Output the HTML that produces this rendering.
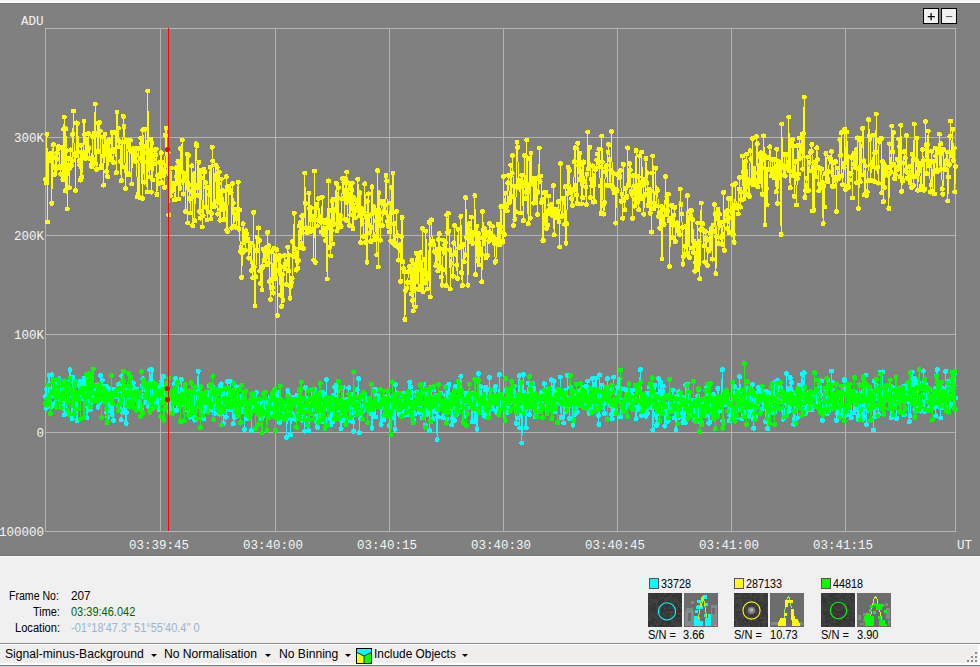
<!DOCTYPE html>
<html><head><meta charset="utf-8">
<style>
*{margin:0;padding:0;box-sizing:border-box}
html,body{width:980px;height:667px;overflow:hidden;background:#f0f0f0;font-family:"Liberation Sans",sans-serif}
#top{position:absolute;left:0;top:0;width:980px;height:3px;background:#f5f5f5;border-bottom:1px solid #fff}
#plot{position:absolute;left:0;top:0;width:980px;height:667px}
.ax{font-family:"Liberation Mono",monospace;font-size:12.5px;fill:#f4f4f4}
.btn{position:absolute;top:8px;width:16px;height:16px;border:1px solid #000;background:#f0f0f0}
.lbl{position:absolute;font-size:12px;color:#000;white-space:nowrap;transform-origin:0 0}
.r{text-align:right;width:60px;left:-2px}
.sw{position:absolute;width:10px;height:11px;border:1px solid #555}
.th{position:absolute;width:34px;height:34px;background:#3c3c3c}
.th2{position:absolute;width:34px;height:34px;background:#6e6e6e}
#tb{position:absolute;left:0;top:643px;width:980px;height:24px;border-top:1px solid #8c8c8c;background:#ffffff}
#tbin{position:absolute;left:0;top:1px;width:978px;height:18px;background:#f0eded}
#tbl{position:absolute;left:0;top:665px;width:980px;height:2px;background:#7a7a7a}
.tbt{position:absolute;top:2px;font-size:12.5px;color:#000;white-space:nowrap;transform-origin:0 0}
.arr{position:absolute;top:9px;width:0;height:0;border-left:3px solid transparent;border-right:3px solid transparent;border-top:3px solid #000}
</style></head><body>
<svg id="plot" width="980" height="667" viewBox="0 0 980 667" shape-rendering="crispEdges">
<rect x="0" y="3" width="980" height="553" fill="#808080"/>
<rect x="0" y="3" width="980" height="1" fill="#747474"/>
<rect x="0" y="555" width="980" height="1" fill="#777777"/>
<rect x="0" y="0" width="980" height="2" fill="#f5f5f5"/>
<rect x="0" y="2" width="980" height="1" fill="#ffffff"/>
<rect x="0" y="556" width="980" height="1" fill="#f8f8f8"/>
<g stroke="#b4b4b4" stroke-width="1" fill="none">
<rect x="45.5" y="28.5" width="910" height="503"/>
<path d="M160.5 28V531M275.5 28V531M389.5 28V531M503.5 28V531M617.5 28V531M731.5 28V531M845.5 28V531M45 137.5H955M45 235.5H955M45 334.5H955M45 432.5H955"/>
</g>
<g shape-rendering="auto">
<polyline fill="none" stroke="#00ffff" stroke-width="1" shape-rendering="crispEdges" points="45.5,396.3 46.2,408.1 46.9,389.2 47.6,399.3 48.3,388.3 49.0,375.4 49.7,398.7 50.4,403.7 51.1,407.1 51.8,374.8 52.5,395.7 53.2,388.5 53.9,386.1 54.6,404.8 55.3,383.8 56.0,396.3 56.7,384.5 57.4,397.4 58.1,395.7 58.8,378.8 59.5,398.2 60.2,385.3 60.9,399.0 61.6,405.7 62.3,383.6 63.0,408.3 63.7,391.7 64.4,414.8 65.1,387.7 65.8,397.4 66.5,411.9 67.2,411.6 67.9,400.6 68.6,396.0 69.3,382.4 70.0,369.7 70.7,391.9 71.4,392.2 72.1,418.5 72.8,377.4 73.5,396.0 74.2,405.8 74.9,408.1 75.6,399.8 76.3,401.0 77.0,420.8 77.7,396.0 78.4,384.2 79.1,396.5 79.8,381.0 80.5,382.1 81.2,398.4 81.9,391.6 82.6,383.9 83.3,396.7 84.0,378.4 84.7,393.5 85.4,394.8 86.1,378.1 86.8,417.9 87.5,406.5 88.2,389.7 88.9,407.0 89.6,396.7 90.3,409.9 91.0,402.5 91.7,383.7 92.4,392.7 93.1,400.1 93.8,390.2 94.5,393.6 95.2,388.8 95.9,400.8 96.6,385.4 97.3,386.4 98.0,407.3 98.7,395.1 99.4,399.5 100.1,402.2 100.8,375.5 101.5,399.6 102.2,380.2 102.9,400.3 103.6,398.6 104.3,386.1 105.0,401.3 105.7,394.1 106.4,412.6 107.1,386.8 107.8,417.3 108.5,394.9 109.2,410.4 109.9,389.1 110.7,406.2 111.4,395.1 112.1,414.3 112.8,393.2 113.5,420.6 114.2,389.0 114.9,396.5 115.6,396.9 116.3,392.0 117.0,395.6 117.7,396.5 118.4,384.6 119.1,405.4 119.8,383.9 120.5,398.6 121.2,419.8 121.9,375.9 122.6,386.3 123.3,410.8 124.0,390.1 124.7,412.5 125.4,402.4 126.1,423.4 126.8,412.5 127.5,390.5 128.2,400.5 128.9,391.3 129.6,388.5 130.3,397.1 131.0,403.8 131.7,396.0 132.4,402.0 133.1,382.9 133.8,387.9 134.5,391.7 135.2,391.9 135.9,396.6 136.6,389.2 137.3,400.2 138.0,400.0 138.7,403.1 139.4,406.9 140.1,393.6 140.8,396.7 141.5,409.8 142.2,386.1 142.9,378.9 143.6,396.2 144.3,384.2 145.0,402.2 145.7,401.1 146.4,398.4 147.1,396.8 147.8,397.9 148.5,406.4 149.2,382.8 149.9,369.8 150.6,397.2 151.3,383.4 152.0,369.9 152.7,389.8 153.4,408.0 154.1,399.7 154.8,404.4 155.5,390.3 156.2,407.0 156.9,399.2 157.6,405.2 158.3,386.8 159.0,409.9 159.7,401.4 160.4,385.1 161.1,385.7 161.8,380.9 162.5,399.5 163.2,376.4 163.9,398.5 164.6,392.0 165.3,390.9 166.0,394.1 166.7,408.5 167.4,397.6 168.1,408.6 168.8,389.5 169.5,412.5 170.2,402.4 170.9,394.4 171.6,407.5 172.3,412.4 173.0,400.2 173.7,410.4 174.4,383.8 175.1,395.0 175.8,378.5 176.5,410.3 177.2,396.0 177.9,394.8 178.6,382.6 179.3,398.4 180.0,405.0 180.7,393.4 181.4,379.3 182.1,404.3 182.8,391.5 183.5,402.4 184.2,400.9 184.9,387.9 185.6,402.4 186.3,406.3 187.0,400.1 187.7,410.2 188.4,391.7 189.1,398.9 189.8,417.1 190.5,414.7 191.2,410.3 191.9,397.2 192.6,396.7 193.3,416.3 194.0,399.6 194.7,420.1 195.4,397.7 196.1,401.6 196.8,399.6 197.5,387.3 198.2,371.3 198.9,391.2 199.6,400.0 200.3,398.7 201.0,395.0 201.7,417.9 202.4,396.4 203.1,394.2 203.8,418.7 204.5,410.6 205.2,404.3 205.9,395.2 206.6,407.3 207.3,401.7 208.0,405.2 208.7,394.4 209.4,385.9 210.1,398.7 210.8,409.8 211.5,408.9 212.2,406.6 212.9,387.2 213.6,388.9 214.3,413.3 215.0,399.1 215.7,400.9 216.4,391.5 217.1,402.6 217.8,404.8 218.5,401.7 219.2,414.1 219.9,401.3 220.6,386.0 221.3,383.9 222.0,413.1 222.7,396.2 223.4,423.6 224.1,405.9 224.8,393.5 225.5,403.4 226.2,417.2 226.9,408.8 227.6,381.7 228.3,396.6 229.0,393.7 229.7,409.8 230.4,381.5 231.1,401.7 231.8,405.7 232.5,403.3 233.2,423.7 233.9,401.4 234.6,417.4 235.3,386.2 236.0,409.6 236.7,403.9 237.4,409.2 238.1,387.7 238.8,404.3 239.5,398.7 240.2,396.6 241.0,398.3 241.7,407.6 242.4,397.3 243.1,411.5 243.8,404.2 244.5,429.6 245.2,411.4 245.9,413.3 246.6,409.3 247.3,418.7 248.0,407.4 248.7,405.5 249.4,404.0 250.1,402.3 250.8,400.1 251.5,430.3 252.2,408.1 252.9,397.4 253.6,404.4 254.3,405.9 255.0,406.3 255.7,406.7 256.4,392.7 257.1,404.2 257.8,412.5 258.5,401.7 259.2,408.2 259.9,402.9 260.6,414.1 261.3,418.9 262.0,409.6 262.7,416.3 263.4,402.4 264.1,407.0 264.8,402.3 265.5,407.6 266.2,401.9 266.9,412.5 267.6,411.6 268.3,413.7 269.0,405.1 269.7,415.0 270.4,397.0 271.1,401.9 271.8,412.8 272.5,407.7 273.2,414.9 273.9,406.5 274.6,399.6 275.3,409.2 276.0,407.5 276.7,407.7 277.4,405.5 278.1,395.6 278.8,392.3 279.5,422.8 280.2,398.9 280.9,418.7 281.6,413.9 282.3,404.7 283.0,406.6 283.7,408.7 284.4,411.1 285.1,406.4 285.8,406.9 286.5,437.4 287.2,419.2 287.9,390.6 288.6,394.6 289.3,407.7 290.0,411.3 290.7,434.6 291.4,412.5 292.1,418.4 292.8,414.9 293.5,397.6 294.2,398.2 294.9,399.5 295.6,419.3 296.3,414.7 297.0,395.3 297.7,396.0 298.4,398.2 299.1,399.4 299.8,405.2 300.5,402.2 301.2,399.2 301.9,420.2 302.6,409.1 303.3,410.6 304.0,413.5 304.7,431.1 305.4,387.5 306.1,398.6 306.8,405.3 307.5,418.7 308.2,403.3 308.9,430.7 309.6,406.7 310.3,408.9 311.0,411.4 311.7,389.9 312.4,406.8 313.1,398.6 313.8,406.3 314.5,389.6 315.2,416.4 315.9,417.1 316.6,421.5 317.3,427.4 318.0,404.2 318.7,401.7 319.4,416.9 320.1,393.0 320.8,421.8 321.5,420.3 322.2,392.6 322.9,402.9 323.6,401.0 324.3,394.4 325.0,408.6 325.7,422.2 326.4,379.5 327.1,406.2 327.8,407.0 328.5,418.3 329.2,409.9 329.9,406.1 330.6,424.8 331.3,416.6 332.0,408.7 332.7,421.7 333.4,395.4 334.1,406.3 334.8,387.1 335.5,397.3 336.2,385.3 336.9,388.4 337.6,390.7 338.3,410.9 339.0,403.5 339.7,405.7 340.4,419.2 341.1,428.8 341.8,406.0 342.5,418.0 343.2,387.3 343.9,420.5 344.6,401.4 345.3,410.4 346.0,417.6 346.7,399.7 347.4,405.5 348.1,404.5 348.8,387.9 349.5,401.6 350.2,420.6 350.9,406.0 351.6,404.8 352.3,394.2 353.0,422.0 353.7,431.4 354.4,399.4 355.1,407.6 355.8,414.2 356.5,413.9 357.2,389.7 357.9,404.1 358.6,378.8 359.3,432.8 360.0,405.6 360.7,418.8 361.4,412.8 362.1,407.6 362.8,410.8 363.5,399.8 364.2,394.2 364.9,403.8 365.6,398.8 366.3,407.6 367.0,401.1 367.7,399.7 368.4,406.7 369.1,402.2 369.8,408.8 370.6,412.4 371.3,414.0 372.0,428.4 372.7,403.5 373.4,413.0 374.1,389.8 374.8,393.3 375.5,417.0 376.2,389.8 376.9,405.0 377.6,405.4 378.3,395.8 379.0,406.3 379.7,398.7 380.4,408.1 381.1,424.5 381.8,402.6 382.5,405.4 383.2,405.2 383.9,419.9 384.6,403.3 385.3,414.9 386.0,411.3 386.7,396.6 387.4,398.6 388.1,402.0 388.8,415.1 389.5,425.3 390.2,398.1 390.9,414.3 391.6,405.0 392.3,405.2 393.0,396.8 393.7,417.6 394.4,403.9 395.1,429.3 395.8,384.5 396.5,403.3 397.2,403.4 397.9,406.7 398.6,402.5 399.3,414.4 400.0,403.2 400.7,412.7 401.4,396.9 402.1,398.6 402.8,411.1 403.5,393.6 404.2,415.2 404.9,406.9 405.6,407.9 406.3,404.2 407.0,404.8 407.7,414.3 408.4,403.8 409.1,399.8 409.8,382.3 410.5,387.0 411.2,407.0 411.9,392.7 412.6,409.5 413.3,409.0 414.0,419.9 414.7,413.8 415.4,405.9 416.1,397.3 416.8,392.0 417.5,402.3 418.2,398.7 418.9,404.9 419.6,412.3 420.3,408.7 421.0,403.8 421.7,403.0 422.4,417.9 423.1,390.8 423.8,384.0 424.5,392.0 425.2,425.4 425.9,414.5 426.6,397.2 427.3,402.8 428.0,413.2 428.7,395.0 429.4,430.5 430.1,404.0 430.8,409.7 431.5,387.0 432.2,398.4 432.9,418.7 433.6,390.1 434.3,411.6 435.0,405.3 435.7,406.2 436.4,395.8 437.1,439.6 437.8,416.9 438.5,402.2 439.2,403.7 439.9,393.6 440.6,393.1 441.3,407.6 442.0,401.1 442.7,417.6 443.4,403.6 444.1,412.6 444.8,400.1 445.5,395.4 446.2,410.2 446.9,419.4 447.6,392.7 448.3,402.1 449.0,384.5 449.7,396.4 450.4,400.7 451.1,409.0 451.8,425.0 452.5,418.2 453.2,406.5 453.9,397.8 454.6,420.5 455.3,386.6 456.0,403.1 456.7,414.2 457.4,398.4 458.1,410.2 458.8,400.3 459.5,398.2 460.2,403.7 460.9,376.3 461.6,398.5 462.3,406.9 463.0,408.0 463.7,399.4 464.4,416.1 465.1,401.5 465.8,393.1 466.5,397.0 467.2,402.6 467.9,399.3 468.6,407.4 469.3,405.8 470.0,405.3 470.7,396.5 471.4,402.6 472.1,421.8 472.8,393.2 473.5,410.7 474.2,406.4 474.9,421.9 475.6,420.1 476.3,400.6 477.0,429.4 477.7,395.9 478.4,373.5 479.1,408.2 479.8,386.3 480.5,397.8 481.2,387.0 481.9,412.3 482.6,402.2 483.3,399.6 484.0,396.5 484.7,416.2 485.4,391.0 486.1,387.3 486.8,412.6 487.5,389.9 488.2,412.7 488.9,417.4 489.6,377.5 490.3,402.0 491.0,401.3 491.7,405.0 492.4,408.9 493.1,399.2 493.8,401.7 494.5,390.0 495.2,386.6 495.9,397.7 496.6,411.2 497.3,413.1 498.0,406.3 498.7,401.7 499.4,374.7 500.1,409.5 500.9,400.1 501.6,400.8 502.3,401.6 503.0,402.7 503.7,405.0 504.4,399.4 505.1,404.1 505.8,390.4 506.5,403.1 507.2,412.6 507.9,402.4 508.6,410.9 509.3,389.2 510.0,394.2 510.7,402.4 511.4,400.3 512.1,393.4 512.8,397.4 513.5,391.2 514.2,386.2 514.9,399.4 515.6,406.0 516.3,423.4 517.0,418.0 517.7,398.8 518.4,404.5 519.1,375.6 519.8,428.0 520.5,395.9 521.2,403.5 521.9,443.0 522.6,394.5 523.3,374.5 524.0,392.0 524.7,397.2 525.4,409.3 526.1,427.9 526.8,407.5 527.5,399.8 528.2,383.1 528.9,397.3 529.6,414.4 530.3,408.5 531.0,404.7 531.7,400.7 532.4,383.5 533.1,405.9 533.8,388.0 534.5,392.2 535.2,416.6 535.9,400.3 536.6,410.6 537.3,412.0 538.0,397.3 538.7,407.9 539.4,403.4 540.1,401.2 540.8,407.8 541.5,392.8 542.2,401.1 542.9,406.9 543.6,399.0 544.3,383.8 545.0,399.8 545.7,409.1 546.4,389.9 547.1,392.5 547.8,403.8 548.5,390.7 549.2,397.2 549.9,406.4 550.6,397.5 551.3,379.8 552.0,408.7 552.7,387.8 553.4,405.4 554.1,381.3 554.8,411.8 555.5,397.8 556.2,394.0 556.9,400.9 557.6,390.5 558.3,402.9 559.0,400.6 559.7,402.6 560.4,377.0 561.1,417.5 561.8,404.5 562.5,395.5 563.2,401.9 563.9,423.0 564.6,401.8 565.3,411.8 566.0,390.1 566.7,398.5 567.4,375.3 568.1,398.9 568.8,406.0 569.5,418.2 570.2,387.5 570.9,397.3 571.6,402.1 572.3,394.5 573.0,425.1 573.7,394.7 574.4,414.9 575.1,392.7 575.8,406.2 576.5,398.8 577.2,412.1 577.9,391.9 578.6,398.0 579.3,405.0 580.0,390.9 580.7,403.6 581.4,399.5 582.1,387.3 582.8,402.2 583.5,401.9 584.2,388.1 584.9,406.0 585.6,400.5 586.3,386.0 587.0,394.1 587.7,381.1 588.4,400.3 589.1,413.3 589.8,411.3 590.5,397.0 591.2,401.5 591.9,409.6 592.6,378.3 593.3,404.0 594.0,384.0 594.7,405.7 595.4,390.1 596.1,378.2 596.8,400.9 597.5,394.4 598.2,415.5 598.9,424.5 599.6,374.9 600.3,397.9 601.0,400.2 601.7,385.0 602.4,407.6 603.1,400.2 603.8,402.4 604.5,413.2 605.2,387.5 605.9,403.8 606.6,394.8 607.3,378.6 608.0,397.9 608.7,403.5 609.4,387.4 610.1,405.3 610.8,388.0 611.5,414.3 612.2,418.8 612.9,409.7 613.6,377.1 614.3,413.9 615.0,406.9 615.7,404.7 616.4,413.3 617.1,394.0 617.8,387.2 618.5,390.2 619.2,379.2 619.9,400.0 620.6,417.0 621.3,388.8 622.0,401.7 622.7,400.2 623.4,406.3 624.1,409.1 624.8,402.6 625.5,389.6 626.2,406.4 626.9,390.9 627.6,395.4 628.3,403.0 629.0,391.9 629.7,390.2 630.4,393.6 631.2,398.8 631.9,404.2 632.6,390.0 633.3,408.2 634.0,404.8 634.7,395.6 635.4,398.7 636.1,418.6 636.8,409.1 637.5,407.9 638.2,409.2 638.9,406.0 639.6,387.7 640.3,369.6 641.0,397.0 641.7,415.3 642.4,396.1 643.1,402.0 643.8,411.9 644.5,402.1 645.2,398.7 645.9,416.1 646.6,393.3 647.3,413.6 648.0,407.9 648.7,395.4 649.4,386.9 650.1,402.6 650.8,396.7 651.5,407.7 652.2,396.8 652.9,429.9 653.6,400.2 654.3,400.5 655.0,385.3 655.7,414.7 656.4,425.4 657.1,394.7 657.8,422.7 658.5,378.3 659.2,403.8 659.9,414.2 660.6,382.2 661.3,391.0 662.0,412.6 662.7,391.2 663.4,386.1 664.1,406.0 664.8,426.1 665.5,404.0 666.2,410.4 666.9,421.3 667.6,408.5 668.3,421.1 669.0,395.8 669.7,398.8 670.4,410.0 671.1,404.5 671.8,397.5 672.5,397.6 673.2,390.2 673.9,399.8 674.6,418.0 675.3,404.2 676.0,429.7 676.7,405.8 677.4,395.9 678.1,417.5 678.8,391.8 679.5,407.1 680.2,405.3 680.9,416.8 681.6,409.1 682.3,397.5 683.0,422.5 683.7,401.5 684.4,406.7 685.1,423.0 685.8,384.8 686.5,398.2 687.2,404.9 687.9,384.3 688.6,397.8 689.3,412.3 690.0,411.0 690.7,404.2 691.4,406.2 692.1,410.4 692.8,414.4 693.5,400.1 694.2,407.9 694.9,420.9 695.6,417.6 696.3,406.7 697.0,405.3 697.7,395.9 698.4,389.3 699.1,421.1 699.8,404.0 700.5,417.3 701.2,421.9 701.9,410.0 702.6,399.7 703.3,405.6 704.0,407.4 704.7,404.0 705.4,415.7 706.1,387.6 706.8,398.9 707.5,398.8 708.2,407.4 708.9,423.2 709.6,422.3 710.3,409.7 711.0,400.3 711.7,404.4 712.4,410.3 713.1,408.3 713.8,394.5 714.5,405.8 715.2,415.6 715.9,406.9 716.6,403.4 717.3,413.8 718.0,388.5 718.7,403.7 719.4,398.2 720.1,405.3 720.8,410.8 721.5,406.1 722.2,369.6 722.9,421.0 723.6,405.1 724.3,403.8 725.0,396.0 725.7,399.2 726.4,404.8 727.1,394.3 727.8,399.4 728.5,404.6 729.2,420.7 729.9,415.3 730.6,403.2 731.3,418.5 732.0,402.2 732.7,410.8 733.4,418.4 734.1,393.9 734.8,386.7 735.5,414.9 736.2,417.4 736.9,410.3 737.6,403.9 738.3,399.8 739.0,390.1 739.7,376.7 740.4,391.9 741.1,397.1 741.8,419.0 742.5,406.5 743.2,399.5 743.9,401.7 744.6,414.0 745.3,410.9 746.0,388.3 746.7,410.1 747.4,406.4 748.1,394.7 748.8,416.2 749.5,400.7 750.2,395.7 750.9,411.2 751.6,404.9 752.3,384.5 753.0,418.7 753.7,428.2 754.4,402.3 755.1,408.6 755.8,416.2 756.5,397.9 757.2,392.7 757.9,406.0 758.6,387.8 759.3,391.6 760.0,389.5 760.8,402.0 761.5,394.0 762.2,408.9 762.9,403.6 763.6,391.9 764.3,400.8 765.0,400.7 765.7,421.6 766.4,391.1 767.1,411.6 767.8,428.6 768.5,412.1 769.2,393.1 769.9,408.4 770.6,407.2 771.3,395.0 772.0,398.3 772.7,404.5 773.4,412.4 774.1,382.6 774.8,411.9 775.5,407.2 776.2,397.8 776.9,401.4 777.6,380.8 778.3,389.7 779.0,389.2 779.7,401.0 780.4,387.2 781.1,391.3 781.8,401.5 782.5,409.7 783.2,419.2 783.9,416.0 784.6,416.0 785.3,403.1 786.0,395.4 786.7,373.7 787.4,402.0 788.1,389.6 788.8,411.4 789.5,406.9 790.2,377.7 790.9,388.7 791.6,382.6 792.3,393.1 793.0,402.0 793.7,424.2 794.4,419.2 795.1,392.2 795.8,400.4 796.5,391.8 797.2,418.0 797.9,400.0 798.6,405.4 799.3,385.1 800.0,393.5 800.7,391.5 801.4,402.0 802.1,374.4 802.8,405.3 803.5,399.9 804.2,372.9 804.9,402.6 805.6,413.2 806.3,410.2 807.0,396.4 807.7,403.5 808.4,405.9 809.1,392.5 809.8,409.2 810.5,404.8 811.2,392.4 811.9,409.9 812.6,397.7 813.3,399.8 814.0,399.9 814.7,372.8 815.4,406.2 816.1,395.3 816.8,404.0 817.5,392.7 818.2,402.8 818.9,387.7 819.6,391.1 820.3,395.9 821.0,394.7 821.7,380.9 822.4,420.2 823.1,410.3 823.8,400.9 824.5,411.8 825.2,409.1 825.9,392.6 826.6,399.5 827.3,413.8 828.0,380.0 828.7,410.6 829.4,405.1 830.1,407.1 830.8,398.0 831.5,371.0 832.2,389.0 832.9,382.8 833.6,399.1 834.3,396.8 835.0,398.3 835.7,399.6 836.4,420.2 837.1,397.9 837.8,413.4 838.5,397.7 839.2,407.5 839.9,412.5 840.6,408.0 841.3,405.7 842.0,398.4 842.7,415.7 843.4,413.1 844.1,380.3 844.8,379.6 845.5,389.6 846.2,384.5 846.9,405.2 847.6,414.5 848.3,414.8 849.0,386.1 849.7,399.4 850.4,395.2 851.1,418.0 851.8,397.8 852.5,396.7 853.2,399.0 853.9,413.0 854.6,393.8 855.3,392.7 856.0,394.6 856.7,409.5 857.4,406.6 858.1,419.1 858.8,415.5 859.5,384.9 860.2,394.0 860.9,419.5 861.6,399.2 862.3,393.4 863.0,419.2 863.7,390.6 864.4,417.0 865.1,400.1 865.8,375.0 866.5,424.5 867.2,388.7 867.9,410.1 868.6,398.1 869.3,403.3 870.0,388.2 870.7,391.0 871.4,395.1 872.1,404.8 872.8,399.1 873.5,430.0 874.2,381.0 874.9,416.8 875.6,407.4 876.3,384.9 877.0,397.9 877.7,399.0 878.4,414.7 879.1,400.9 879.8,405.5 880.5,372.0 881.2,401.3 881.9,405.6 882.6,371.9 883.3,407.9 884.0,395.3 884.7,400.4 885.4,391.2 886.1,397.6 886.8,387.9 887.5,391.3 888.2,396.3 888.9,390.8 889.6,385.9 890.3,409.0 891.1,417.9 891.8,409.4 892.5,387.3 893.2,398.5 893.9,406.3 894.6,399.2 895.3,393.4 896.0,391.1 896.7,418.3 897.4,389.5 898.1,402.1 898.8,388.8 899.5,399.0 900.2,399.1 900.9,402.4 901.6,399.1 902.3,397.2 903.0,391.3 903.7,386.0 904.4,414.7 905.1,392.5 905.8,388.6 906.5,397.9 907.2,384.6 907.9,396.6 908.6,401.5 909.3,421.7 910.0,415.8 910.7,399.9 911.4,390.6 912.1,372.0 912.8,395.1 913.5,401.4 914.2,378.4 914.9,409.6 915.6,382.8 916.3,410.6 917.0,409.6 917.7,391.1 918.4,382.5 919.1,397.3 919.8,398.8 920.5,411.1 921.2,405.8 921.9,401.6 922.6,394.7 923.3,370.9 924.0,381.7 924.7,411.3 925.4,384.0 926.1,394.2 926.8,397.6 927.5,392.4 928.2,408.6 928.9,401.9 929.6,389.8 930.3,406.5 931.0,396.6 931.7,398.1 932.4,396.5 933.1,399.9 933.8,407.9 934.5,394.7 935.2,388.8 935.9,415.9 936.6,375.9 937.3,369.7 938.0,405.1 938.7,394.3 939.4,402.0 940.1,407.3 940.8,418.0 941.5,392.6 942.2,387.9 942.9,393.7 943.6,407.4 944.3,393.2 945.0,400.9 945.7,371.4 946.4,396.3 947.1,387.6 947.8,395.6 948.5,381.6 949.2,407.1 949.9,397.0 950.6,404.2 951.3,397.5 952.0,396.2 952.7,389.9 953.4,396.1 954.1,385.3 954.8,372.6 955.5,397.9"/><path fill="none" stroke="#00ffff" stroke-width="5" stroke-linecap="round" shape-rendering="crispEdges" d="M45.5 396.3h0M46.2 408.1h0M46.9 389.2h0M47.6 399.3h0M48.3 388.3h0M49.0 375.4h0M49.7 398.7h0M50.4 403.7h0M51.1 407.1h0M51.8 374.8h0M52.5 395.7h0M53.2 388.5h0M53.9 386.1h0M54.6 404.8h0M55.3 383.8h0M56.0 396.3h0M56.7 384.5h0M57.4 397.4h0M58.1 395.7h0M58.8 378.8h0M59.5 398.2h0M60.2 385.3h0M60.9 399.0h0M61.6 405.7h0M62.3 383.6h0M63.0 408.3h0M63.7 391.7h0M64.4 414.8h0M65.1 387.7h0M65.8 397.4h0M66.5 411.9h0M67.2 411.6h0M67.9 400.6h0M68.6 396.0h0M69.3 382.4h0M70.0 369.7h0M70.7 391.9h0M71.4 392.2h0M72.1 418.5h0M72.8 377.4h0M73.5 396.0h0M74.2 405.8h0M74.9 408.1h0M75.6 399.8h0M76.3 401.0h0M77.0 420.8h0M77.7 396.0h0M78.4 384.2h0M79.1 396.5h0M79.8 381.0h0M80.5 382.1h0M81.2 398.4h0M81.9 391.6h0M82.6 383.9h0M83.3 396.7h0M84.0 378.4h0M84.7 393.5h0M85.4 394.8h0M86.1 378.1h0M86.8 417.9h0M87.5 406.5h0M88.2 389.7h0M88.9 407.0h0M89.6 396.7h0M90.3 409.9h0M91.0 402.5h0M91.7 383.7h0M92.4 392.7h0M93.1 400.1h0M93.8 390.2h0M94.5 393.6h0M95.2 388.8h0M95.9 400.8h0M96.6 385.4h0M97.3 386.4h0M98.0 407.3h0M98.7 395.1h0M99.4 399.5h0M100.1 402.2h0M100.8 375.5h0M101.5 399.6h0M102.2 380.2h0M102.9 400.3h0M103.6 398.6h0M104.3 386.1h0M105.0 401.3h0M105.7 394.1h0M106.4 412.6h0M107.1 386.8h0M107.8 417.3h0M108.5 394.9h0M109.2 410.4h0M109.9 389.1h0M110.7 406.2h0M111.4 395.1h0M112.1 414.3h0M112.8 393.2h0M113.5 420.6h0M114.2 389.0h0M114.9 396.5h0M115.6 396.9h0M116.3 392.0h0M117.0 395.6h0M117.7 396.5h0M118.4 384.6h0M119.1 405.4h0M119.8 383.9h0M120.5 398.6h0M121.2 419.8h0M121.9 375.9h0M122.6 386.3h0M123.3 410.8h0M124.0 390.1h0M124.7 412.5h0M125.4 402.4h0M126.1 423.4h0M126.8 412.5h0M127.5 390.5h0M128.2 400.5h0M128.9 391.3h0M129.6 388.5h0M130.3 397.1h0M131.0 403.8h0M131.7 396.0h0M132.4 402.0h0M133.1 382.9h0M133.8 387.9h0M134.5 391.7h0M135.2 391.9h0M135.9 396.6h0M136.6 389.2h0M137.3 400.2h0M138.0 400.0h0M138.7 403.1h0M139.4 406.9h0M140.1 393.6h0M140.8 396.7h0M141.5 409.8h0M142.2 386.1h0M142.9 378.9h0M143.6 396.2h0M144.3 384.2h0M145.0 402.2h0M145.7 401.1h0M146.4 398.4h0M147.1 396.8h0M147.8 397.9h0M148.5 406.4h0M149.2 382.8h0M149.9 369.8h0M150.6 397.2h0M151.3 383.4h0M152.0 369.9h0M152.7 389.8h0M153.4 408.0h0M154.1 399.7h0M154.8 404.4h0M155.5 390.3h0M156.2 407.0h0M156.9 399.2h0M157.6 405.2h0M158.3 386.8h0M159.0 409.9h0M159.7 401.4h0M160.4 385.1h0M161.1 385.7h0M161.8 380.9h0M162.5 399.5h0M163.2 376.4h0M163.9 398.5h0M164.6 392.0h0M165.3 390.9h0M166.0 394.1h0M166.7 408.5h0M167.4 397.6h0M168.1 408.6h0M168.8 389.5h0M169.5 412.5h0M170.2 402.4h0M170.9 394.4h0M171.6 407.5h0M172.3 412.4h0M173.0 400.2h0M173.7 410.4h0M174.4 383.8h0M175.1 395.0h0M175.8 378.5h0M176.5 410.3h0M177.2 396.0h0M177.9 394.8h0M178.6 382.6h0M179.3 398.4h0M180.0 405.0h0M180.7 393.4h0M181.4 379.3h0M182.1 404.3h0M182.8 391.5h0M183.5 402.4h0M184.2 400.9h0M184.9 387.9h0M185.6 402.4h0M186.3 406.3h0M187.0 400.1h0M187.7 410.2h0M188.4 391.7h0M189.1 398.9h0M189.8 417.1h0M190.5 414.7h0M191.2 410.3h0M191.9 397.2h0M192.6 396.7h0M193.3 416.3h0M194.0 399.6h0M194.7 420.1h0M195.4 397.7h0M196.1 401.6h0M196.8 399.6h0M197.5 387.3h0M198.2 371.3h0M198.9 391.2h0M199.6 400.0h0M200.3 398.7h0M201.0 395.0h0M201.7 417.9h0M202.4 396.4h0M203.1 394.2h0M203.8 418.7h0M204.5 410.6h0M205.2 404.3h0M205.9 395.2h0M206.6 407.3h0M207.3 401.7h0M208.0 405.2h0M208.7 394.4h0M209.4 385.9h0M210.1 398.7h0M210.8 409.8h0M211.5 408.9h0M212.2 406.6h0M212.9 387.2h0M213.6 388.9h0M214.3 413.3h0M215.0 399.1h0M215.7 400.9h0M216.4 391.5h0M217.1 402.6h0M217.8 404.8h0M218.5 401.7h0M219.2 414.1h0M219.9 401.3h0M220.6 386.0h0M221.3 383.9h0M222.0 413.1h0M222.7 396.2h0M223.4 423.6h0M224.1 405.9h0M224.8 393.5h0M225.5 403.4h0M226.2 417.2h0M226.9 408.8h0M227.6 381.7h0M228.3 396.6h0M229.0 393.7h0M229.7 409.8h0M230.4 381.5h0M231.1 401.7h0M231.8 405.7h0M232.5 403.3h0M233.2 423.7h0M233.9 401.4h0M234.6 417.4h0M235.3 386.2h0M236.0 409.6h0M236.7 403.9h0M237.4 409.2h0M238.1 387.7h0M238.8 404.3h0M239.5 398.7h0M240.2 396.6h0M241.0 398.3h0M241.7 407.6h0M242.4 397.3h0M243.1 411.5h0M243.8 404.2h0M244.5 429.6h0M245.2 411.4h0M245.9 413.3h0M246.6 409.3h0M247.3 418.7h0M248.0 407.4h0M248.7 405.5h0M249.4 404.0h0M250.1 402.3h0M250.8 400.1h0M251.5 430.3h0M252.2 408.1h0M252.9 397.4h0M253.6 404.4h0M254.3 405.9h0M255.0 406.3h0M255.7 406.7h0M256.4 392.7h0M257.1 404.2h0M257.8 412.5h0M258.5 401.7h0M259.2 408.2h0M259.9 402.9h0M260.6 414.1h0M261.3 418.9h0M262.0 409.6h0M262.7 416.3h0M263.4 402.4h0M264.1 407.0h0M264.8 402.3h0M265.5 407.6h0M266.2 401.9h0M266.9 412.5h0M267.6 411.6h0M268.3 413.7h0M269.0 405.1h0M269.7 415.0h0M270.4 397.0h0M271.1 401.9h0M271.8 412.8h0M272.5 407.7h0M273.2 414.9h0M273.9 406.5h0M274.6 399.6h0M275.3 409.2h0M276.0 407.5h0M276.7 407.7h0M277.4 405.5h0M278.1 395.6h0M278.8 392.3h0M279.5 422.8h0M280.2 398.9h0M280.9 418.7h0M281.6 413.9h0M282.3 404.7h0M283.0 406.6h0M283.7 408.7h0M284.4 411.1h0M285.1 406.4h0M285.8 406.9h0M286.5 437.4h0M287.2 419.2h0M287.9 390.6h0M288.6 394.6h0M289.3 407.7h0M290.0 411.3h0M290.7 434.6h0M291.4 412.5h0M292.1 418.4h0M292.8 414.9h0M293.5 397.6h0M294.2 398.2h0M294.9 399.5h0M295.6 419.3h0M296.3 414.7h0M297.0 395.3h0M297.7 396.0h0M298.4 398.2h0M299.1 399.4h0M299.8 405.2h0M300.5 402.2h0M301.2 399.2h0M301.9 420.2h0M302.6 409.1h0M303.3 410.6h0M304.0 413.5h0M304.7 431.1h0M305.4 387.5h0M306.1 398.6h0M306.8 405.3h0M307.5 418.7h0M308.2 403.3h0M308.9 430.7h0M309.6 406.7h0M310.3 408.9h0M311.0 411.4h0M311.7 389.9h0M312.4 406.8h0M313.1 398.6h0M313.8 406.3h0M314.5 389.6h0M315.2 416.4h0M315.9 417.1h0M316.6 421.5h0M317.3 427.4h0M318.0 404.2h0M318.7 401.7h0M319.4 416.9h0M320.1 393.0h0M320.8 421.8h0M321.5 420.3h0M322.2 392.6h0M322.9 402.9h0M323.6 401.0h0M324.3 394.4h0M325.0 408.6h0M325.7 422.2h0M326.4 379.5h0M327.1 406.2h0M327.8 407.0h0M328.5 418.3h0M329.2 409.9h0M329.9 406.1h0M330.6 424.8h0M331.3 416.6h0M332.0 408.7h0M332.7 421.7h0M333.4 395.4h0M334.1 406.3h0M334.8 387.1h0M335.5 397.3h0M336.2 385.3h0M336.9 388.4h0M337.6 390.7h0M338.3 410.9h0M339.0 403.5h0M339.7 405.7h0M340.4 419.2h0M341.1 428.8h0M341.8 406.0h0M342.5 418.0h0M343.2 387.3h0M343.9 420.5h0M344.6 401.4h0M345.3 410.4h0M346.0 417.6h0M346.7 399.7h0M347.4 405.5h0M348.1 404.5h0M348.8 387.9h0M349.5 401.6h0M350.2 420.6h0M350.9 406.0h0M351.6 404.8h0M352.3 394.2h0M353.0 422.0h0M353.7 431.4h0M354.4 399.4h0M355.1 407.6h0M355.8 414.2h0M356.5 413.9h0M357.2 389.7h0M357.9 404.1h0M358.6 378.8h0M359.3 432.8h0M360.0 405.6h0M360.7 418.8h0M361.4 412.8h0M362.1 407.6h0M362.8 410.8h0M363.5 399.8h0M364.2 394.2h0M364.9 403.8h0M365.6 398.8h0M366.3 407.6h0M367.0 401.1h0M367.7 399.7h0M368.4 406.7h0M369.1 402.2h0M369.8 408.8h0M370.6 412.4h0M371.3 414.0h0M372.0 428.4h0M372.7 403.5h0M373.4 413.0h0M374.1 389.8h0M374.8 393.3h0M375.5 417.0h0M376.2 389.8h0M376.9 405.0h0M377.6 405.4h0M378.3 395.8h0M379.0 406.3h0M379.7 398.7h0M380.4 408.1h0M381.1 424.5h0M381.8 402.6h0M382.5 405.4h0M383.2 405.2h0M383.9 419.9h0M384.6 403.3h0M385.3 414.9h0M386.0 411.3h0M386.7 396.6h0M387.4 398.6h0M388.1 402.0h0M388.8 415.1h0M389.5 425.3h0M390.2 398.1h0M390.9 414.3h0M391.6 405.0h0M392.3 405.2h0M393.0 396.8h0M393.7 417.6h0M394.4 403.9h0M395.1 429.3h0M395.8 384.5h0M396.5 403.3h0M397.2 403.4h0M397.9 406.7h0M398.6 402.5h0M399.3 414.4h0M400.0 403.2h0M400.7 412.7h0M401.4 396.9h0M402.1 398.6h0M402.8 411.1h0M403.5 393.6h0M404.2 415.2h0M404.9 406.9h0M405.6 407.9h0M406.3 404.2h0M407.0 404.8h0M407.7 414.3h0M408.4 403.8h0M409.1 399.8h0M409.8 382.3h0M410.5 387.0h0M411.2 407.0h0M411.9 392.7h0M412.6 409.5h0M413.3 409.0h0M414.0 419.9h0M414.7 413.8h0M415.4 405.9h0M416.1 397.3h0M416.8 392.0h0M417.5 402.3h0M418.2 398.7h0M418.9 404.9h0M419.6 412.3h0M420.3 408.7h0M421.0 403.8h0M421.7 403.0h0M422.4 417.9h0M423.1 390.8h0M423.8 384.0h0M424.5 392.0h0M425.2 425.4h0M425.9 414.5h0M426.6 397.2h0M427.3 402.8h0M428.0 413.2h0M428.7 395.0h0M429.4 430.5h0M430.1 404.0h0M430.8 409.7h0M431.5 387.0h0M432.2 398.4h0M432.9 418.7h0M433.6 390.1h0M434.3 411.6h0M435.0 405.3h0M435.7 406.2h0M436.4 395.8h0M437.1 439.6h0M437.8 416.9h0M438.5 402.2h0M439.2 403.7h0M439.9 393.6h0M440.6 393.1h0M441.3 407.6h0M442.0 401.1h0M442.7 417.6h0M443.4 403.6h0M444.1 412.6h0M444.8 400.1h0M445.5 395.4h0M446.2 410.2h0M446.9 419.4h0M447.6 392.7h0M448.3 402.1h0M449.0 384.5h0M449.7 396.4h0M450.4 400.7h0M451.1 409.0h0M451.8 425.0h0M452.5 418.2h0M453.2 406.5h0M453.9 397.8h0M454.6 420.5h0M455.3 386.6h0M456.0 403.1h0M456.7 414.2h0M457.4 398.4h0M458.1 410.2h0M458.8 400.3h0M459.5 398.2h0M460.2 403.7h0M460.9 376.3h0M461.6 398.5h0M462.3 406.9h0M463.0 408.0h0M463.7 399.4h0M464.4 416.1h0M465.1 401.5h0M465.8 393.1h0M466.5 397.0h0M467.2 402.6h0M467.9 399.3h0M468.6 407.4h0M469.3 405.8h0M470.0 405.3h0M470.7 396.5h0M471.4 402.6h0M472.1 421.8h0M472.8 393.2h0M473.5 410.7h0M474.2 406.4h0M474.9 421.9h0M475.6 420.1h0M476.3 400.6h0M477.0 429.4h0M477.7 395.9h0M478.4 373.5h0M479.1 408.2h0M479.8 386.3h0M480.5 397.8h0M481.2 387.0h0M481.9 412.3h0M482.6 402.2h0M483.3 399.6h0M484.0 396.5h0M484.7 416.2h0M485.4 391.0h0M486.1 387.3h0M486.8 412.6h0M487.5 389.9h0M488.2 412.7h0M488.9 417.4h0M489.6 377.5h0M490.3 402.0h0M491.0 401.3h0M491.7 405.0h0M492.4 408.9h0M493.1 399.2h0M493.8 401.7h0M494.5 390.0h0M495.2 386.6h0M495.9 397.7h0M496.6 411.2h0M497.3 413.1h0M498.0 406.3h0M498.7 401.7h0M499.4 374.7h0M500.1 409.5h0M500.9 400.1h0M501.6 400.8h0M502.3 401.6h0M503.0 402.7h0M503.7 405.0h0M504.4 399.4h0M505.1 404.1h0M505.8 390.4h0M506.5 403.1h0M507.2 412.6h0M507.9 402.4h0M508.6 410.9h0M509.3 389.2h0M510.0 394.2h0M510.7 402.4h0M511.4 400.3h0M512.1 393.4h0M512.8 397.4h0M513.5 391.2h0M514.2 386.2h0M514.9 399.4h0M515.6 406.0h0M516.3 423.4h0M517.0 418.0h0M517.7 398.8h0M518.4 404.5h0M519.1 375.6h0M519.8 428.0h0M520.5 395.9h0M521.2 403.5h0M521.9 443.0h0M522.6 394.5h0M523.3 374.5h0M524.0 392.0h0M524.7 397.2h0M525.4 409.3h0M526.1 427.9h0M526.8 407.5h0M527.5 399.8h0M528.2 383.1h0M528.9 397.3h0M529.6 414.4h0M530.3 408.5h0M531.0 404.7h0M531.7 400.7h0M532.4 383.5h0M533.1 405.9h0M533.8 388.0h0M534.5 392.2h0M535.2 416.6h0M535.9 400.3h0M536.6 410.6h0M537.3 412.0h0M538.0 397.3h0M538.7 407.9h0M539.4 403.4h0M540.1 401.2h0M540.8 407.8h0M541.5 392.8h0M542.2 401.1h0M542.9 406.9h0M543.6 399.0h0M544.3 383.8h0M545.0 399.8h0M545.7 409.1h0M546.4 389.9h0M547.1 392.5h0M547.8 403.8h0M548.5 390.7h0M549.2 397.2h0M549.9 406.4h0M550.6 397.5h0M551.3 379.8h0M552.0 408.7h0M552.7 387.8h0M553.4 405.4h0M554.1 381.3h0M554.8 411.8h0M555.5 397.8h0M556.2 394.0h0M556.9 400.9h0M557.6 390.5h0M558.3 402.9h0M559.0 400.6h0M559.7 402.6h0M560.4 377.0h0M561.1 417.5h0M561.8 404.5h0M562.5 395.5h0M563.2 401.9h0M563.9 423.0h0M564.6 401.8h0M565.3 411.8h0M566.0 390.1h0M566.7 398.5h0M567.4 375.3h0M568.1 398.9h0M568.8 406.0h0M569.5 418.2h0M570.2 387.5h0M570.9 397.3h0M571.6 402.1h0M572.3 394.5h0M573.0 425.1h0M573.7 394.7h0M574.4 414.9h0M575.1 392.7h0M575.8 406.2h0M576.5 398.8h0M577.2 412.1h0M577.9 391.9h0M578.6 398.0h0M579.3 405.0h0M580.0 390.9h0M580.7 403.6h0M581.4 399.5h0M582.1 387.3h0M582.8 402.2h0M583.5 401.9h0M584.2 388.1h0M584.9 406.0h0M585.6 400.5h0M586.3 386.0h0M587.0 394.1h0M587.7 381.1h0M588.4 400.3h0M589.1 413.3h0M589.8 411.3h0M590.5 397.0h0M591.2 401.5h0M591.9 409.6h0M592.6 378.3h0M593.3 404.0h0M594.0 384.0h0M594.7 405.7h0M595.4 390.1h0M596.1 378.2h0M596.8 400.9h0M597.5 394.4h0M598.2 415.5h0M598.9 424.5h0M599.6 374.9h0M600.3 397.9h0M601.0 400.2h0M601.7 385.0h0M602.4 407.6h0M603.1 400.2h0M603.8 402.4h0M604.5 413.2h0M605.2 387.5h0M605.9 403.8h0M606.6 394.8h0M607.3 378.6h0M608.0 397.9h0M608.7 403.5h0M609.4 387.4h0M610.1 405.3h0M610.8 388.0h0M611.5 414.3h0M612.2 418.8h0M612.9 409.7h0M613.6 377.1h0M614.3 413.9h0M615.0 406.9h0M615.7 404.7h0M616.4 413.3h0M617.1 394.0h0M617.8 387.2h0M618.5 390.2h0M619.2 379.2h0M619.9 400.0h0M620.6 417.0h0M621.3 388.8h0M622.0 401.7h0M622.7 400.2h0M623.4 406.3h0M624.1 409.1h0M624.8 402.6h0M625.5 389.6h0M626.2 406.4h0M626.9 390.9h0M627.6 395.4h0M628.3 403.0h0M629.0 391.9h0M629.7 390.2h0M630.4 393.6h0M631.2 398.8h0M631.9 404.2h0M632.6 390.0h0M633.3 408.2h0M634.0 404.8h0M634.7 395.6h0M635.4 398.7h0M636.1 418.6h0M636.8 409.1h0M637.5 407.9h0M638.2 409.2h0M638.9 406.0h0M639.6 387.7h0M640.3 369.6h0M641.0 397.0h0M641.7 415.3h0M642.4 396.1h0M643.1 402.0h0M643.8 411.9h0M644.5 402.1h0M645.2 398.7h0M645.9 416.1h0M646.6 393.3h0M647.3 413.6h0M648.0 407.9h0M648.7 395.4h0M649.4 386.9h0M650.1 402.6h0M650.8 396.7h0M651.5 407.7h0M652.2 396.8h0M652.9 429.9h0M653.6 400.2h0M654.3 400.5h0M655.0 385.3h0M655.7 414.7h0M656.4 425.4h0M657.1 394.7h0M657.8 422.7h0M658.5 378.3h0M659.2 403.8h0M659.9 414.2h0M660.6 382.2h0M661.3 391.0h0M662.0 412.6h0M662.7 391.2h0M663.4 386.1h0M664.1 406.0h0M664.8 426.1h0M665.5 404.0h0M666.2 410.4h0M666.9 421.3h0M667.6 408.5h0M668.3 421.1h0M669.0 395.8h0M669.7 398.8h0M670.4 410.0h0M671.1 404.5h0M671.8 397.5h0M672.5 397.6h0M673.2 390.2h0M673.9 399.8h0M674.6 418.0h0M675.3 404.2h0M676.0 429.7h0M676.7 405.8h0M677.4 395.9h0M678.1 417.5h0M678.8 391.8h0M679.5 407.1h0M680.2 405.3h0M680.9 416.8h0M681.6 409.1h0M682.3 397.5h0M683.0 422.5h0M683.7 401.5h0M684.4 406.7h0M685.1 423.0h0M685.8 384.8h0M686.5 398.2h0M687.2 404.9h0M687.9 384.3h0M688.6 397.8h0M689.3 412.3h0M690.0 411.0h0M690.7 404.2h0M691.4 406.2h0M692.1 410.4h0M692.8 414.4h0M693.5 400.1h0M694.2 407.9h0M694.9 420.9h0M695.6 417.6h0M696.3 406.7h0M697.0 405.3h0M697.7 395.9h0M698.4 389.3h0M699.1 421.1h0M699.8 404.0h0M700.5 417.3h0M701.2 421.9h0M701.9 410.0h0M702.6 399.7h0M703.3 405.6h0M704.0 407.4h0M704.7 404.0h0M705.4 415.7h0M706.1 387.6h0M706.8 398.9h0M707.5 398.8h0M708.2 407.4h0M708.9 423.2h0M709.6 422.3h0M710.3 409.7h0M711.0 400.3h0M711.7 404.4h0M712.4 410.3h0M713.1 408.3h0M713.8 394.5h0M714.5 405.8h0M715.2 415.6h0M715.9 406.9h0M716.6 403.4h0M717.3 413.8h0M718.0 388.5h0M718.7 403.7h0M719.4 398.2h0M720.1 405.3h0M720.8 410.8h0M721.5 406.1h0M722.2 369.6h0M722.9 421.0h0M723.6 405.1h0M724.3 403.8h0M725.0 396.0h0M725.7 399.2h0M726.4 404.8h0M727.1 394.3h0M727.8 399.4h0M728.5 404.6h0M729.2 420.7h0M729.9 415.3h0M730.6 403.2h0M731.3 418.5h0M732.0 402.2h0M732.7 410.8h0M733.4 418.4h0M734.1 393.9h0M734.8 386.7h0M735.5 414.9h0M736.2 417.4h0M736.9 410.3h0M737.6 403.9h0M738.3 399.8h0M739.0 390.1h0M739.7 376.7h0M740.4 391.9h0M741.1 397.1h0M741.8 419.0h0M742.5 406.5h0M743.2 399.5h0M743.9 401.7h0M744.6 414.0h0M745.3 410.9h0M746.0 388.3h0M746.7 410.1h0M747.4 406.4h0M748.1 394.7h0M748.8 416.2h0M749.5 400.7h0M750.2 395.7h0M750.9 411.2h0M751.6 404.9h0M752.3 384.5h0M753.0 418.7h0M753.7 428.2h0M754.4 402.3h0M755.1 408.6h0M755.8 416.2h0M756.5 397.9h0M757.2 392.7h0M757.9 406.0h0M758.6 387.8h0M759.3 391.6h0M760.0 389.5h0M760.8 402.0h0M761.5 394.0h0M762.2 408.9h0M762.9 403.6h0M763.6 391.9h0M764.3 400.8h0M765.0 400.7h0M765.7 421.6h0M766.4 391.1h0M767.1 411.6h0M767.8 428.6h0M768.5 412.1h0M769.2 393.1h0M769.9 408.4h0M770.6 407.2h0M771.3 395.0h0M772.0 398.3h0M772.7 404.5h0M773.4 412.4h0M774.1 382.6h0M774.8 411.9h0M775.5 407.2h0M776.2 397.8h0M776.9 401.4h0M777.6 380.8h0M778.3 389.7h0M779.0 389.2h0M779.7 401.0h0M780.4 387.2h0M781.1 391.3h0M781.8 401.5h0M782.5 409.7h0M783.2 419.2h0M783.9 416.0h0M784.6 416.0h0M785.3 403.1h0M786.0 395.4h0M786.7 373.7h0M787.4 402.0h0M788.1 389.6h0M788.8 411.4h0M789.5 406.9h0M790.2 377.7h0M790.9 388.7h0M791.6 382.6h0M792.3 393.1h0M793.0 402.0h0M793.7 424.2h0M794.4 419.2h0M795.1 392.2h0M795.8 400.4h0M796.5 391.8h0M797.2 418.0h0M797.9 400.0h0M798.6 405.4h0M799.3 385.1h0M800.0 393.5h0M800.7 391.5h0M801.4 402.0h0M802.1 374.4h0M802.8 405.3h0M803.5 399.9h0M804.2 372.9h0M804.9 402.6h0M805.6 413.2h0M806.3 410.2h0M807.0 396.4h0M807.7 403.5h0M808.4 405.9h0M809.1 392.5h0M809.8 409.2h0M810.5 404.8h0M811.2 392.4h0M811.9 409.9h0M812.6 397.7h0M813.3 399.8h0M814.0 399.9h0M814.7 372.8h0M815.4 406.2h0M816.1 395.3h0M816.8 404.0h0M817.5 392.7h0M818.2 402.8h0M818.9 387.7h0M819.6 391.1h0M820.3 395.9h0M821.0 394.7h0M821.7 380.9h0M822.4 420.2h0M823.1 410.3h0M823.8 400.9h0M824.5 411.8h0M825.2 409.1h0M825.9 392.6h0M826.6 399.5h0M827.3 413.8h0M828.0 380.0h0M828.7 410.6h0M829.4 405.1h0M830.1 407.1h0M830.8 398.0h0M831.5 371.0h0M832.2 389.0h0M832.9 382.8h0M833.6 399.1h0M834.3 396.8h0M835.0 398.3h0M835.7 399.6h0M836.4 420.2h0M837.1 397.9h0M837.8 413.4h0M838.5 397.7h0M839.2 407.5h0M839.9 412.5h0M840.6 408.0h0M841.3 405.7h0M842.0 398.4h0M842.7 415.7h0M843.4 413.1h0M844.1 380.3h0M844.8 379.6h0M845.5 389.6h0M846.2 384.5h0M846.9 405.2h0M847.6 414.5h0M848.3 414.8h0M849.0 386.1h0M849.7 399.4h0M850.4 395.2h0M851.1 418.0h0M851.8 397.8h0M852.5 396.7h0M853.2 399.0h0M853.9 413.0h0M854.6 393.8h0M855.3 392.7h0M856.0 394.6h0M856.7 409.5h0M857.4 406.6h0M858.1 419.1h0M858.8 415.5h0M859.5 384.9h0M860.2 394.0h0M860.9 419.5h0M861.6 399.2h0M862.3 393.4h0M863.0 419.2h0M863.7 390.6h0M864.4 417.0h0M865.1 400.1h0M865.8 375.0h0M866.5 424.5h0M867.2 388.7h0M867.9 410.1h0M868.6 398.1h0M869.3 403.3h0M870.0 388.2h0M870.7 391.0h0M871.4 395.1h0M872.1 404.8h0M872.8 399.1h0M873.5 430.0h0M874.2 381.0h0M874.9 416.8h0M875.6 407.4h0M876.3 384.9h0M877.0 397.9h0M877.7 399.0h0M878.4 414.7h0M879.1 400.9h0M879.8 405.5h0M880.5 372.0h0M881.2 401.3h0M881.9 405.6h0M882.6 371.9h0M883.3 407.9h0M884.0 395.3h0M884.7 400.4h0M885.4 391.2h0M886.1 397.6h0M886.8 387.9h0M887.5 391.3h0M888.2 396.3h0M888.9 390.8h0M889.6 385.9h0M890.3 409.0h0M891.1 417.9h0M891.8 409.4h0M892.5 387.3h0M893.2 398.5h0M893.9 406.3h0M894.6 399.2h0M895.3 393.4h0M896.0 391.1h0M896.7 418.3h0M897.4 389.5h0M898.1 402.1h0M898.8 388.8h0M899.5 399.0h0M900.2 399.1h0M900.9 402.4h0M901.6 399.1h0M902.3 397.2h0M903.0 391.3h0M903.7 386.0h0M904.4 414.7h0M905.1 392.5h0M905.8 388.6h0M906.5 397.9h0M907.2 384.6h0M907.9 396.6h0M908.6 401.5h0M909.3 421.7h0M910.0 415.8h0M910.7 399.9h0M911.4 390.6h0M912.1 372.0h0M912.8 395.1h0M913.5 401.4h0M914.2 378.4h0M914.9 409.6h0M915.6 382.8h0M916.3 410.6h0M917.0 409.6h0M917.7 391.1h0M918.4 382.5h0M919.1 397.3h0M919.8 398.8h0M920.5 411.1h0M921.2 405.8h0M921.9 401.6h0M922.6 394.7h0M923.3 370.9h0M924.0 381.7h0M924.7 411.3h0M925.4 384.0h0M926.1 394.2h0M926.8 397.6h0M927.5 392.4h0M928.2 408.6h0M928.9 401.9h0M929.6 389.8h0M930.3 406.5h0M931.0 396.6h0M931.7 398.1h0M932.4 396.5h0M933.1 399.9h0M933.8 407.9h0M934.5 394.7h0M935.2 388.8h0M935.9 415.9h0M936.6 375.9h0M937.3 369.7h0M938.0 405.1h0M938.7 394.3h0M939.4 402.0h0M940.1 407.3h0M940.8 418.0h0M941.5 392.6h0M942.2 387.9h0M942.9 393.7h0M943.6 407.4h0M944.3 393.2h0M945.0 400.9h0M945.7 371.4h0M946.4 396.3h0M947.1 387.6h0M947.8 395.6h0M948.5 381.6h0M949.2 407.1h0M949.9 397.0h0M950.6 404.2h0M951.3 397.5h0M952.0 396.2h0M952.7 389.9h0M953.4 396.1h0M954.1 385.3h0M954.8 372.6h0M955.5 397.9h0"/><polyline fill="none" stroke="#00ff00" stroke-width="1" shape-rendering="crispEdges" points="45.5,403.8 46.2,405.1 46.9,399.6 47.6,384.9 48.3,402.5 49.0,395.9 49.7,399.0 50.4,413.7 51.1,391.3 51.8,393.5 52.5,382.4 53.2,392.3 53.9,380.0 54.6,387.1 55.3,397.4 56.0,407.4 56.7,392.7 57.4,397.7 58.1,379.6 58.8,396.6 59.5,385.8 60.2,402.9 60.9,407.9 61.6,383.6 62.3,393.0 63.0,398.8 63.7,385.1 64.4,380.9 65.1,395.8 65.8,385.3 66.5,393.4 67.2,403.2 67.9,410.0 68.6,383.3 69.3,414.2 70.0,378.3 70.7,389.1 71.4,393.6 72.1,401.2 72.8,405.9 73.5,398.2 74.2,414.3 74.9,385.6 75.6,381.6 76.3,399.0 77.0,397.1 77.7,392.7 78.4,408.9 79.1,398.7 79.8,391.7 80.5,419.0 81.2,389.7 81.9,388.0 82.6,393.5 83.3,395.2 84.0,418.0 84.7,388.4 85.4,401.1 86.1,403.8 86.8,374.6 87.5,396.8 88.2,393.5 88.9,373.9 89.6,395.0 90.3,406.7 91.0,374.5 91.7,400.1 92.4,385.4 93.1,369.0 93.8,393.1 94.5,401.1 95.2,400.3 95.9,395.5 96.6,386.8 97.3,386.7 98.0,401.1 98.7,394.0 99.4,384.1 100.1,388.0 100.8,395.0 101.5,417.2 102.2,397.4 102.9,394.1 103.6,388.5 104.3,396.3 105.0,402.8 105.7,391.3 106.4,408.6 107.1,422.5 107.8,393.1 108.5,393.9 109.2,394.8 109.9,398.1 110.7,400.2 111.4,375.4 112.1,394.1 112.8,403.9 113.5,394.3 114.2,392.7 114.9,396.0 115.6,395.3 116.3,390.5 117.0,394.9 117.7,405.8 118.4,410.8 119.1,404.1 119.8,388.6 120.5,403.4 121.2,399.6 121.9,400.1 122.6,381.5 123.3,371.4 124.0,381.4 124.7,386.4 125.4,394.3 126.1,392.3 126.8,405.7 127.5,401.6 128.2,373.4 128.9,395.5 129.6,406.3 130.3,386.2 131.0,377.0 131.7,403.6 132.4,400.5 133.1,392.4 133.8,397.2 134.5,408.0 135.2,393.3 135.9,397.1 136.6,410.4 137.3,390.9 138.0,395.6 138.7,396.7 139.4,392.1 140.1,395.4 140.8,416.5 141.5,371.7 142.2,413.6 142.9,412.9 143.6,380.2 144.3,385.1 145.0,386.8 145.7,397.7 146.4,393.7 147.1,386.4 147.8,397.0 148.5,383.5 149.2,400.9 149.9,412.1 150.6,410.0 151.3,386.6 152.0,404.5 152.7,399.8 153.4,397.5 154.1,382.9 154.8,386.9 155.5,406.2 156.2,384.3 156.9,393.8 157.6,396.0 158.3,391.4 159.0,393.2 159.7,395.0 160.4,416.5 161.1,402.6 161.8,394.0 162.5,389.4 163.2,398.7 163.9,420.3 164.6,409.3 165.3,401.4 166.0,384.7 166.7,407.2 167.4,383.0 168.1,392.6 168.8,378.3 169.5,391.8 170.2,391.5 170.9,398.1 171.6,395.5 172.3,413.3 173.0,403.8 173.7,398.6 174.4,390.3 175.1,387.2 175.8,403.0 176.5,397.2 177.2,382.6 177.9,397.3 178.6,397.4 179.3,406.4 180.0,395.9 180.7,421.6 181.4,394.6 182.1,400.4 182.8,402.8 183.5,396.0 184.2,420.8 184.9,387.4 185.6,384.6 186.3,402.0 187.0,408.3 187.7,391.7 188.4,415.5 189.1,392.5 189.8,394.9 190.5,414.7 191.2,382.9 191.9,412.8 192.6,393.0 193.3,412.6 194.0,390.8 194.7,386.9 195.4,387.3 196.1,408.1 196.8,418.5 197.5,402.1 198.2,393.5 198.9,406.1 199.6,399.0 200.3,427.6 201.0,386.8 201.7,399.2 202.4,415.7 203.1,394.2 203.8,393.7 204.5,402.3 205.2,400.9 205.9,391.8 206.6,402.3 207.3,399.7 208.0,412.4 208.7,399.9 209.4,399.9 210.1,384.7 210.8,406.8 211.5,404.6 212.2,392.7 212.9,376.3 213.6,419.7 214.3,393.6 215.0,393.5 215.7,389.7 216.4,394.1 217.1,408.2 217.8,393.8 218.5,403.9 219.2,400.8 219.9,412.9 220.6,390.0 221.3,425.1 222.0,406.4 222.7,409.6 223.4,411.9 224.1,398.9 224.8,398.3 225.5,388.7 226.2,402.8 226.9,406.8 227.6,403.9 228.3,388.5 229.0,400.8 229.7,396.7 230.4,403.3 231.1,404.7 231.8,407.1 232.5,390.9 233.2,391.8 233.9,383.4 234.6,403.7 235.3,411.2 236.0,394.1 236.7,403.4 237.4,416.1 238.1,411.7 238.8,389.6 239.5,403.3 240.2,422.6 241.0,402.7 241.7,385.3 242.4,404.6 243.1,394.7 243.8,400.7 244.5,391.9 245.2,410.6 245.9,390.7 246.6,414.4 247.3,409.9 248.0,402.6 248.7,406.9 249.4,417.2 250.1,401.3 250.8,414.3 251.5,394.6 252.2,398.3 252.9,402.6 253.6,393.4 254.3,410.8 255.0,404.1 255.7,428.3 256.4,399.2 257.1,406.3 257.8,413.5 258.5,424.3 259.2,398.9 259.9,412.4 260.6,408.8 261.3,415.1 262.0,433.0 262.7,410.7 263.4,393.7 264.1,397.0 264.8,398.5 265.5,392.1 266.2,414.1 266.9,430.3 267.6,406.3 268.3,406.3 269.0,417.6 269.7,401.8 270.4,409.0 271.1,408.5 271.8,396.6 272.5,393.1 273.2,399.9 273.9,416.3 274.6,389.1 275.3,430.6 276.0,404.9 276.7,418.2 277.4,400.1 278.1,418.1 278.8,406.6 279.5,404.9 280.2,386.2 280.9,415.0 281.6,400.4 282.3,409.7 283.0,406.9 283.7,401.5 284.4,419.3 285.1,410.3 285.8,417.6 286.5,415.2 287.2,396.5 287.9,401.1 288.6,415.8 289.3,406.7 290.0,399.9 290.7,415.6 291.4,409.0 292.1,406.5 292.8,403.1 293.5,399.1 294.2,403.5 294.9,402.1 295.6,399.7 296.3,427.3 297.0,409.7 297.7,400.2 298.4,416.6 299.1,389.9 299.8,418.3 300.5,389.9 301.2,382.0 301.9,412.1 302.6,405.9 303.3,398.6 304.0,411.6 304.7,419.9 305.4,411.3 306.1,404.7 306.8,401.1 307.5,425.1 308.2,390.6 308.9,419.6 309.6,413.9 310.3,398.0 311.0,413.9 311.7,405.8 312.4,404.3 313.1,389.5 313.8,418.8 314.5,397.9 315.2,409.0 315.9,396.6 316.6,405.7 317.3,410.9 318.0,394.4 318.7,422.3 319.4,400.1 320.1,383.0 320.8,409.6 321.5,419.9 322.2,408.8 322.9,416.2 323.6,400.2 324.3,405.5 325.0,428.6 325.7,398.2 326.4,405.3 327.1,397.3 327.8,425.1 328.5,398.5 329.2,404.4 329.9,409.8 330.6,399.5 331.3,409.2 332.0,397.4 332.7,398.6 333.4,401.7 334.1,418.6 334.8,406.4 335.5,404.5 336.2,399.0 336.9,415.9 337.6,418.4 338.3,381.2 339.0,407.6 339.7,417.6 340.4,400.9 341.1,411.6 341.8,387.3 342.5,402.7 343.2,408.6 343.9,415.8 344.6,404.1 345.3,415.1 346.0,424.5 346.7,401.0 347.4,402.6 348.1,411.0 348.8,394.0 349.5,402.0 350.2,417.7 350.9,416.8 351.6,398.6 352.3,404.3 353.0,404.9 353.7,372.0 354.4,402.3 355.1,396.9 355.8,409.0 356.5,414.5 357.2,407.9 357.9,404.8 358.6,398.9 359.3,413.8 360.0,395.9 360.7,396.6 361.4,411.3 362.1,409.8 362.8,419.0 363.5,392.3 364.2,392.8 364.9,403.7 365.6,404.3 366.3,405.8 367.0,409.6 367.7,422.8 368.4,405.0 369.1,398.6 369.8,403.4 370.6,409.2 371.3,384.2 372.0,408.2 372.7,409.8 373.4,391.7 374.1,402.0 374.8,404.7 375.5,398.2 376.2,405.2 376.9,404.1 377.6,405.2 378.3,406.6 379.0,408.0 379.7,407.2 380.4,389.5 381.1,404.6 381.8,401.5 382.5,404.1 383.2,391.0 383.9,414.8 384.6,398.0 385.3,401.1 386.0,412.5 386.7,403.7 387.4,412.7 388.1,390.6 388.8,416.9 389.5,400.8 390.2,414.7 390.9,434.5 391.6,411.4 392.3,381.9 393.0,404.7 393.7,406.9 394.4,396.2 395.1,399.3 395.8,401.5 396.5,394.0 397.2,404.1 397.9,409.6 398.6,404.5 399.3,393.3 400.0,399.4 400.7,407.8 401.4,416.6 402.1,406.5 402.8,403.9 403.5,395.9 404.2,404.5 404.9,398.2 405.6,406.7 406.3,413.0 407.0,393.1 407.7,399.3 408.4,391.8 409.1,403.8 409.8,395.8 410.5,410.9 411.2,402.3 411.9,415.2 412.6,418.4 413.3,422.8 414.0,405.6 414.7,407.8 415.4,401.9 416.1,403.5 416.8,397.9 417.5,404.1 418.2,393.4 418.9,401.4 419.6,409.7 420.3,384.9 421.0,400.3 421.7,384.1 422.4,404.1 423.1,410.7 423.8,417.9 424.5,389.9 425.2,427.2 425.9,403.2 426.6,398.5 427.3,403.5 428.0,389.1 428.7,407.1 429.4,408.5 430.1,388.1 430.8,421.6 431.5,398.8 432.2,405.0 432.9,406.2 433.6,386.8 434.3,401.5 435.0,405.0 435.7,400.2 436.4,396.6 437.1,401.9 437.8,409.5 438.5,384.7 439.2,409.2 439.9,394.2 440.6,402.6 441.3,406.3 442.0,406.8 442.7,402.4 443.4,400.7 444.1,411.3 444.8,399.8 445.5,386.9 446.2,423.1 446.9,406.2 447.6,402.0 448.3,405.4 449.0,412.6 449.7,401.3 450.4,396.5 451.1,406.4 451.8,394.7 452.5,402.6 453.2,404.0 453.9,395.0 454.6,390.8 455.3,415.1 456.0,396.9 456.7,410.3 457.4,404.1 458.1,381.4 458.8,411.8 459.5,384.2 460.2,392.5 460.9,396.4 461.6,390.8 462.3,406.0 463.0,422.3 463.7,399.2 464.4,400.9 465.1,401.8 465.8,408.1 466.5,425.8 467.2,413.5 467.9,398.9 468.6,395.4 469.3,384.2 470.0,404.0 470.7,394.3 471.4,403.9 472.1,408.3 472.8,407.4 473.5,393.9 474.2,408.8 474.9,379.2 475.6,408.9 476.3,397.9 477.0,394.2 477.7,382.1 478.4,380.7 479.1,412.8 479.8,408.5 480.5,399.6 481.2,399.6 481.9,397.7 482.6,403.8 483.3,398.9 484.0,394.8 484.7,402.9 485.4,407.8 486.1,402.7 486.8,410.9 487.5,408.1 488.2,417.6 488.9,396.7 489.6,407.4 490.3,403.7 491.0,390.1 491.7,395.3 492.4,402.4 493.1,396.8 493.8,403.0 494.5,399.1 495.2,395.3 495.9,400.8 496.6,403.5 497.3,396.2 498.0,398.8 498.7,415.1 499.4,412.5 500.1,396.3 500.9,394.1 501.6,397.8 502.3,408.8 503.0,399.2 503.7,405.8 504.4,408.1 505.1,420.5 505.8,378.6 506.5,403.8 507.2,390.3 507.9,403.3 508.6,389.3 509.3,389.5 510.0,411.3 510.7,393.4 511.4,381.6 512.1,399.0 512.8,386.4 513.5,408.5 514.2,401.4 514.9,402.4 515.6,401.9 516.3,412.5 517.0,395.5 517.7,404.3 518.4,409.3 519.1,394.3 519.8,411.0 520.5,394.8 521.2,382.6 521.9,402.8 522.6,399.1 523.3,396.9 524.0,413.7 524.7,395.3 525.4,403.6 526.1,400.2 526.8,396.4 527.5,407.6 528.2,403.7 528.9,397.8 529.6,376.3 530.3,389.4 531.0,407.4 531.7,383.7 532.4,397.7 533.1,405.0 533.8,395.9 534.5,408.3 535.2,411.7 535.9,393.9 536.6,416.7 537.3,395.8 538.0,396.3 538.7,399.9 539.4,399.8 540.1,411.5 540.8,404.7 541.5,396.2 542.2,417.5 542.9,408.5 543.6,398.8 544.3,390.1 545.0,395.2 545.7,400.9 546.4,392.8 547.1,413.8 547.8,392.5 548.5,410.2 549.2,388.2 549.9,392.6 550.6,406.5 551.3,397.9 552.0,418.5 552.7,408.4 553.4,401.6 554.1,405.0 554.8,399.7 555.5,408.6 556.2,397.1 556.9,394.1 557.6,422.7 558.3,389.0 559.0,401.0 559.7,389.7 560.4,394.4 561.1,390.5 561.8,404.1 562.5,395.7 563.2,400.3 563.9,398.6 564.6,397.6 565.3,404.4 566.0,392.8 566.7,410.1 567.4,400.2 568.1,403.8 568.8,399.4 569.5,404.7 570.2,375.5 570.9,400.5 571.6,389.4 572.3,401.5 573.0,391.6 573.7,420.3 574.4,404.6 575.1,398.9 575.8,399.3 576.5,384.1 577.2,403.2 577.9,399.3 578.6,396.0 579.3,405.9 580.0,394.2 580.7,383.5 581.4,400.3 582.1,402.6 582.8,389.9 583.5,407.3 584.2,393.6 584.9,391.7 585.6,398.8 586.3,408.5 587.0,398.3 587.7,396.0 588.4,405.6 589.1,402.0 589.8,399.3 590.5,388.5 591.2,412.4 591.9,401.5 592.6,396.6 593.3,389.6 594.0,411.5 594.7,394.4 595.4,408.3 596.1,399.2 596.8,389.4 597.5,410.0 598.2,402.3 598.9,409.9 599.6,391.8 600.3,406.5 601.0,407.1 601.7,401.4 602.4,399.8 603.1,397.2 603.8,391.5 604.5,393.6 605.2,398.9 605.9,395.1 606.6,387.6 607.3,419.1 608.0,387.4 608.7,398.7 609.4,400.6 610.1,393.7 610.8,399.5 611.5,404.6 612.2,385.1 612.9,392.4 613.6,391.4 614.3,401.8 615.0,399.0 615.7,406.2 616.4,413.3 617.1,401.1 617.8,399.8 618.5,396.2 619.2,392.3 619.9,393.4 620.6,370.0 621.3,406.3 622.0,407.3 622.7,401.2 623.4,412.1 624.1,403.4 624.8,411.1 625.5,398.4 626.2,396.2 626.9,399.2 627.6,416.4 628.3,393.9 629.0,383.9 629.7,398.7 630.4,407.1 631.2,397.1 631.9,407.0 632.6,409.5 633.3,409.7 634.0,403.0 634.7,402.0 635.4,385.3 636.1,395.5 636.8,385.3 637.5,400.5 638.2,391.1 638.9,389.1 639.6,392.3 640.3,382.6 641.0,404.1 641.7,411.5 642.4,395.6 643.1,411.2 643.8,394.0 644.5,407.2 645.2,405.2 645.9,397.3 646.6,405.5 647.3,404.9 648.0,405.7 648.7,403.8 649.4,398.9 650.1,383.7 650.8,399.6 651.5,402.0 652.2,377.8 652.9,392.6 653.6,391.4 654.3,406.8 655.0,400.0 655.7,402.4 656.4,396.4 657.1,411.6 657.8,410.4 658.5,410.0 659.2,404.5 659.9,420.6 660.6,398.4 661.3,402.6 662.0,399.8 662.7,413.3 663.4,398.1 664.1,397.9 664.8,407.0 665.5,406.1 666.2,395.0 666.9,398.0 667.6,396.0 668.3,417.8 669.0,412.1 669.7,379.3 670.4,398.8 671.1,397.1 671.8,411.8 672.5,404.9 673.2,397.7 673.9,405.7 674.6,408.4 675.3,398.4 676.0,405.9 676.7,399.0 677.4,423.9 678.1,416.0 678.8,406.7 679.5,408.8 680.2,398.5 680.9,392.8 681.6,400.2 682.3,404.5 683.0,399.7 683.7,404.0 684.4,404.1 685.1,403.9 685.8,408.7 686.5,401.9 687.2,385.5 687.9,418.4 688.6,412.0 689.3,407.9 690.0,392.0 690.7,411.5 691.4,417.0 692.1,403.4 692.8,415.8 693.5,381.4 694.2,404.6 694.9,404.8 695.6,421.2 696.3,405.7 697.0,419.7 697.7,400.6 698.4,388.7 699.1,402.3 699.8,431.6 700.5,400.0 701.2,408.8 701.9,424.5 702.6,406.7 703.3,407.3 704.0,415.3 704.7,398.0 705.4,390.6 706.1,407.9 706.8,401.5 707.5,384.1 708.2,411.8 708.9,388.9 709.6,409.5 710.3,383.4 711.0,398.4 711.7,409.2 712.4,401.1 713.1,415.9 713.8,418.9 714.5,404.0 715.2,428.7 715.9,398.4 716.6,414.6 717.3,416.5 718.0,396.8 718.7,406.8 719.4,407.9 720.1,404.9 720.8,399.5 721.5,396.2 722.2,401.7 722.9,428.1 723.6,423.6 724.3,392.8 725.0,395.7 725.7,392.5 726.4,390.5 727.1,402.4 727.8,411.2 728.5,394.2 729.2,403.5 729.9,405.2 730.6,405.2 731.3,403.5 732.0,420.0 732.7,382.2 733.4,410.3 734.1,407.9 734.8,421.2 735.5,396.6 736.2,398.8 736.9,415.9 737.6,392.8 738.3,405.4 739.0,402.7 739.7,402.5 740.4,395.4 741.1,409.0 741.8,411.4 742.5,390.1 743.2,403.8 743.9,416.8 744.6,363.5 745.3,401.2 746.0,407.5 746.7,424.4 747.4,381.8 748.1,393.9 748.8,404.2 749.5,388.1 750.2,406.8 750.9,404.5 751.6,391.1 752.3,390.4 753.0,393.9 753.7,396.0 754.4,413.4 755.1,419.9 755.8,406.3 756.5,407.2 757.2,402.0 757.9,397.6 758.6,395.9 759.3,401.1 760.0,412.8 760.8,413.3 761.5,398.4 762.2,386.0 762.9,398.5 763.6,394.8 764.3,397.2 765.0,407.0 765.7,401.5 766.4,400.7 767.1,418.7 767.8,396.8 768.5,411.3 769.2,407.8 769.9,423.6 770.6,410.1 771.3,388.1 772.0,383.9 772.7,397.5 773.4,408.9 774.1,404.0 774.8,424.3 775.5,398.6 776.2,404.5 776.9,383.4 777.6,407.5 778.3,401.2 779.0,408.5 779.7,393.8 780.4,382.8 781.1,396.0 781.8,391.9 782.5,391.8 783.2,417.1 783.9,399.3 784.6,400.3 785.3,400.0 786.0,394.8 786.7,416.0 787.4,399.6 788.1,395.1 788.8,402.6 789.5,395.5 790.2,393.5 790.9,401.1 791.6,395.9 792.3,405.0 793.0,399.6 793.7,411.4 794.4,399.3 795.1,398.0 795.8,423.2 796.5,391.2 797.2,404.9 797.9,388.6 798.6,400.6 799.3,403.4 800.0,390.5 800.7,408.8 801.4,415.2 802.1,394.2 802.8,393.0 803.5,412.4 804.2,403.0 804.9,387.4 805.6,401.2 806.3,394.6 807.0,401.8 807.7,396.3 808.4,399.2 809.1,408.5 809.8,401.1 810.5,391.5 811.2,398.9 811.9,402.4 812.6,398.8 813.3,400.2 814.0,392.7 814.7,372.5 815.4,406.4 816.1,391.3 816.8,389.5 817.5,380.1 818.2,408.1 818.9,395.5 819.6,383.7 820.3,412.2 821.0,411.6 821.7,410.3 822.4,411.3 823.1,415.3 823.8,388.1 824.5,402.8 825.2,408.9 825.9,393.2 826.6,378.6 827.3,401.0 828.0,411.5 828.7,385.7 829.4,386.1 830.1,384.0 830.8,400.5 831.5,386.6 832.2,407.5 832.9,397.3 833.6,393.6 834.3,408.6 835.0,402.3 835.7,401.1 836.4,384.3 837.1,406.1 837.8,393.1 838.5,392.3 839.2,407.4 839.9,417.2 840.6,394.8 841.3,386.0 842.0,391.2 842.7,404.7 843.4,405.4 844.1,420.9 844.8,406.1 845.5,394.7 846.2,412.0 846.9,384.2 847.6,398.4 848.3,384.5 849.0,407.7 849.7,390.9 850.4,384.0 851.1,402.2 851.8,399.4 852.5,391.4 853.2,395.4 853.9,397.7 854.6,377.8 855.3,402.7 856.0,405.0 856.7,399.3 857.4,398.8 858.1,403.0 858.8,394.6 859.5,385.5 860.2,419.9 860.9,409.5 861.6,396.5 862.3,401.6 863.0,376.9 863.7,378.2 864.4,398.8 865.1,382.9 865.8,397.6 866.5,401.4 867.2,406.8 867.9,385.6 868.6,396.2 869.3,410.0 870.0,387.2 870.7,420.2 871.4,408.9 872.1,392.8 872.8,405.2 873.5,407.0 874.2,396.7 874.9,404.8 875.6,390.4 876.3,379.3 877.0,391.5 877.7,415.9 878.4,389.6 879.1,403.1 879.8,405.4 880.5,374.0 881.2,398.3 881.9,406.8 882.6,409.7 883.3,387.3 884.0,414.3 884.7,397.8 885.4,389.1 886.1,393.3 886.8,385.6 887.5,399.9 888.2,394.3 888.9,408.9 889.6,397.0 890.3,380.0 891.1,406.0 891.8,397.0 892.5,408.2 893.2,414.6 893.9,390.3 894.6,397.6 895.3,408.1 896.0,377.2 896.7,397.8 897.4,393.6 898.1,403.5 898.8,389.3 899.5,411.3 900.2,396.3 900.9,412.9 901.6,392.9 902.3,401.1 903.0,387.9 903.7,412.4 904.4,392.0 905.1,408.4 905.8,397.0 906.5,399.1 907.2,398.2 907.9,382.3 908.6,382.1 909.3,398.3 910.0,372.8 910.7,393.8 911.4,400.2 912.1,403.5 912.8,389.2 913.5,390.7 914.2,395.6 914.9,417.4 915.6,403.5 916.3,387.8 917.0,401.9 917.7,402.7 918.4,410.1 919.1,369.6 919.8,386.1 920.5,407.1 921.2,403.9 921.9,388.7 922.6,397.0 923.3,386.2 924.0,384.7 924.7,379.4 925.4,409.8 926.1,389.7 926.8,389.7 927.5,387.3 928.2,402.3 928.9,389.7 929.6,410.8 930.3,409.9 931.0,400.9 931.7,395.9 932.4,419.9 933.1,403.9 933.8,399.4 934.5,391.7 935.2,395.8 935.9,402.7 936.6,376.3 937.3,382.2 938.0,401.4 938.7,392.1 939.4,386.8 940.1,406.3 940.8,393.4 941.5,382.0 942.2,398.7 942.9,391.6 943.6,401.5 944.3,393.7 945.0,407.4 945.7,395.6 946.4,411.1 947.1,383.4 947.8,384.0 948.5,412.1 949.2,399.1 949.9,397.7 950.6,388.5 951.3,379.2 952.0,372.5 952.7,398.6 953.4,376.2 954.1,408.4 954.8,371.3 955.5,409.6"/><path fill="none" stroke="#00ff00" stroke-width="5" stroke-linecap="round" shape-rendering="crispEdges" d="M45.5 403.8h0M46.2 405.1h0M46.9 399.6h0M47.6 384.9h0M48.3 402.5h0M49.0 395.9h0M49.7 399.0h0M50.4 413.7h0M51.1 391.3h0M51.8 393.5h0M52.5 382.4h0M53.2 392.3h0M53.9 380.0h0M54.6 387.1h0M55.3 397.4h0M56.0 407.4h0M56.7 392.7h0M57.4 397.7h0M58.1 379.6h0M58.8 396.6h0M59.5 385.8h0M60.2 402.9h0M60.9 407.9h0M61.6 383.6h0M62.3 393.0h0M63.0 398.8h0M63.7 385.1h0M64.4 380.9h0M65.1 395.8h0M65.8 385.3h0M66.5 393.4h0M67.2 403.2h0M67.9 410.0h0M68.6 383.3h0M69.3 414.2h0M70.0 378.3h0M70.7 389.1h0M71.4 393.6h0M72.1 401.2h0M72.8 405.9h0M73.5 398.2h0M74.2 414.3h0M74.9 385.6h0M75.6 381.6h0M76.3 399.0h0M77.0 397.1h0M77.7 392.7h0M78.4 408.9h0M79.1 398.7h0M79.8 391.7h0M80.5 419.0h0M81.2 389.7h0M81.9 388.0h0M82.6 393.5h0M83.3 395.2h0M84.0 418.0h0M84.7 388.4h0M85.4 401.1h0M86.1 403.8h0M86.8 374.6h0M87.5 396.8h0M88.2 393.5h0M88.9 373.9h0M89.6 395.0h0M90.3 406.7h0M91.0 374.5h0M91.7 400.1h0M92.4 385.4h0M93.1 369.0h0M93.8 393.1h0M94.5 401.1h0M95.2 400.3h0M95.9 395.5h0M96.6 386.8h0M97.3 386.7h0M98.0 401.1h0M98.7 394.0h0M99.4 384.1h0M100.1 388.0h0M100.8 395.0h0M101.5 417.2h0M102.2 397.4h0M102.9 394.1h0M103.6 388.5h0M104.3 396.3h0M105.0 402.8h0M105.7 391.3h0M106.4 408.6h0M107.1 422.5h0M107.8 393.1h0M108.5 393.9h0M109.2 394.8h0M109.9 398.1h0M110.7 400.2h0M111.4 375.4h0M112.1 394.1h0M112.8 403.9h0M113.5 394.3h0M114.2 392.7h0M114.9 396.0h0M115.6 395.3h0M116.3 390.5h0M117.0 394.9h0M117.7 405.8h0M118.4 410.8h0M119.1 404.1h0M119.8 388.6h0M120.5 403.4h0M121.2 399.6h0M121.9 400.1h0M122.6 381.5h0M123.3 371.4h0M124.0 381.4h0M124.7 386.4h0M125.4 394.3h0M126.1 392.3h0M126.8 405.7h0M127.5 401.6h0M128.2 373.4h0M128.9 395.5h0M129.6 406.3h0M130.3 386.2h0M131.0 377.0h0M131.7 403.6h0M132.4 400.5h0M133.1 392.4h0M133.8 397.2h0M134.5 408.0h0M135.2 393.3h0M135.9 397.1h0M136.6 410.4h0M137.3 390.9h0M138.0 395.6h0M138.7 396.7h0M139.4 392.1h0M140.1 395.4h0M140.8 416.5h0M141.5 371.7h0M142.2 413.6h0M142.9 412.9h0M143.6 380.2h0M144.3 385.1h0M145.0 386.8h0M145.7 397.7h0M146.4 393.7h0M147.1 386.4h0M147.8 397.0h0M148.5 383.5h0M149.2 400.9h0M149.9 412.1h0M150.6 410.0h0M151.3 386.6h0M152.0 404.5h0M152.7 399.8h0M153.4 397.5h0M154.1 382.9h0M154.8 386.9h0M155.5 406.2h0M156.2 384.3h0M156.9 393.8h0M157.6 396.0h0M158.3 391.4h0M159.0 393.2h0M159.7 395.0h0M160.4 416.5h0M161.1 402.6h0M161.8 394.0h0M162.5 389.4h0M163.2 398.7h0M163.9 420.3h0M164.6 409.3h0M165.3 401.4h0M166.0 384.7h0M166.7 407.2h0M167.4 383.0h0M168.1 392.6h0M168.8 378.3h0M169.5 391.8h0M170.2 391.5h0M170.9 398.1h0M171.6 395.5h0M172.3 413.3h0M173.0 403.8h0M173.7 398.6h0M174.4 390.3h0M175.1 387.2h0M175.8 403.0h0M176.5 397.2h0M177.2 382.6h0M177.9 397.3h0M178.6 397.4h0M179.3 406.4h0M180.0 395.9h0M180.7 421.6h0M181.4 394.6h0M182.1 400.4h0M182.8 402.8h0M183.5 396.0h0M184.2 420.8h0M184.9 387.4h0M185.6 384.6h0M186.3 402.0h0M187.0 408.3h0M187.7 391.7h0M188.4 415.5h0M189.1 392.5h0M189.8 394.9h0M190.5 414.7h0M191.2 382.9h0M191.9 412.8h0M192.6 393.0h0M193.3 412.6h0M194.0 390.8h0M194.7 386.9h0M195.4 387.3h0M196.1 408.1h0M196.8 418.5h0M197.5 402.1h0M198.2 393.5h0M198.9 406.1h0M199.6 399.0h0M200.3 427.6h0M201.0 386.8h0M201.7 399.2h0M202.4 415.7h0M203.1 394.2h0M203.8 393.7h0M204.5 402.3h0M205.2 400.9h0M205.9 391.8h0M206.6 402.3h0M207.3 399.7h0M208.0 412.4h0M208.7 399.9h0M209.4 399.9h0M210.1 384.7h0M210.8 406.8h0M211.5 404.6h0M212.2 392.7h0M212.9 376.3h0M213.6 419.7h0M214.3 393.6h0M215.0 393.5h0M215.7 389.7h0M216.4 394.1h0M217.1 408.2h0M217.8 393.8h0M218.5 403.9h0M219.2 400.8h0M219.9 412.9h0M220.6 390.0h0M221.3 425.1h0M222.0 406.4h0M222.7 409.6h0M223.4 411.9h0M224.1 398.9h0M224.8 398.3h0M225.5 388.7h0M226.2 402.8h0M226.9 406.8h0M227.6 403.9h0M228.3 388.5h0M229.0 400.8h0M229.7 396.7h0M230.4 403.3h0M231.1 404.7h0M231.8 407.1h0M232.5 390.9h0M233.2 391.8h0M233.9 383.4h0M234.6 403.7h0M235.3 411.2h0M236.0 394.1h0M236.7 403.4h0M237.4 416.1h0M238.1 411.7h0M238.8 389.6h0M239.5 403.3h0M240.2 422.6h0M241.0 402.7h0M241.7 385.3h0M242.4 404.6h0M243.1 394.7h0M243.8 400.7h0M244.5 391.9h0M245.2 410.6h0M245.9 390.7h0M246.6 414.4h0M247.3 409.9h0M248.0 402.6h0M248.7 406.9h0M249.4 417.2h0M250.1 401.3h0M250.8 414.3h0M251.5 394.6h0M252.2 398.3h0M252.9 402.6h0M253.6 393.4h0M254.3 410.8h0M255.0 404.1h0M255.7 428.3h0M256.4 399.2h0M257.1 406.3h0M257.8 413.5h0M258.5 424.3h0M259.2 398.9h0M259.9 412.4h0M260.6 408.8h0M261.3 415.1h0M262.0 433.0h0M262.7 410.7h0M263.4 393.7h0M264.1 397.0h0M264.8 398.5h0M265.5 392.1h0M266.2 414.1h0M266.9 430.3h0M267.6 406.3h0M268.3 406.3h0M269.0 417.6h0M269.7 401.8h0M270.4 409.0h0M271.1 408.5h0M271.8 396.6h0M272.5 393.1h0M273.2 399.9h0M273.9 416.3h0M274.6 389.1h0M275.3 430.6h0M276.0 404.9h0M276.7 418.2h0M277.4 400.1h0M278.1 418.1h0M278.8 406.6h0M279.5 404.9h0M280.2 386.2h0M280.9 415.0h0M281.6 400.4h0M282.3 409.7h0M283.0 406.9h0M283.7 401.5h0M284.4 419.3h0M285.1 410.3h0M285.8 417.6h0M286.5 415.2h0M287.2 396.5h0M287.9 401.1h0M288.6 415.8h0M289.3 406.7h0M290.0 399.9h0M290.7 415.6h0M291.4 409.0h0M292.1 406.5h0M292.8 403.1h0M293.5 399.1h0M294.2 403.5h0M294.9 402.1h0M295.6 399.7h0M296.3 427.3h0M297.0 409.7h0M297.7 400.2h0M298.4 416.6h0M299.1 389.9h0M299.8 418.3h0M300.5 389.9h0M301.2 382.0h0M301.9 412.1h0M302.6 405.9h0M303.3 398.6h0M304.0 411.6h0M304.7 419.9h0M305.4 411.3h0M306.1 404.7h0M306.8 401.1h0M307.5 425.1h0M308.2 390.6h0M308.9 419.6h0M309.6 413.9h0M310.3 398.0h0M311.0 413.9h0M311.7 405.8h0M312.4 404.3h0M313.1 389.5h0M313.8 418.8h0M314.5 397.9h0M315.2 409.0h0M315.9 396.6h0M316.6 405.7h0M317.3 410.9h0M318.0 394.4h0M318.7 422.3h0M319.4 400.1h0M320.1 383.0h0M320.8 409.6h0M321.5 419.9h0M322.2 408.8h0M322.9 416.2h0M323.6 400.2h0M324.3 405.5h0M325.0 428.6h0M325.7 398.2h0M326.4 405.3h0M327.1 397.3h0M327.8 425.1h0M328.5 398.5h0M329.2 404.4h0M329.9 409.8h0M330.6 399.5h0M331.3 409.2h0M332.0 397.4h0M332.7 398.6h0M333.4 401.7h0M334.1 418.6h0M334.8 406.4h0M335.5 404.5h0M336.2 399.0h0M336.9 415.9h0M337.6 418.4h0M338.3 381.2h0M339.0 407.6h0M339.7 417.6h0M340.4 400.9h0M341.1 411.6h0M341.8 387.3h0M342.5 402.7h0M343.2 408.6h0M343.9 415.8h0M344.6 404.1h0M345.3 415.1h0M346.0 424.5h0M346.7 401.0h0M347.4 402.6h0M348.1 411.0h0M348.8 394.0h0M349.5 402.0h0M350.2 417.7h0M350.9 416.8h0M351.6 398.6h0M352.3 404.3h0M353.0 404.9h0M353.7 372.0h0M354.4 402.3h0M355.1 396.9h0M355.8 409.0h0M356.5 414.5h0M357.2 407.9h0M357.9 404.8h0M358.6 398.9h0M359.3 413.8h0M360.0 395.9h0M360.7 396.6h0M361.4 411.3h0M362.1 409.8h0M362.8 419.0h0M363.5 392.3h0M364.2 392.8h0M364.9 403.7h0M365.6 404.3h0M366.3 405.8h0M367.0 409.6h0M367.7 422.8h0M368.4 405.0h0M369.1 398.6h0M369.8 403.4h0M370.6 409.2h0M371.3 384.2h0M372.0 408.2h0M372.7 409.8h0M373.4 391.7h0M374.1 402.0h0M374.8 404.7h0M375.5 398.2h0M376.2 405.2h0M376.9 404.1h0M377.6 405.2h0M378.3 406.6h0M379.0 408.0h0M379.7 407.2h0M380.4 389.5h0M381.1 404.6h0M381.8 401.5h0M382.5 404.1h0M383.2 391.0h0M383.9 414.8h0M384.6 398.0h0M385.3 401.1h0M386.0 412.5h0M386.7 403.7h0M387.4 412.7h0M388.1 390.6h0M388.8 416.9h0M389.5 400.8h0M390.2 414.7h0M390.9 434.5h0M391.6 411.4h0M392.3 381.9h0M393.0 404.7h0M393.7 406.9h0M394.4 396.2h0M395.1 399.3h0M395.8 401.5h0M396.5 394.0h0M397.2 404.1h0M397.9 409.6h0M398.6 404.5h0M399.3 393.3h0M400.0 399.4h0M400.7 407.8h0M401.4 416.6h0M402.1 406.5h0M402.8 403.9h0M403.5 395.9h0M404.2 404.5h0M404.9 398.2h0M405.6 406.7h0M406.3 413.0h0M407.0 393.1h0M407.7 399.3h0M408.4 391.8h0M409.1 403.8h0M409.8 395.8h0M410.5 410.9h0M411.2 402.3h0M411.9 415.2h0M412.6 418.4h0M413.3 422.8h0M414.0 405.6h0M414.7 407.8h0M415.4 401.9h0M416.1 403.5h0M416.8 397.9h0M417.5 404.1h0M418.2 393.4h0M418.9 401.4h0M419.6 409.7h0M420.3 384.9h0M421.0 400.3h0M421.7 384.1h0M422.4 404.1h0M423.1 410.7h0M423.8 417.9h0M424.5 389.9h0M425.2 427.2h0M425.9 403.2h0M426.6 398.5h0M427.3 403.5h0M428.0 389.1h0M428.7 407.1h0M429.4 408.5h0M430.1 388.1h0M430.8 421.6h0M431.5 398.8h0M432.2 405.0h0M432.9 406.2h0M433.6 386.8h0M434.3 401.5h0M435.0 405.0h0M435.7 400.2h0M436.4 396.6h0M437.1 401.9h0M437.8 409.5h0M438.5 384.7h0M439.2 409.2h0M439.9 394.2h0M440.6 402.6h0M441.3 406.3h0M442.0 406.8h0M442.7 402.4h0M443.4 400.7h0M444.1 411.3h0M444.8 399.8h0M445.5 386.9h0M446.2 423.1h0M446.9 406.2h0M447.6 402.0h0M448.3 405.4h0M449.0 412.6h0M449.7 401.3h0M450.4 396.5h0M451.1 406.4h0M451.8 394.7h0M452.5 402.6h0M453.2 404.0h0M453.9 395.0h0M454.6 390.8h0M455.3 415.1h0M456.0 396.9h0M456.7 410.3h0M457.4 404.1h0M458.1 381.4h0M458.8 411.8h0M459.5 384.2h0M460.2 392.5h0M460.9 396.4h0M461.6 390.8h0M462.3 406.0h0M463.0 422.3h0M463.7 399.2h0M464.4 400.9h0M465.1 401.8h0M465.8 408.1h0M466.5 425.8h0M467.2 413.5h0M467.9 398.9h0M468.6 395.4h0M469.3 384.2h0M470.0 404.0h0M470.7 394.3h0M471.4 403.9h0M472.1 408.3h0M472.8 407.4h0M473.5 393.9h0M474.2 408.8h0M474.9 379.2h0M475.6 408.9h0M476.3 397.9h0M477.0 394.2h0M477.7 382.1h0M478.4 380.7h0M479.1 412.8h0M479.8 408.5h0M480.5 399.6h0M481.2 399.6h0M481.9 397.7h0M482.6 403.8h0M483.3 398.9h0M484.0 394.8h0M484.7 402.9h0M485.4 407.8h0M486.1 402.7h0M486.8 410.9h0M487.5 408.1h0M488.2 417.6h0M488.9 396.7h0M489.6 407.4h0M490.3 403.7h0M491.0 390.1h0M491.7 395.3h0M492.4 402.4h0M493.1 396.8h0M493.8 403.0h0M494.5 399.1h0M495.2 395.3h0M495.9 400.8h0M496.6 403.5h0M497.3 396.2h0M498.0 398.8h0M498.7 415.1h0M499.4 412.5h0M500.1 396.3h0M500.9 394.1h0M501.6 397.8h0M502.3 408.8h0M503.0 399.2h0M503.7 405.8h0M504.4 408.1h0M505.1 420.5h0M505.8 378.6h0M506.5 403.8h0M507.2 390.3h0M507.9 403.3h0M508.6 389.3h0M509.3 389.5h0M510.0 411.3h0M510.7 393.4h0M511.4 381.6h0M512.1 399.0h0M512.8 386.4h0M513.5 408.5h0M514.2 401.4h0M514.9 402.4h0M515.6 401.9h0M516.3 412.5h0M517.0 395.5h0M517.7 404.3h0M518.4 409.3h0M519.1 394.3h0M519.8 411.0h0M520.5 394.8h0M521.2 382.6h0M521.9 402.8h0M522.6 399.1h0M523.3 396.9h0M524.0 413.7h0M524.7 395.3h0M525.4 403.6h0M526.1 400.2h0M526.8 396.4h0M527.5 407.6h0M528.2 403.7h0M528.9 397.8h0M529.6 376.3h0M530.3 389.4h0M531.0 407.4h0M531.7 383.7h0M532.4 397.7h0M533.1 405.0h0M533.8 395.9h0M534.5 408.3h0M535.2 411.7h0M535.9 393.9h0M536.6 416.7h0M537.3 395.8h0M538.0 396.3h0M538.7 399.9h0M539.4 399.8h0M540.1 411.5h0M540.8 404.7h0M541.5 396.2h0M542.2 417.5h0M542.9 408.5h0M543.6 398.8h0M544.3 390.1h0M545.0 395.2h0M545.7 400.9h0M546.4 392.8h0M547.1 413.8h0M547.8 392.5h0M548.5 410.2h0M549.2 388.2h0M549.9 392.6h0M550.6 406.5h0M551.3 397.9h0M552.0 418.5h0M552.7 408.4h0M553.4 401.6h0M554.1 405.0h0M554.8 399.7h0M555.5 408.6h0M556.2 397.1h0M556.9 394.1h0M557.6 422.7h0M558.3 389.0h0M559.0 401.0h0M559.7 389.7h0M560.4 394.4h0M561.1 390.5h0M561.8 404.1h0M562.5 395.7h0M563.2 400.3h0M563.9 398.6h0M564.6 397.6h0M565.3 404.4h0M566.0 392.8h0M566.7 410.1h0M567.4 400.2h0M568.1 403.8h0M568.8 399.4h0M569.5 404.7h0M570.2 375.5h0M570.9 400.5h0M571.6 389.4h0M572.3 401.5h0M573.0 391.6h0M573.7 420.3h0M574.4 404.6h0M575.1 398.9h0M575.8 399.3h0M576.5 384.1h0M577.2 403.2h0M577.9 399.3h0M578.6 396.0h0M579.3 405.9h0M580.0 394.2h0M580.7 383.5h0M581.4 400.3h0M582.1 402.6h0M582.8 389.9h0M583.5 407.3h0M584.2 393.6h0M584.9 391.7h0M585.6 398.8h0M586.3 408.5h0M587.0 398.3h0M587.7 396.0h0M588.4 405.6h0M589.1 402.0h0M589.8 399.3h0M590.5 388.5h0M591.2 412.4h0M591.9 401.5h0M592.6 396.6h0M593.3 389.6h0M594.0 411.5h0M594.7 394.4h0M595.4 408.3h0M596.1 399.2h0M596.8 389.4h0M597.5 410.0h0M598.2 402.3h0M598.9 409.9h0M599.6 391.8h0M600.3 406.5h0M601.0 407.1h0M601.7 401.4h0M602.4 399.8h0M603.1 397.2h0M603.8 391.5h0M604.5 393.6h0M605.2 398.9h0M605.9 395.1h0M606.6 387.6h0M607.3 419.1h0M608.0 387.4h0M608.7 398.7h0M609.4 400.6h0M610.1 393.7h0M610.8 399.5h0M611.5 404.6h0M612.2 385.1h0M612.9 392.4h0M613.6 391.4h0M614.3 401.8h0M615.0 399.0h0M615.7 406.2h0M616.4 413.3h0M617.1 401.1h0M617.8 399.8h0M618.5 396.2h0M619.2 392.3h0M619.9 393.4h0M620.6 370.0h0M621.3 406.3h0M622.0 407.3h0M622.7 401.2h0M623.4 412.1h0M624.1 403.4h0M624.8 411.1h0M625.5 398.4h0M626.2 396.2h0M626.9 399.2h0M627.6 416.4h0M628.3 393.9h0M629.0 383.9h0M629.7 398.7h0M630.4 407.1h0M631.2 397.1h0M631.9 407.0h0M632.6 409.5h0M633.3 409.7h0M634.0 403.0h0M634.7 402.0h0M635.4 385.3h0M636.1 395.5h0M636.8 385.3h0M637.5 400.5h0M638.2 391.1h0M638.9 389.1h0M639.6 392.3h0M640.3 382.6h0M641.0 404.1h0M641.7 411.5h0M642.4 395.6h0M643.1 411.2h0M643.8 394.0h0M644.5 407.2h0M645.2 405.2h0M645.9 397.3h0M646.6 405.5h0M647.3 404.9h0M648.0 405.7h0M648.7 403.8h0M649.4 398.9h0M650.1 383.7h0M650.8 399.6h0M651.5 402.0h0M652.2 377.8h0M652.9 392.6h0M653.6 391.4h0M654.3 406.8h0M655.0 400.0h0M655.7 402.4h0M656.4 396.4h0M657.1 411.6h0M657.8 410.4h0M658.5 410.0h0M659.2 404.5h0M659.9 420.6h0M660.6 398.4h0M661.3 402.6h0M662.0 399.8h0M662.7 413.3h0M663.4 398.1h0M664.1 397.9h0M664.8 407.0h0M665.5 406.1h0M666.2 395.0h0M666.9 398.0h0M667.6 396.0h0M668.3 417.8h0M669.0 412.1h0M669.7 379.3h0M670.4 398.8h0M671.1 397.1h0M671.8 411.8h0M672.5 404.9h0M673.2 397.7h0M673.9 405.7h0M674.6 408.4h0M675.3 398.4h0M676.0 405.9h0M676.7 399.0h0M677.4 423.9h0M678.1 416.0h0M678.8 406.7h0M679.5 408.8h0M680.2 398.5h0M680.9 392.8h0M681.6 400.2h0M682.3 404.5h0M683.0 399.7h0M683.7 404.0h0M684.4 404.1h0M685.1 403.9h0M685.8 408.7h0M686.5 401.9h0M687.2 385.5h0M687.9 418.4h0M688.6 412.0h0M689.3 407.9h0M690.0 392.0h0M690.7 411.5h0M691.4 417.0h0M692.1 403.4h0M692.8 415.8h0M693.5 381.4h0M694.2 404.6h0M694.9 404.8h0M695.6 421.2h0M696.3 405.7h0M697.0 419.7h0M697.7 400.6h0M698.4 388.7h0M699.1 402.3h0M699.8 431.6h0M700.5 400.0h0M701.2 408.8h0M701.9 424.5h0M702.6 406.7h0M703.3 407.3h0M704.0 415.3h0M704.7 398.0h0M705.4 390.6h0M706.1 407.9h0M706.8 401.5h0M707.5 384.1h0M708.2 411.8h0M708.9 388.9h0M709.6 409.5h0M710.3 383.4h0M711.0 398.4h0M711.7 409.2h0M712.4 401.1h0M713.1 415.9h0M713.8 418.9h0M714.5 404.0h0M715.2 428.7h0M715.9 398.4h0M716.6 414.6h0M717.3 416.5h0M718.0 396.8h0M718.7 406.8h0M719.4 407.9h0M720.1 404.9h0M720.8 399.5h0M721.5 396.2h0M722.2 401.7h0M722.9 428.1h0M723.6 423.6h0M724.3 392.8h0M725.0 395.7h0M725.7 392.5h0M726.4 390.5h0M727.1 402.4h0M727.8 411.2h0M728.5 394.2h0M729.2 403.5h0M729.9 405.2h0M730.6 405.2h0M731.3 403.5h0M732.0 420.0h0M732.7 382.2h0M733.4 410.3h0M734.1 407.9h0M734.8 421.2h0M735.5 396.6h0M736.2 398.8h0M736.9 415.9h0M737.6 392.8h0M738.3 405.4h0M739.0 402.7h0M739.7 402.5h0M740.4 395.4h0M741.1 409.0h0M741.8 411.4h0M742.5 390.1h0M743.2 403.8h0M743.9 416.8h0M744.6 363.5h0M745.3 401.2h0M746.0 407.5h0M746.7 424.4h0M747.4 381.8h0M748.1 393.9h0M748.8 404.2h0M749.5 388.1h0M750.2 406.8h0M750.9 404.5h0M751.6 391.1h0M752.3 390.4h0M753.0 393.9h0M753.7 396.0h0M754.4 413.4h0M755.1 419.9h0M755.8 406.3h0M756.5 407.2h0M757.2 402.0h0M757.9 397.6h0M758.6 395.9h0M759.3 401.1h0M760.0 412.8h0M760.8 413.3h0M761.5 398.4h0M762.2 386.0h0M762.9 398.5h0M763.6 394.8h0M764.3 397.2h0M765.0 407.0h0M765.7 401.5h0M766.4 400.7h0M767.1 418.7h0M767.8 396.8h0M768.5 411.3h0M769.2 407.8h0M769.9 423.6h0M770.6 410.1h0M771.3 388.1h0M772.0 383.9h0M772.7 397.5h0M773.4 408.9h0M774.1 404.0h0M774.8 424.3h0M775.5 398.6h0M776.2 404.5h0M776.9 383.4h0M777.6 407.5h0M778.3 401.2h0M779.0 408.5h0M779.7 393.8h0M780.4 382.8h0M781.1 396.0h0M781.8 391.9h0M782.5 391.8h0M783.2 417.1h0M783.9 399.3h0M784.6 400.3h0M785.3 400.0h0M786.0 394.8h0M786.7 416.0h0M787.4 399.6h0M788.1 395.1h0M788.8 402.6h0M789.5 395.5h0M790.2 393.5h0M790.9 401.1h0M791.6 395.9h0M792.3 405.0h0M793.0 399.6h0M793.7 411.4h0M794.4 399.3h0M795.1 398.0h0M795.8 423.2h0M796.5 391.2h0M797.2 404.9h0M797.9 388.6h0M798.6 400.6h0M799.3 403.4h0M800.0 390.5h0M800.7 408.8h0M801.4 415.2h0M802.1 394.2h0M802.8 393.0h0M803.5 412.4h0M804.2 403.0h0M804.9 387.4h0M805.6 401.2h0M806.3 394.6h0M807.0 401.8h0M807.7 396.3h0M808.4 399.2h0M809.1 408.5h0M809.8 401.1h0M810.5 391.5h0M811.2 398.9h0M811.9 402.4h0M812.6 398.8h0M813.3 400.2h0M814.0 392.7h0M814.7 372.5h0M815.4 406.4h0M816.1 391.3h0M816.8 389.5h0M817.5 380.1h0M818.2 408.1h0M818.9 395.5h0M819.6 383.7h0M820.3 412.2h0M821.0 411.6h0M821.7 410.3h0M822.4 411.3h0M823.1 415.3h0M823.8 388.1h0M824.5 402.8h0M825.2 408.9h0M825.9 393.2h0M826.6 378.6h0M827.3 401.0h0M828.0 411.5h0M828.7 385.7h0M829.4 386.1h0M830.1 384.0h0M830.8 400.5h0M831.5 386.6h0M832.2 407.5h0M832.9 397.3h0M833.6 393.6h0M834.3 408.6h0M835.0 402.3h0M835.7 401.1h0M836.4 384.3h0M837.1 406.1h0M837.8 393.1h0M838.5 392.3h0M839.2 407.4h0M839.9 417.2h0M840.6 394.8h0M841.3 386.0h0M842.0 391.2h0M842.7 404.7h0M843.4 405.4h0M844.1 420.9h0M844.8 406.1h0M845.5 394.7h0M846.2 412.0h0M846.9 384.2h0M847.6 398.4h0M848.3 384.5h0M849.0 407.7h0M849.7 390.9h0M850.4 384.0h0M851.1 402.2h0M851.8 399.4h0M852.5 391.4h0M853.2 395.4h0M853.9 397.7h0M854.6 377.8h0M855.3 402.7h0M856.0 405.0h0M856.7 399.3h0M857.4 398.8h0M858.1 403.0h0M858.8 394.6h0M859.5 385.5h0M860.2 419.9h0M860.9 409.5h0M861.6 396.5h0M862.3 401.6h0M863.0 376.9h0M863.7 378.2h0M864.4 398.8h0M865.1 382.9h0M865.8 397.6h0M866.5 401.4h0M867.2 406.8h0M867.9 385.6h0M868.6 396.2h0M869.3 410.0h0M870.0 387.2h0M870.7 420.2h0M871.4 408.9h0M872.1 392.8h0M872.8 405.2h0M873.5 407.0h0M874.2 396.7h0M874.9 404.8h0M875.6 390.4h0M876.3 379.3h0M877.0 391.5h0M877.7 415.9h0M878.4 389.6h0M879.1 403.1h0M879.8 405.4h0M880.5 374.0h0M881.2 398.3h0M881.9 406.8h0M882.6 409.7h0M883.3 387.3h0M884.0 414.3h0M884.7 397.8h0M885.4 389.1h0M886.1 393.3h0M886.8 385.6h0M887.5 399.9h0M888.2 394.3h0M888.9 408.9h0M889.6 397.0h0M890.3 380.0h0M891.1 406.0h0M891.8 397.0h0M892.5 408.2h0M893.2 414.6h0M893.9 390.3h0M894.6 397.6h0M895.3 408.1h0M896.0 377.2h0M896.7 397.8h0M897.4 393.6h0M898.1 403.5h0M898.8 389.3h0M899.5 411.3h0M900.2 396.3h0M900.9 412.9h0M901.6 392.9h0M902.3 401.1h0M903.0 387.9h0M903.7 412.4h0M904.4 392.0h0M905.1 408.4h0M905.8 397.0h0M906.5 399.1h0M907.2 398.2h0M907.9 382.3h0M908.6 382.1h0M909.3 398.3h0M910.0 372.8h0M910.7 393.8h0M911.4 400.2h0M912.1 403.5h0M912.8 389.2h0M913.5 390.7h0M914.2 395.6h0M914.9 417.4h0M915.6 403.5h0M916.3 387.8h0M917.0 401.9h0M917.7 402.7h0M918.4 410.1h0M919.1 369.6h0M919.8 386.1h0M920.5 407.1h0M921.2 403.9h0M921.9 388.7h0M922.6 397.0h0M923.3 386.2h0M924.0 384.7h0M924.7 379.4h0M925.4 409.8h0M926.1 389.7h0M926.8 389.7h0M927.5 387.3h0M928.2 402.3h0M928.9 389.7h0M929.6 410.8h0M930.3 409.9h0M931.0 400.9h0M931.7 395.9h0M932.4 419.9h0M933.1 403.9h0M933.8 399.4h0M934.5 391.7h0M935.2 395.8h0M935.9 402.7h0M936.6 376.3h0M937.3 382.2h0M938.0 401.4h0M938.7 392.1h0M939.4 386.8h0M940.1 406.3h0M940.8 393.4h0M941.5 382.0h0M942.2 398.7h0M942.9 391.6h0M943.6 401.5h0M944.3 393.7h0M945.0 407.4h0M945.7 395.6h0M946.4 411.1h0M947.1 383.4h0M947.8 384.0h0M948.5 412.1h0M949.2 399.1h0M949.9 397.7h0M950.6 388.5h0M951.3 379.2h0M952.0 372.5h0M952.7 398.6h0M953.4 376.2h0M954.1 408.4h0M954.8 371.3h0M955.5 409.6h0"/><polyline fill="none" stroke="#ffff00" stroke-width="1" shape-rendering="crispEdges" points="45.5,179.6 46.2,182.6 46.9,134.3 47.6,222.0 48.3,158.7 49.0,157.3 49.7,154.8 50.4,153.5 51.1,160.7 51.8,203.3 52.5,158.2 53.2,144.6 53.9,167.9 54.6,174.3 55.3,156.9 56.0,169.1 56.7,153.1 57.4,159.1 58.1,148.5 58.8,146.6 59.5,166.2 60.2,167.7 60.9,174.2 61.6,148.1 62.3,147.4 63.0,179.5 63.7,129.2 64.4,117.0 65.1,190.9 65.8,128.6 66.5,150.7 67.2,209.0 67.9,165.0 68.6,158.6 69.3,187.8 70.0,168.3 70.7,149.9 71.4,165.3 72.1,161.0 72.8,134.4 73.5,111.1 74.2,154.5 74.9,154.7 75.6,190.6 76.3,122.9 77.0,155.2 77.7,123.5 78.4,152.1 79.1,160.7 79.8,164.7 80.5,180.1 81.2,145.2 81.9,176.8 82.6,152.0 83.3,154.9 84.0,121.1 84.7,134.4 85.4,158.6 86.1,139.2 86.8,157.6 87.5,150.9 88.2,133.5 88.9,147.8 89.6,158.3 90.3,158.9 91.0,165.1 91.7,166.8 92.4,136.5 93.1,159.6 93.8,164.2 94.5,132.9 95.2,104.0 95.9,163.7 96.6,169.2 97.3,134.6 98.0,123.1 98.7,151.4 99.4,122.5 100.1,131.1 100.8,168.0 101.5,165.3 102.2,156.0 102.9,137.0 103.6,185.1 104.3,148.2 105.0,134.1 105.7,145.2 106.4,171.4 107.1,141.6 107.8,176.6 108.5,142.5 109.2,139.9 109.9,159.3 110.7,152.5 111.4,158.2 112.1,132.5 112.8,149.3 113.5,162.4 114.2,149.9 114.9,152.0 115.6,132.7 116.3,172.7 117.0,112.0 117.7,139.9 118.4,128.1 119.1,147.0 119.8,141.5 120.5,161.4 121.2,180.6 121.9,142.2 122.6,166.7 123.3,116.4 124.0,126.6 124.7,142.0 125.4,188.4 126.1,171.3 126.8,140.3 127.5,174.7 128.2,142.7 128.9,147.2 129.6,174.3 130.3,140.2 131.0,150.1 131.7,183.9 132.4,148.9 133.1,160.5 133.8,150.9 134.5,148.5 135.2,161.5 135.9,154.8 136.6,148.6 137.3,197.0 138.0,194.0 138.7,148.8 139.4,197.6 140.1,158.5 140.8,138.1 141.5,143.6 142.2,198.5 142.9,129.8 143.6,161.7 144.3,182.1 145.0,146.2 145.7,129.0 146.4,152.6 147.1,192.0 147.8,91.0 148.5,156.8 149.2,177.0 149.9,150.7 150.6,139.3 151.3,192.1 152.0,143.1 152.7,179.9 153.4,159.9 154.1,164.0 154.8,150.0 155.5,155.0 156.2,149.2 156.9,194.5 157.6,175.1 158.3,183.7 159.0,176.8 159.7,162.4 160.4,174.1 161.1,152.9 161.8,182.8 162.5,162.6 163.2,175.4 163.9,169.6 164.6,187.2 165.3,135.4 166.0,128.0 166.7,165.6 167.4,171.8 168.1,152.3 168.8,214.8 169.5,174.8 170.2,195.7 170.9,168.0 171.6,185.2 172.3,191.1 173.0,183.5 173.7,187.8 174.4,200.0 175.1,199.7 175.8,167.8 176.5,176.2 177.2,183.8 177.9,161.5 178.6,198.9 179.3,166.0 180.0,188.1 180.7,148.7 181.4,171.6 182.1,140.0 182.8,180.9 183.5,194.1 184.2,178.0 184.9,173.8 185.6,211.6 186.3,175.0 187.0,154.0 187.7,222.9 188.4,155.8 189.1,185.3 189.8,198.7 190.5,213.0 191.2,191.9 191.9,165.8 192.6,225.8 193.3,179.9 194.0,173.9 194.7,220.7 195.4,185.3 196.1,143.8 196.8,145.6 197.5,195.3 198.2,187.7 198.9,162.4 199.6,211.2 200.3,218.1 201.0,170.1 201.7,177.9 202.4,227.0 203.1,215.7 203.8,169.2 204.5,171.9 205.2,182.4 205.9,207.3 206.6,187.7 207.3,220.0 208.0,211.8 208.7,187.6 209.4,194.6 210.1,167.3 210.8,218.8 211.5,213.8 212.2,147.2 212.9,161.0 213.6,204.2 214.3,206.7 215.0,175.1 215.7,165.2 216.4,201.5 217.1,167.5 217.8,214.1 218.5,183.6 219.2,172.2 219.9,220.3 220.6,209.4 221.3,179.1 222.0,209.6 222.7,190.6 223.4,204.0 224.1,219.5 224.8,205.8 225.5,208.6 226.2,176.7 226.9,229.8 227.6,231.4 228.3,186.1 229.0,189.8 229.7,189.7 230.4,190.0 231.1,192.6 231.8,228.1 232.5,183.6 233.2,202.8 233.9,226.1 234.6,209.0 235.3,215.9 236.0,218.7 236.7,228.0 237.4,213.5 238.1,182.1 238.8,229.1 239.5,209.9 240.2,251.5 241.0,247.6 241.7,277.4 242.4,252.9 243.1,223.8 243.8,242.7 244.5,231.9 245.2,250.1 245.9,230.9 246.6,234.3 247.3,240.6 248.0,239.2 248.7,258.1 249.4,250.4 250.1,246.5 250.8,243.0 251.5,270.4 252.2,262.3 252.9,277.9 253.6,212.3 254.3,266.9 255.0,306.0 255.7,276.8 256.4,250.5 257.1,237.4 257.8,250.9 258.5,227.9 259.2,240.6 259.9,271.0 260.6,283.6 261.3,268.9 262.0,289.8 262.7,266.7 263.4,249.0 264.1,251.4 264.8,260.5 265.5,256.1 266.2,247.6 266.9,264.6 267.6,232.3 268.3,263.1 269.0,245.7 269.7,281.5 270.4,299.6 271.1,279.1 271.8,251.4 272.5,287.4 273.2,293.1 273.9,248.4 274.6,274.4 275.3,256.0 276.0,278.5 276.7,249.8 277.4,315.5 278.1,270.6 278.8,259.6 279.5,255.2 280.2,295.1 280.9,256.3 281.6,306.2 282.3,274.5 283.0,300.1 283.7,266.8 284.4,255.6 285.1,268.5 285.8,265.2 286.5,284.6 287.2,261.2 287.9,247.2 288.6,270.9 289.3,255.1 290.0,298.3 290.7,286.2 291.4,282.6 292.1,278.2 292.8,241.4 293.5,256.5 294.2,213.2 294.9,248.8 295.6,254.0 296.3,270.1 297.0,252.3 297.7,267.9 298.4,260.7 299.1,225.9 299.8,247.9 300.5,222.5 301.2,243.4 301.9,216.1 302.6,215.8 303.3,248.4 304.0,215.7 304.7,173.0 305.4,203.3 306.1,227.9 306.8,232.9 307.5,229.8 308.2,228.7 308.9,193.3 309.6,208.2 310.3,232.0 311.0,207.7 311.7,216.3 312.4,219.8 313.1,229.5 313.8,260.2 314.5,171.0 315.2,262.3 315.9,208.1 316.6,204.0 317.3,226.0 318.0,219.9 318.7,198.5 319.4,218.9 320.1,216.8 320.8,221.7 321.5,232.0 322.2,197.2 322.9,220.5 323.6,234.7 324.3,228.2 325.0,232.1 325.7,240.5 326.4,222.7 327.1,279.0 327.8,219.2 328.5,180.9 329.2,247.5 329.9,210.6 330.6,255.9 331.3,230.8 332.0,201.4 332.7,243.9 333.4,199.2 334.1,224.1 334.8,209.2 335.5,211.0 336.2,183.4 336.9,230.7 337.6,198.2 338.3,187.8 339.0,227.4 339.7,215.6 340.4,215.3 341.1,226.4 341.8,199.1 342.5,178.7 343.2,198.7 343.9,182.5 344.6,219.1 345.3,178.8 346.0,202.6 346.7,172.0 347.4,220.7 348.1,182.9 348.8,194.6 349.5,225.4 350.2,186.7 350.9,215.0 351.6,189.9 352.3,183.0 353.0,228.6 353.7,197.8 354.4,208.6 355.1,218.0 355.8,210.9 356.5,200.0 357.2,203.1 357.9,179.2 358.6,208.5 359.3,215.6 360.0,192.9 360.7,242.6 361.4,208.1 362.1,223.8 362.8,214.0 363.5,236.8 364.2,211.8 364.9,183.9 365.6,242.8 366.3,216.7 367.0,262.2 367.7,201.5 368.4,193.9 369.1,233.0 369.8,215.9 370.6,241.7 371.3,227.3 372.0,186.7 372.7,213.1 373.4,206.2 374.1,239.8 374.8,236.1 375.5,220.9 376.2,210.8 376.9,254.9 377.6,170.8 378.3,267.0 379.0,192.8 379.7,218.8 380.4,240.1 381.1,202.9 381.8,201.4 382.5,225.6 383.2,212.5 383.9,201.1 384.6,204.8 385.3,212.7 386.0,175.6 386.7,181.0 387.4,221.4 388.1,226.3 388.8,216.6 389.5,231.9 390.2,203.0 390.9,241.1 391.6,187.8 392.3,212.8 393.0,173.0 393.7,243.7 394.4,223.7 395.1,242.9 395.8,245.5 396.5,211.6 397.2,235.5 397.9,246.6 398.6,260.1 399.3,248.1 400.0,244.7 400.7,281.3 401.4,236.4 402.1,217.5 402.8,261.9 403.5,268.5 404.2,271.8 404.9,319.5 405.6,290.6 406.3,288.5 407.0,288.4 407.7,282.3 408.4,272.1 409.1,271.4 409.8,266.5 410.5,282.5 411.2,294.1 411.9,260.4 412.6,300.3 413.3,311.0 414.0,264.0 414.7,282.4 415.4,306.9 416.1,253.2 416.8,282.0 417.5,259.4 418.2,289.2 418.9,254.7 419.6,269.4 420.3,252.5 421.0,289.9 421.7,285.3 422.4,228.4 423.1,291.8 423.8,272.2 424.5,259.4 425.2,283.1 425.9,231.3 426.6,279.5 427.3,289.0 428.0,275.1 428.7,273.5 429.4,222.2 430.1,297.0 430.8,244.5 431.5,219.9 432.2,242.3 432.9,241.0 433.6,244.9 434.3,251.5 435.0,252.4 435.7,266.0 436.4,264.1 437.1,249.5 437.8,270.8 438.5,239.7 439.2,233.7 439.9,267.1 440.6,248.9 441.3,277.0 442.0,285.4 442.7,269.7 443.4,240.0 444.1,252.4 444.8,245.2 445.5,242.6 446.2,285.7 446.9,215.0 447.6,232.7 448.3,213.2 449.0,231.2 449.7,249.8 450.4,289.0 451.1,254.9 451.8,263.0 452.5,276.0 453.2,276.2 453.9,243.1 454.6,225.8 455.3,252.0 456.0,254.4 456.7,264.9 457.4,278.2 458.1,229.2 458.8,248.0 459.5,246.6 460.2,247.5 460.9,216.4 461.6,272.7 462.3,285.7 463.0,261.8 463.7,244.3 464.4,262.0 465.1,255.3 465.8,197.6 466.5,237.4 467.2,229.5 467.9,285.3 468.6,225.2 469.3,223.5 470.0,241.1 470.7,237.3 471.4,217.1 472.1,232.4 472.8,243.3 473.5,235.1 474.2,232.8 474.9,195.6 475.6,274.7 476.3,243.5 477.0,226.1 477.7,260.5 478.4,233.6 479.1,264.9 479.8,238.0 480.5,249.5 481.2,254.6 481.9,281.9 482.6,211.6 483.3,230.3 484.0,243.3 484.7,228.8 485.4,236.8 486.1,257.7 486.8,255.1 487.5,255.7 488.2,232.8 488.9,241.1 489.6,223.6 490.3,233.6 491.0,239.5 491.7,238.8 492.4,226.1 493.1,236.3 493.8,238.3 494.5,243.2 495.2,262.2 495.9,261.3 496.6,242.9 497.3,239.0 498.0,224.6 498.7,244.9 499.4,225.4 500.1,244.4 500.9,206.5 501.6,227.1 502.3,232.0 503.0,241.5 503.7,176.3 504.4,234.3 505.1,193.1 505.8,204.4 506.5,206.2 507.2,210.9 507.9,182.9 508.6,175.2 509.3,202.3 510.0,198.5 510.7,165.2 511.4,196.6 512.1,173.2 512.8,155.5 513.5,225.3 514.2,186.3 514.9,219.3 515.6,211.8 516.3,186.7 517.0,142.0 517.7,147.2 518.4,179.9 519.1,187.7 519.8,183.5 520.5,213.0 521.2,181.4 521.9,175.0 522.6,186.3 523.3,220.6 524.0,185.4 524.7,155.5 525.4,198.3 526.1,192.2 526.8,140.0 527.5,188.3 528.2,223.7 528.9,187.0 529.6,158.8 530.3,218.1 531.0,153.1 531.7,179.3 532.4,178.8 533.1,184.1 533.8,203.1 534.5,183.0 535.2,199.9 535.9,178.6 536.6,191.1 537.3,214.5 538.0,192.4 538.7,177.7 539.4,148.0 540.1,181.4 540.8,176.1 541.5,202.3 542.2,199.6 542.9,240.5 543.6,240.6 544.3,192.7 545.0,224.0 545.7,192.3 546.4,228.6 547.1,212.3 547.8,225.4 548.5,196.1 549.2,210.1 549.9,205.2 550.6,213.5 551.3,208.1 552.0,204.3 552.7,215.7 553.4,185.8 554.1,234.9 554.8,213.3 555.5,209.3 556.2,212.7 556.9,217.5 557.6,215.7 558.3,201.7 559.0,221.9 559.7,247.0 560.4,163.6 561.1,216.8 561.8,215.8 562.5,215.6 563.2,198.0 563.9,200.6 564.6,224.1 565.3,186.6 566.0,243.2 566.7,223.8 567.4,193.4 568.1,167.2 568.8,187.8 569.5,170.5 570.2,189.4 570.9,192.1 571.6,198.8 572.3,205.5 573.0,189.7 573.7,190.4 574.4,161.7 575.1,147.9 575.8,185.3 576.5,195.1 577.2,203.4 577.9,143.1 578.6,165.4 579.3,179.8 580.0,153.4 580.7,171.3 581.4,203.9 582.1,164.5 582.8,197.6 583.5,161.9 584.2,181.2 584.9,181.6 585.6,186.9 586.3,204.5 587.0,174.2 587.7,132.0 588.4,168.7 589.1,165.7 589.8,147.4 590.5,197.2 591.2,179.1 591.9,185.8 592.6,165.9 593.3,202.1 594.0,175.2 594.7,201.6 595.4,169.3 596.1,168.7 596.8,160.1 597.5,154.0 598.2,162.2 598.9,149.3 599.6,167.1 600.3,186.1 601.0,213.6 601.7,136.0 602.4,162.0 603.1,205.8 603.8,214.1 604.5,202.3 605.2,171.7 605.9,168.2 606.6,165.5 607.3,185.4 608.0,152.4 608.7,144.7 609.4,159.7 610.1,185.4 610.8,170.2 611.5,131.7 612.2,172.1 612.9,188.4 613.6,173.6 614.3,192.8 615.0,189.4 615.7,223.1 616.4,189.1 617.1,190.5 617.8,175.1 618.5,173.7 619.2,177.5 619.9,176.4 620.6,170.4 621.3,201.3 622.0,194.1 622.7,218.2 623.4,164.2 624.1,199.2 624.8,209.8 625.5,188.6 626.2,197.9 626.9,196.0 627.6,147.9 628.3,184.6 629.0,185.3 629.7,163.5 630.4,170.0 631.2,191.1 631.9,193.7 632.6,218.3 633.3,175.7 634.0,186.0 634.7,206.1 635.4,198.9 636.1,150.5 636.8,198.5 637.5,202.6 638.2,176.9 638.9,209.8 639.6,155.9 640.3,196.4 641.0,198.8 641.7,152.1 642.4,185.3 643.1,179.4 643.8,214.2 644.5,195.4 645.2,194.3 645.9,158.5 646.6,183.0 647.3,172.9 648.0,205.6 648.7,189.3 649.4,192.6 650.1,213.1 650.8,191.0 651.5,232.1 652.2,173.1 652.9,156.0 653.6,208.7 654.3,203.0 655.0,193.0 655.7,168.2 656.4,206.0 657.1,189.6 657.8,190.5 658.5,216.6 659.2,212.6 659.9,228.2 660.6,213.2 661.3,206.5 662.0,258.9 662.7,216.2 663.4,223.2 664.1,224.8 664.8,210.1 665.5,176.3 666.2,214.7 666.9,196.6 667.6,211.1 668.3,194.2 669.0,220.6 669.7,266.5 670.4,220.6 671.1,218.1 671.8,205.4 672.5,237.4 673.2,225.2 673.9,215.2 674.6,207.3 675.3,241.6 676.0,225.3 676.7,222.8 677.4,230.7 678.1,226.4 678.8,232.3 679.5,234.4 680.2,189.1 680.9,204.5 681.6,213.9 682.3,227.5 683.0,264.3 683.7,256.3 684.4,254.1 685.1,246.2 685.8,226.5 686.5,254.3 687.2,195.6 687.9,253.5 688.6,218.3 689.3,257.3 690.0,211.6 690.7,215.9 691.4,210.2 692.1,248.0 692.8,219.6 693.5,252.2 694.2,241.7 694.9,271.2 695.6,262.5 696.3,245.3 697.0,269.6 697.7,223.1 698.4,264.9 699.1,241.4 699.8,278.9 700.5,229.5 701.2,203.1 701.9,229.3 702.6,223.7 703.3,230.2 704.0,245.7 704.7,262.1 705.4,231.8 706.1,238.1 706.8,240.5 707.5,265.8 708.2,249.9 708.9,250.5 709.6,239.8 710.3,232.6 711.0,248.3 711.7,228.5 712.4,259.1 713.1,225.0 713.8,231.7 714.5,204.7 715.2,213.9 715.9,273.6 716.6,236.5 717.3,218.3 718.0,209.6 718.7,243.6 719.4,214.1 720.1,226.0 720.8,222.3 721.5,237.2 722.2,244.5 722.9,234.3 723.6,192.2 724.3,250.4 725.0,212.9 725.7,214.9 726.4,220.4 727.1,210.7 727.8,228.5 728.5,198.3 729.2,232.8 729.9,218.0 730.6,198.7 731.3,210.8 732.0,232.1 732.7,185.0 733.4,234.7 734.1,242.4 734.8,205.5 735.5,183.5 736.2,207.9 736.9,206.1 737.6,205.7 738.3,213.9 739.0,189.3 739.7,177.4 740.4,207.1 741.1,191.8 741.8,199.6 742.5,156.0 743.2,171.6 743.9,198.7 744.6,165.9 745.3,161.7 746.0,194.8 746.7,154.1 747.4,186.4 748.1,179.0 748.8,194.7 749.5,196.2 750.2,150.9 750.9,158.7 751.6,182.3 752.3,138.5 753.0,184.6 753.7,168.1 754.4,183.2 755.1,172.7 755.8,180.3 756.5,136.5 757.2,143.7 757.9,187.0 758.6,173.5 759.3,156.5 760.0,181.1 760.8,152.9 761.5,168.0 762.2,194.3 762.9,159.5 763.6,135.9 764.3,155.5 765.0,225.0 765.7,157.4 766.4,188.6 767.1,204.8 767.8,169.6 768.5,170.0 769.2,157.7 769.9,146.8 770.6,169.0 771.3,175.7 772.0,170.6 772.7,159.5 773.4,174.5 774.1,177.8 774.8,159.7 775.5,173.4 776.2,191.9 776.9,149.2 777.6,203.4 778.3,178.1 779.0,161.7 779.7,174.1 780.4,163.8 781.1,234.5 781.8,124.0 782.5,167.8 783.2,165.1 783.9,174.9 784.6,154.8 785.3,176.1 786.0,167.2 786.7,154.4 787.4,166.5 788.1,168.6 788.8,117.0 789.5,171.1 790.2,187.7 790.9,145.9 791.6,141.2 792.3,139.6 793.0,175.9 793.7,145.9 794.4,196.2 795.1,161.5 795.8,176.3 796.5,205.0 797.2,178.6 797.9,145.4 798.6,173.9 799.3,138.1 800.0,158.1 800.7,145.9 801.4,151.5 802.1,134.1 802.8,169.1 803.5,133.3 804.2,97.0 804.9,197.5 805.6,190.5 806.3,185.6 807.0,178.2 807.7,157.1 808.4,190.8 809.1,162.3 809.8,171.0 810.5,152.5 811.2,151.4 811.9,144.4 812.6,211.0 813.3,166.9 814.0,210.0 814.7,162.6 815.4,167.8 816.1,176.7 816.8,147.8 817.5,159.3 818.2,167.5 818.9,190.8 819.6,184.0 820.3,187.6 821.0,168.7 821.7,169.1 822.4,182.4 823.1,223.6 823.8,185.7 824.5,206.9 825.2,173.9 825.9,153.5 826.6,173.7 827.3,178.2 828.0,181.5 828.7,171.7 829.4,157.4 830.1,157.4 830.8,160.0 831.5,151.7 832.2,186.4 832.9,163.2 833.6,186.4 834.3,180.9 835.0,177.5 835.7,161.7 836.4,211.5 837.1,179.3 837.8,168.1 838.5,178.8 839.2,176.0 839.9,139.5 840.6,155.2 841.3,132.7 842.0,175.8 842.7,184.8 843.4,163.5 844.1,167.3 844.8,129.0 845.5,189.5 846.2,156.9 846.9,132.0 847.6,186.8 848.3,156.9 849.0,187.3 849.7,179.9 850.4,173.8 851.1,173.8 851.8,157.5 852.5,197.9 853.2,156.3 853.9,153.6 854.6,164.0 855.3,167.2 856.0,149.7 856.7,182.8 857.4,137.9 858.1,168.9 858.8,208.5 859.5,140.1 860.2,181.7 860.9,138.6 861.6,175.0 862.3,128.5 863.0,128.2 863.7,160.8 864.4,194.7 865.1,165.9 865.8,194.8 866.5,195.5 867.2,191.8 867.9,180.7 868.6,119.7 869.3,135.9 870.0,139.4 870.7,180.4 871.4,164.9 872.1,162.8 872.8,166.6 873.5,135.1 874.2,181.4 874.9,153.0 875.6,152.3 876.3,114.0 877.0,168.1 877.7,167.0 878.4,183.1 879.1,140.3 879.8,141.6 880.5,139.4 881.2,138.4 881.9,192.9 882.6,161.6 883.3,201.7 884.0,164.2 884.7,187.5 885.4,166.4 886.1,171.9 886.8,174.4 887.5,167.3 888.2,175.2 888.9,208.5 889.6,143.9 890.3,166.5 891.1,172.2 891.8,126.0 892.5,152.0 893.2,132.6 893.9,164.2 894.6,178.7 895.3,174.7 896.0,168.1 896.7,170.0 897.4,159.2 898.1,169.0 898.8,139.2 899.5,146.3 900.2,176.9 900.9,125.1 901.6,191.3 902.3,181.2 903.0,180.0 903.7,163.0 904.4,151.7 905.1,157.9 905.8,170.6 906.5,135.7 907.2,178.3 907.9,172.8 908.6,177.3 909.3,166.6 910.0,182.6 910.7,172.0 911.4,187.6 912.1,154.1 912.8,175.8 913.5,185.7 914.2,124.0 914.9,159.7 915.6,176.5 916.3,160.4 917.0,138.2 917.7,190.2 918.4,171.7 919.1,163.2 919.8,169.6 920.5,189.7 921.2,185.8 921.9,164.4 922.6,149.4 923.3,160.5 924.0,190.3 924.7,188.9 925.4,121.4 926.1,145.2 926.8,173.6 927.5,144.2 928.2,131.0 928.9,165.7 929.6,161.7 930.3,192.1 931.0,184.8 931.7,151.2 932.4,191.6 933.1,173.6 933.8,161.3 934.5,194.0 935.2,148.0 935.9,155.9 936.6,169.9 937.3,171.9 938.0,152.3 938.7,151.2 939.4,134.1 940.1,169.9 940.8,143.9 941.5,153.7 942.2,188.9 942.9,194.2 943.6,149.5 944.3,168.5 945.0,164.1 945.7,169.5 946.4,160.5 947.1,152.1 947.8,201.0 948.5,177.1 949.2,164.5 949.9,136.3 950.6,121.0 951.3,152.7 952.0,155.8 952.7,129.2 953.4,160.6 954.1,148.1 954.8,192.0 955.5,166.5"/><path fill="none" stroke="#ffff00" stroke-width="5" stroke-linecap="round" shape-rendering="crispEdges" d="M45.5 179.6h0M46.2 182.6h0M46.9 134.3h0M47.6 222.0h0M48.3 158.7h0M49.0 157.3h0M49.7 154.8h0M50.4 153.5h0M51.1 160.7h0M51.8 203.3h0M52.5 158.2h0M53.2 144.6h0M53.9 167.9h0M54.6 174.3h0M55.3 156.9h0M56.0 169.1h0M56.7 153.1h0M57.4 159.1h0M58.1 148.5h0M58.8 146.6h0M59.5 166.2h0M60.2 167.7h0M60.9 174.2h0M61.6 148.1h0M62.3 147.4h0M63.0 179.5h0M63.7 129.2h0M64.4 117.0h0M65.1 190.9h0M65.8 128.6h0M66.5 150.7h0M67.2 209.0h0M67.9 165.0h0M68.6 158.6h0M69.3 187.8h0M70.0 168.3h0M70.7 149.9h0M71.4 165.3h0M72.1 161.0h0M72.8 134.4h0M73.5 111.1h0M74.2 154.5h0M74.9 154.7h0M75.6 190.6h0M76.3 122.9h0M77.0 155.2h0M77.7 123.5h0M78.4 152.1h0M79.1 160.7h0M79.8 164.7h0M80.5 180.1h0M81.2 145.2h0M81.9 176.8h0M82.6 152.0h0M83.3 154.9h0M84.0 121.1h0M84.7 134.4h0M85.4 158.6h0M86.1 139.2h0M86.8 157.6h0M87.5 150.9h0M88.2 133.5h0M88.9 147.8h0M89.6 158.3h0M90.3 158.9h0M91.0 165.1h0M91.7 166.8h0M92.4 136.5h0M93.1 159.6h0M93.8 164.2h0M94.5 132.9h0M95.2 104.0h0M95.9 163.7h0M96.6 169.2h0M97.3 134.6h0M98.0 123.1h0M98.7 151.4h0M99.4 122.5h0M100.1 131.1h0M100.8 168.0h0M101.5 165.3h0M102.2 156.0h0M102.9 137.0h0M103.6 185.1h0M104.3 148.2h0M105.0 134.1h0M105.7 145.2h0M106.4 171.4h0M107.1 141.6h0M107.8 176.6h0M108.5 142.5h0M109.2 139.9h0M109.9 159.3h0M110.7 152.5h0M111.4 158.2h0M112.1 132.5h0M112.8 149.3h0M113.5 162.4h0M114.2 149.9h0M114.9 152.0h0M115.6 132.7h0M116.3 172.7h0M117.0 112.0h0M117.7 139.9h0M118.4 128.1h0M119.1 147.0h0M119.8 141.5h0M120.5 161.4h0M121.2 180.6h0M121.9 142.2h0M122.6 166.7h0M123.3 116.4h0M124.0 126.6h0M124.7 142.0h0M125.4 188.4h0M126.1 171.3h0M126.8 140.3h0M127.5 174.7h0M128.2 142.7h0M128.9 147.2h0M129.6 174.3h0M130.3 140.2h0M131.0 150.1h0M131.7 183.9h0M132.4 148.9h0M133.1 160.5h0M133.8 150.9h0M134.5 148.5h0M135.2 161.5h0M135.9 154.8h0M136.6 148.6h0M137.3 197.0h0M138.0 194.0h0M138.7 148.8h0M139.4 197.6h0M140.1 158.5h0M140.8 138.1h0M141.5 143.6h0M142.2 198.5h0M142.9 129.8h0M143.6 161.7h0M144.3 182.1h0M145.0 146.2h0M145.7 129.0h0M146.4 152.6h0M147.1 192.0h0M147.8 91.0h0M148.5 156.8h0M149.2 177.0h0M149.9 150.7h0M150.6 139.3h0M151.3 192.1h0M152.0 143.1h0M152.7 179.9h0M153.4 159.9h0M154.1 164.0h0M154.8 150.0h0M155.5 155.0h0M156.2 149.2h0M156.9 194.5h0M157.6 175.1h0M158.3 183.7h0M159.0 176.8h0M159.7 162.4h0M160.4 174.1h0M161.1 152.9h0M161.8 182.8h0M162.5 162.6h0M163.2 175.4h0M163.9 169.6h0M164.6 187.2h0M165.3 135.4h0M166.0 128.0h0M166.7 165.6h0M167.4 171.8h0M168.1 152.3h0M168.8 214.8h0M169.5 174.8h0M170.2 195.7h0M170.9 168.0h0M171.6 185.2h0M172.3 191.1h0M173.0 183.5h0M173.7 187.8h0M174.4 200.0h0M175.1 199.7h0M175.8 167.8h0M176.5 176.2h0M177.2 183.8h0M177.9 161.5h0M178.6 198.9h0M179.3 166.0h0M180.0 188.1h0M180.7 148.7h0M181.4 171.6h0M182.1 140.0h0M182.8 180.9h0M183.5 194.1h0M184.2 178.0h0M184.9 173.8h0M185.6 211.6h0M186.3 175.0h0M187.0 154.0h0M187.7 222.9h0M188.4 155.8h0M189.1 185.3h0M189.8 198.7h0M190.5 213.0h0M191.2 191.9h0M191.9 165.8h0M192.6 225.8h0M193.3 179.9h0M194.0 173.9h0M194.7 220.7h0M195.4 185.3h0M196.1 143.8h0M196.8 145.6h0M197.5 195.3h0M198.2 187.7h0M198.9 162.4h0M199.6 211.2h0M200.3 218.1h0M201.0 170.1h0M201.7 177.9h0M202.4 227.0h0M203.1 215.7h0M203.8 169.2h0M204.5 171.9h0M205.2 182.4h0M205.9 207.3h0M206.6 187.7h0M207.3 220.0h0M208.0 211.8h0M208.7 187.6h0M209.4 194.6h0M210.1 167.3h0M210.8 218.8h0M211.5 213.8h0M212.2 147.2h0M212.9 161.0h0M213.6 204.2h0M214.3 206.7h0M215.0 175.1h0M215.7 165.2h0M216.4 201.5h0M217.1 167.5h0M217.8 214.1h0M218.5 183.6h0M219.2 172.2h0M219.9 220.3h0M220.6 209.4h0M221.3 179.1h0M222.0 209.6h0M222.7 190.6h0M223.4 204.0h0M224.1 219.5h0M224.8 205.8h0M225.5 208.6h0M226.2 176.7h0M226.9 229.8h0M227.6 231.4h0M228.3 186.1h0M229.0 189.8h0M229.7 189.7h0M230.4 190.0h0M231.1 192.6h0M231.8 228.1h0M232.5 183.6h0M233.2 202.8h0M233.9 226.1h0M234.6 209.0h0M235.3 215.9h0M236.0 218.7h0M236.7 228.0h0M237.4 213.5h0M238.1 182.1h0M238.8 229.1h0M239.5 209.9h0M240.2 251.5h0M241.0 247.6h0M241.7 277.4h0M242.4 252.9h0M243.1 223.8h0M243.8 242.7h0M244.5 231.9h0M245.2 250.1h0M245.9 230.9h0M246.6 234.3h0M247.3 240.6h0M248.0 239.2h0M248.7 258.1h0M249.4 250.4h0M250.1 246.5h0M250.8 243.0h0M251.5 270.4h0M252.2 262.3h0M252.9 277.9h0M253.6 212.3h0M254.3 266.9h0M255.0 306.0h0M255.7 276.8h0M256.4 250.5h0M257.1 237.4h0M257.8 250.9h0M258.5 227.9h0M259.2 240.6h0M259.9 271.0h0M260.6 283.6h0M261.3 268.9h0M262.0 289.8h0M262.7 266.7h0M263.4 249.0h0M264.1 251.4h0M264.8 260.5h0M265.5 256.1h0M266.2 247.6h0M266.9 264.6h0M267.6 232.3h0M268.3 263.1h0M269.0 245.7h0M269.7 281.5h0M270.4 299.6h0M271.1 279.1h0M271.8 251.4h0M272.5 287.4h0M273.2 293.1h0M273.9 248.4h0M274.6 274.4h0M275.3 256.0h0M276.0 278.5h0M276.7 249.8h0M277.4 315.5h0M278.1 270.6h0M278.8 259.6h0M279.5 255.2h0M280.2 295.1h0M280.9 256.3h0M281.6 306.2h0M282.3 274.5h0M283.0 300.1h0M283.7 266.8h0M284.4 255.6h0M285.1 268.5h0M285.8 265.2h0M286.5 284.6h0M287.2 261.2h0M287.9 247.2h0M288.6 270.9h0M289.3 255.1h0M290.0 298.3h0M290.7 286.2h0M291.4 282.6h0M292.1 278.2h0M292.8 241.4h0M293.5 256.5h0M294.2 213.2h0M294.9 248.8h0M295.6 254.0h0M296.3 270.1h0M297.0 252.3h0M297.7 267.9h0M298.4 260.7h0M299.1 225.9h0M299.8 247.9h0M300.5 222.5h0M301.2 243.4h0M301.9 216.1h0M302.6 215.8h0M303.3 248.4h0M304.0 215.7h0M304.7 173.0h0M305.4 203.3h0M306.1 227.9h0M306.8 232.9h0M307.5 229.8h0M308.2 228.7h0M308.9 193.3h0M309.6 208.2h0M310.3 232.0h0M311.0 207.7h0M311.7 216.3h0M312.4 219.8h0M313.1 229.5h0M313.8 260.2h0M314.5 171.0h0M315.2 262.3h0M315.9 208.1h0M316.6 204.0h0M317.3 226.0h0M318.0 219.9h0M318.7 198.5h0M319.4 218.9h0M320.1 216.8h0M320.8 221.7h0M321.5 232.0h0M322.2 197.2h0M322.9 220.5h0M323.6 234.7h0M324.3 228.2h0M325.0 232.1h0M325.7 240.5h0M326.4 222.7h0M327.1 279.0h0M327.8 219.2h0M328.5 180.9h0M329.2 247.5h0M329.9 210.6h0M330.6 255.9h0M331.3 230.8h0M332.0 201.4h0M332.7 243.9h0M333.4 199.2h0M334.1 224.1h0M334.8 209.2h0M335.5 211.0h0M336.2 183.4h0M336.9 230.7h0M337.6 198.2h0M338.3 187.8h0M339.0 227.4h0M339.7 215.6h0M340.4 215.3h0M341.1 226.4h0M341.8 199.1h0M342.5 178.7h0M343.2 198.7h0M343.9 182.5h0M344.6 219.1h0M345.3 178.8h0M346.0 202.6h0M346.7 172.0h0M347.4 220.7h0M348.1 182.9h0M348.8 194.6h0M349.5 225.4h0M350.2 186.7h0M350.9 215.0h0M351.6 189.9h0M352.3 183.0h0M353.0 228.6h0M353.7 197.8h0M354.4 208.6h0M355.1 218.0h0M355.8 210.9h0M356.5 200.0h0M357.2 203.1h0M357.9 179.2h0M358.6 208.5h0M359.3 215.6h0M360.0 192.9h0M360.7 242.6h0M361.4 208.1h0M362.1 223.8h0M362.8 214.0h0M363.5 236.8h0M364.2 211.8h0M364.9 183.9h0M365.6 242.8h0M366.3 216.7h0M367.0 262.2h0M367.7 201.5h0M368.4 193.9h0M369.1 233.0h0M369.8 215.9h0M370.6 241.7h0M371.3 227.3h0M372.0 186.7h0M372.7 213.1h0M373.4 206.2h0M374.1 239.8h0M374.8 236.1h0M375.5 220.9h0M376.2 210.8h0M376.9 254.9h0M377.6 170.8h0M378.3 267.0h0M379.0 192.8h0M379.7 218.8h0M380.4 240.1h0M381.1 202.9h0M381.8 201.4h0M382.5 225.6h0M383.2 212.5h0M383.9 201.1h0M384.6 204.8h0M385.3 212.7h0M386.0 175.6h0M386.7 181.0h0M387.4 221.4h0M388.1 226.3h0M388.8 216.6h0M389.5 231.9h0M390.2 203.0h0M390.9 241.1h0M391.6 187.8h0M392.3 212.8h0M393.0 173.0h0M393.7 243.7h0M394.4 223.7h0M395.1 242.9h0M395.8 245.5h0M396.5 211.6h0M397.2 235.5h0M397.9 246.6h0M398.6 260.1h0M399.3 248.1h0M400.0 244.7h0M400.7 281.3h0M401.4 236.4h0M402.1 217.5h0M402.8 261.9h0M403.5 268.5h0M404.2 271.8h0M404.9 319.5h0M405.6 290.6h0M406.3 288.5h0M407.0 288.4h0M407.7 282.3h0M408.4 272.1h0M409.1 271.4h0M409.8 266.5h0M410.5 282.5h0M411.2 294.1h0M411.9 260.4h0M412.6 300.3h0M413.3 311.0h0M414.0 264.0h0M414.7 282.4h0M415.4 306.9h0M416.1 253.2h0M416.8 282.0h0M417.5 259.4h0M418.2 289.2h0M418.9 254.7h0M419.6 269.4h0M420.3 252.5h0M421.0 289.9h0M421.7 285.3h0M422.4 228.4h0M423.1 291.8h0M423.8 272.2h0M424.5 259.4h0M425.2 283.1h0M425.9 231.3h0M426.6 279.5h0M427.3 289.0h0M428.0 275.1h0M428.7 273.5h0M429.4 222.2h0M430.1 297.0h0M430.8 244.5h0M431.5 219.9h0M432.2 242.3h0M432.9 241.0h0M433.6 244.9h0M434.3 251.5h0M435.0 252.4h0M435.7 266.0h0M436.4 264.1h0M437.1 249.5h0M437.8 270.8h0M438.5 239.7h0M439.2 233.7h0M439.9 267.1h0M440.6 248.9h0M441.3 277.0h0M442.0 285.4h0M442.7 269.7h0M443.4 240.0h0M444.1 252.4h0M444.8 245.2h0M445.5 242.6h0M446.2 285.7h0M446.9 215.0h0M447.6 232.7h0M448.3 213.2h0M449.0 231.2h0M449.7 249.8h0M450.4 289.0h0M451.1 254.9h0M451.8 263.0h0M452.5 276.0h0M453.2 276.2h0M453.9 243.1h0M454.6 225.8h0M455.3 252.0h0M456.0 254.4h0M456.7 264.9h0M457.4 278.2h0M458.1 229.2h0M458.8 248.0h0M459.5 246.6h0M460.2 247.5h0M460.9 216.4h0M461.6 272.7h0M462.3 285.7h0M463.0 261.8h0M463.7 244.3h0M464.4 262.0h0M465.1 255.3h0M465.8 197.6h0M466.5 237.4h0M467.2 229.5h0M467.9 285.3h0M468.6 225.2h0M469.3 223.5h0M470.0 241.1h0M470.7 237.3h0M471.4 217.1h0M472.1 232.4h0M472.8 243.3h0M473.5 235.1h0M474.2 232.8h0M474.9 195.6h0M475.6 274.7h0M476.3 243.5h0M477.0 226.1h0M477.7 260.5h0M478.4 233.6h0M479.1 264.9h0M479.8 238.0h0M480.5 249.5h0M481.2 254.6h0M481.9 281.9h0M482.6 211.6h0M483.3 230.3h0M484.0 243.3h0M484.7 228.8h0M485.4 236.8h0M486.1 257.7h0M486.8 255.1h0M487.5 255.7h0M488.2 232.8h0M488.9 241.1h0M489.6 223.6h0M490.3 233.6h0M491.0 239.5h0M491.7 238.8h0M492.4 226.1h0M493.1 236.3h0M493.8 238.3h0M494.5 243.2h0M495.2 262.2h0M495.9 261.3h0M496.6 242.9h0M497.3 239.0h0M498.0 224.6h0M498.7 244.9h0M499.4 225.4h0M500.1 244.4h0M500.9 206.5h0M501.6 227.1h0M502.3 232.0h0M503.0 241.5h0M503.7 176.3h0M504.4 234.3h0M505.1 193.1h0M505.8 204.4h0M506.5 206.2h0M507.2 210.9h0M507.9 182.9h0M508.6 175.2h0M509.3 202.3h0M510.0 198.5h0M510.7 165.2h0M511.4 196.6h0M512.1 173.2h0M512.8 155.5h0M513.5 225.3h0M514.2 186.3h0M514.9 219.3h0M515.6 211.8h0M516.3 186.7h0M517.0 142.0h0M517.7 147.2h0M518.4 179.9h0M519.1 187.7h0M519.8 183.5h0M520.5 213.0h0M521.2 181.4h0M521.9 175.0h0M522.6 186.3h0M523.3 220.6h0M524.0 185.4h0M524.7 155.5h0M525.4 198.3h0M526.1 192.2h0M526.8 140.0h0M527.5 188.3h0M528.2 223.7h0M528.9 187.0h0M529.6 158.8h0M530.3 218.1h0M531.0 153.1h0M531.7 179.3h0M532.4 178.8h0M533.1 184.1h0M533.8 203.1h0M534.5 183.0h0M535.2 199.9h0M535.9 178.6h0M536.6 191.1h0M537.3 214.5h0M538.0 192.4h0M538.7 177.7h0M539.4 148.0h0M540.1 181.4h0M540.8 176.1h0M541.5 202.3h0M542.2 199.6h0M542.9 240.5h0M543.6 240.6h0M544.3 192.7h0M545.0 224.0h0M545.7 192.3h0M546.4 228.6h0M547.1 212.3h0M547.8 225.4h0M548.5 196.1h0M549.2 210.1h0M549.9 205.2h0M550.6 213.5h0M551.3 208.1h0M552.0 204.3h0M552.7 215.7h0M553.4 185.8h0M554.1 234.9h0M554.8 213.3h0M555.5 209.3h0M556.2 212.7h0M556.9 217.5h0M557.6 215.7h0M558.3 201.7h0M559.0 221.9h0M559.7 247.0h0M560.4 163.6h0M561.1 216.8h0M561.8 215.8h0M562.5 215.6h0M563.2 198.0h0M563.9 200.6h0M564.6 224.1h0M565.3 186.6h0M566.0 243.2h0M566.7 223.8h0M567.4 193.4h0M568.1 167.2h0M568.8 187.8h0M569.5 170.5h0M570.2 189.4h0M570.9 192.1h0M571.6 198.8h0M572.3 205.5h0M573.0 189.7h0M573.7 190.4h0M574.4 161.7h0M575.1 147.9h0M575.8 185.3h0M576.5 195.1h0M577.2 203.4h0M577.9 143.1h0M578.6 165.4h0M579.3 179.8h0M580.0 153.4h0M580.7 171.3h0M581.4 203.9h0M582.1 164.5h0M582.8 197.6h0M583.5 161.9h0M584.2 181.2h0M584.9 181.6h0M585.6 186.9h0M586.3 204.5h0M587.0 174.2h0M587.7 132.0h0M588.4 168.7h0M589.1 165.7h0M589.8 147.4h0M590.5 197.2h0M591.2 179.1h0M591.9 185.8h0M592.6 165.9h0M593.3 202.1h0M594.0 175.2h0M594.7 201.6h0M595.4 169.3h0M596.1 168.7h0M596.8 160.1h0M597.5 154.0h0M598.2 162.2h0M598.9 149.3h0M599.6 167.1h0M600.3 186.1h0M601.0 213.6h0M601.7 136.0h0M602.4 162.0h0M603.1 205.8h0M603.8 214.1h0M604.5 202.3h0M605.2 171.7h0M605.9 168.2h0M606.6 165.5h0M607.3 185.4h0M608.0 152.4h0M608.7 144.7h0M609.4 159.7h0M610.1 185.4h0M610.8 170.2h0M611.5 131.7h0M612.2 172.1h0M612.9 188.4h0M613.6 173.6h0M614.3 192.8h0M615.0 189.4h0M615.7 223.1h0M616.4 189.1h0M617.1 190.5h0M617.8 175.1h0M618.5 173.7h0M619.2 177.5h0M619.9 176.4h0M620.6 170.4h0M621.3 201.3h0M622.0 194.1h0M622.7 218.2h0M623.4 164.2h0M624.1 199.2h0M624.8 209.8h0M625.5 188.6h0M626.2 197.9h0M626.9 196.0h0M627.6 147.9h0M628.3 184.6h0M629.0 185.3h0M629.7 163.5h0M630.4 170.0h0M631.2 191.1h0M631.9 193.7h0M632.6 218.3h0M633.3 175.7h0M634.0 186.0h0M634.7 206.1h0M635.4 198.9h0M636.1 150.5h0M636.8 198.5h0M637.5 202.6h0M638.2 176.9h0M638.9 209.8h0M639.6 155.9h0M640.3 196.4h0M641.0 198.8h0M641.7 152.1h0M642.4 185.3h0M643.1 179.4h0M643.8 214.2h0M644.5 195.4h0M645.2 194.3h0M645.9 158.5h0M646.6 183.0h0M647.3 172.9h0M648.0 205.6h0M648.7 189.3h0M649.4 192.6h0M650.1 213.1h0M650.8 191.0h0M651.5 232.1h0M652.2 173.1h0M652.9 156.0h0M653.6 208.7h0M654.3 203.0h0M655.0 193.0h0M655.7 168.2h0M656.4 206.0h0M657.1 189.6h0M657.8 190.5h0M658.5 216.6h0M659.2 212.6h0M659.9 228.2h0M660.6 213.2h0M661.3 206.5h0M662.0 258.9h0M662.7 216.2h0M663.4 223.2h0M664.1 224.8h0M664.8 210.1h0M665.5 176.3h0M666.2 214.7h0M666.9 196.6h0M667.6 211.1h0M668.3 194.2h0M669.0 220.6h0M669.7 266.5h0M670.4 220.6h0M671.1 218.1h0M671.8 205.4h0M672.5 237.4h0M673.2 225.2h0M673.9 215.2h0M674.6 207.3h0M675.3 241.6h0M676.0 225.3h0M676.7 222.8h0M677.4 230.7h0M678.1 226.4h0M678.8 232.3h0M679.5 234.4h0M680.2 189.1h0M680.9 204.5h0M681.6 213.9h0M682.3 227.5h0M683.0 264.3h0M683.7 256.3h0M684.4 254.1h0M685.1 246.2h0M685.8 226.5h0M686.5 254.3h0M687.2 195.6h0M687.9 253.5h0M688.6 218.3h0M689.3 257.3h0M690.0 211.6h0M690.7 215.9h0M691.4 210.2h0M692.1 248.0h0M692.8 219.6h0M693.5 252.2h0M694.2 241.7h0M694.9 271.2h0M695.6 262.5h0M696.3 245.3h0M697.0 269.6h0M697.7 223.1h0M698.4 264.9h0M699.1 241.4h0M699.8 278.9h0M700.5 229.5h0M701.2 203.1h0M701.9 229.3h0M702.6 223.7h0M703.3 230.2h0M704.0 245.7h0M704.7 262.1h0M705.4 231.8h0M706.1 238.1h0M706.8 240.5h0M707.5 265.8h0M708.2 249.9h0M708.9 250.5h0M709.6 239.8h0M710.3 232.6h0M711.0 248.3h0M711.7 228.5h0M712.4 259.1h0M713.1 225.0h0M713.8 231.7h0M714.5 204.7h0M715.2 213.9h0M715.9 273.6h0M716.6 236.5h0M717.3 218.3h0M718.0 209.6h0M718.7 243.6h0M719.4 214.1h0M720.1 226.0h0M720.8 222.3h0M721.5 237.2h0M722.2 244.5h0M722.9 234.3h0M723.6 192.2h0M724.3 250.4h0M725.0 212.9h0M725.7 214.9h0M726.4 220.4h0M727.1 210.7h0M727.8 228.5h0M728.5 198.3h0M729.2 232.8h0M729.9 218.0h0M730.6 198.7h0M731.3 210.8h0M732.0 232.1h0M732.7 185.0h0M733.4 234.7h0M734.1 242.4h0M734.8 205.5h0M735.5 183.5h0M736.2 207.9h0M736.9 206.1h0M737.6 205.7h0M738.3 213.9h0M739.0 189.3h0M739.7 177.4h0M740.4 207.1h0M741.1 191.8h0M741.8 199.6h0M742.5 156.0h0M743.2 171.6h0M743.9 198.7h0M744.6 165.9h0M745.3 161.7h0M746.0 194.8h0M746.7 154.1h0M747.4 186.4h0M748.1 179.0h0M748.8 194.7h0M749.5 196.2h0M750.2 150.9h0M750.9 158.7h0M751.6 182.3h0M752.3 138.5h0M753.0 184.6h0M753.7 168.1h0M754.4 183.2h0M755.1 172.7h0M755.8 180.3h0M756.5 136.5h0M757.2 143.7h0M757.9 187.0h0M758.6 173.5h0M759.3 156.5h0M760.0 181.1h0M760.8 152.9h0M761.5 168.0h0M762.2 194.3h0M762.9 159.5h0M763.6 135.9h0M764.3 155.5h0M765.0 225.0h0M765.7 157.4h0M766.4 188.6h0M767.1 204.8h0M767.8 169.6h0M768.5 170.0h0M769.2 157.7h0M769.9 146.8h0M770.6 169.0h0M771.3 175.7h0M772.0 170.6h0M772.7 159.5h0M773.4 174.5h0M774.1 177.8h0M774.8 159.7h0M775.5 173.4h0M776.2 191.9h0M776.9 149.2h0M777.6 203.4h0M778.3 178.1h0M779.0 161.7h0M779.7 174.1h0M780.4 163.8h0M781.1 234.5h0M781.8 124.0h0M782.5 167.8h0M783.2 165.1h0M783.9 174.9h0M784.6 154.8h0M785.3 176.1h0M786.0 167.2h0M786.7 154.4h0M787.4 166.5h0M788.1 168.6h0M788.8 117.0h0M789.5 171.1h0M790.2 187.7h0M790.9 145.9h0M791.6 141.2h0M792.3 139.6h0M793.0 175.9h0M793.7 145.9h0M794.4 196.2h0M795.1 161.5h0M795.8 176.3h0M796.5 205.0h0M797.2 178.6h0M797.9 145.4h0M798.6 173.9h0M799.3 138.1h0M800.0 158.1h0M800.7 145.9h0M801.4 151.5h0M802.1 134.1h0M802.8 169.1h0M803.5 133.3h0M804.2 97.0h0M804.9 197.5h0M805.6 190.5h0M806.3 185.6h0M807.0 178.2h0M807.7 157.1h0M808.4 190.8h0M809.1 162.3h0M809.8 171.0h0M810.5 152.5h0M811.2 151.4h0M811.9 144.4h0M812.6 211.0h0M813.3 166.9h0M814.0 210.0h0M814.7 162.6h0M815.4 167.8h0M816.1 176.7h0M816.8 147.8h0M817.5 159.3h0M818.2 167.5h0M818.9 190.8h0M819.6 184.0h0M820.3 187.6h0M821.0 168.7h0M821.7 169.1h0M822.4 182.4h0M823.1 223.6h0M823.8 185.7h0M824.5 206.9h0M825.2 173.9h0M825.9 153.5h0M826.6 173.7h0M827.3 178.2h0M828.0 181.5h0M828.7 171.7h0M829.4 157.4h0M830.1 157.4h0M830.8 160.0h0M831.5 151.7h0M832.2 186.4h0M832.9 163.2h0M833.6 186.4h0M834.3 180.9h0M835.0 177.5h0M835.7 161.7h0M836.4 211.5h0M837.1 179.3h0M837.8 168.1h0M838.5 178.8h0M839.2 176.0h0M839.9 139.5h0M840.6 155.2h0M841.3 132.7h0M842.0 175.8h0M842.7 184.8h0M843.4 163.5h0M844.1 167.3h0M844.8 129.0h0M845.5 189.5h0M846.2 156.9h0M846.9 132.0h0M847.6 186.8h0M848.3 156.9h0M849.0 187.3h0M849.7 179.9h0M850.4 173.8h0M851.1 173.8h0M851.8 157.5h0M852.5 197.9h0M853.2 156.3h0M853.9 153.6h0M854.6 164.0h0M855.3 167.2h0M856.0 149.7h0M856.7 182.8h0M857.4 137.9h0M858.1 168.9h0M858.8 208.5h0M859.5 140.1h0M860.2 181.7h0M860.9 138.6h0M861.6 175.0h0M862.3 128.5h0M863.0 128.2h0M863.7 160.8h0M864.4 194.7h0M865.1 165.9h0M865.8 194.8h0M866.5 195.5h0M867.2 191.8h0M867.9 180.7h0M868.6 119.7h0M869.3 135.9h0M870.0 139.4h0M870.7 180.4h0M871.4 164.9h0M872.1 162.8h0M872.8 166.6h0M873.5 135.1h0M874.2 181.4h0M874.9 153.0h0M875.6 152.3h0M876.3 114.0h0M877.0 168.1h0M877.7 167.0h0M878.4 183.1h0M879.1 140.3h0M879.8 141.6h0M880.5 139.4h0M881.2 138.4h0M881.9 192.9h0M882.6 161.6h0M883.3 201.7h0M884.0 164.2h0M884.7 187.5h0M885.4 166.4h0M886.1 171.9h0M886.8 174.4h0M887.5 167.3h0M888.2 175.2h0M888.9 208.5h0M889.6 143.9h0M890.3 166.5h0M891.1 172.2h0M891.8 126.0h0M892.5 152.0h0M893.2 132.6h0M893.9 164.2h0M894.6 178.7h0M895.3 174.7h0M896.0 168.1h0M896.7 170.0h0M897.4 159.2h0M898.1 169.0h0M898.8 139.2h0M899.5 146.3h0M900.2 176.9h0M900.9 125.1h0M901.6 191.3h0M902.3 181.2h0M903.0 180.0h0M903.7 163.0h0M904.4 151.7h0M905.1 157.9h0M905.8 170.6h0M906.5 135.7h0M907.2 178.3h0M907.9 172.8h0M908.6 177.3h0M909.3 166.6h0M910.0 182.6h0M910.7 172.0h0M911.4 187.6h0M912.1 154.1h0M912.8 175.8h0M913.5 185.7h0M914.2 124.0h0M914.9 159.7h0M915.6 176.5h0M916.3 160.4h0M917.0 138.2h0M917.7 190.2h0M918.4 171.7h0M919.1 163.2h0M919.8 169.6h0M920.5 189.7h0M921.2 185.8h0M921.9 164.4h0M922.6 149.4h0M923.3 160.5h0M924.0 190.3h0M924.7 188.9h0M925.4 121.4h0M926.1 145.2h0M926.8 173.6h0M927.5 144.2h0M928.2 131.0h0M928.9 165.7h0M929.6 161.7h0M930.3 192.1h0M931.0 184.8h0M931.7 151.2h0M932.4 191.6h0M933.1 173.6h0M933.8 161.3h0M934.5 194.0h0M935.2 148.0h0M935.9 155.9h0M936.6 169.9h0M937.3 171.9h0M938.0 152.3h0M938.7 151.2h0M939.4 134.1h0M940.1 169.9h0M940.8 143.9h0M941.5 153.7h0M942.2 188.9h0M942.9 194.2h0M943.6 149.5h0M944.3 168.5h0M945.0 164.1h0M945.7 169.5h0M946.4 160.5h0M947.1 152.1h0M947.8 201.0h0M948.5 177.1h0M949.2 164.5h0M949.9 136.3h0M950.6 121.0h0M951.3 152.7h0M952.0 155.8h0M952.7 129.2h0M953.4 160.6h0M954.1 148.1h0M954.8 192.0h0M955.5 166.5h0"/>
</g>
<rect x="168" y="28" width="1" height="503" fill="#ff0000"/>
<g fill="#ff0000" shape-rendering="auto">
<circle cx="167.5" cy="149.5" r="2.6"/>
<circle cx="167.5" cy="388.5" r="2.6"/>
<circle cx="167.5" cy="399.5" r="2.6"/>
</g>
<g class="ax" shape-rendering="auto">
<text x="21" y="25">ADU</text>
<text x="44" y="141.5" text-anchor="end">300K</text>
<text x="44" y="240" text-anchor="end">200K</text>
<text x="44" y="339" text-anchor="end">100K</text>
<text x="44" y="437" text-anchor="end">0</text>
<text x="44" y="536" text-anchor="end">-100000</text>
<text x="159" y="548.5" text-anchor="middle">03:39:45</text>
<text x="273" y="548.5" text-anchor="middle">03:40:00</text>
<text x="387" y="548.5" text-anchor="middle">03:40:15</text>
<text x="501" y="548.5" text-anchor="middle">03:40:30</text>
<text x="615" y="548.5" text-anchor="middle">03:40:45</text>
<text x="729" y="548.5" text-anchor="middle">03:41:00</text>
<text x="843" y="548.5" text-anchor="middle">03:41:15</text>
<text x="957" y="548.5">UT</text>
</g>
</svg>
<div class="btn" style="left:923px"><svg width="14" height="14" style="position:absolute;left:0;top:0"><path d="M3.8 7.6H10.8M7.1 4V11.2" stroke="#000" stroke-width="1.2"/></svg></div>
<div class="btn" style="left:941px"><svg width="14" height="14" style="position:absolute;left:0;top:0"><path d="M4 7.6H10.3" stroke="#555" stroke-width="1"/></svg></div>

<div class="lbl" style="left:9px;top:589px;transform:scaleX(0.88)">Frame No:</div>
<div class="lbl" style="left:71px;top:589px;transform:scaleX(0.98)">207</div>
<div class="lbl" style="left:32.5px;top:605px;transform:scaleX(0.907)">Time:</div>
<div class="lbl" style="left:71px;top:605px;color:#006400;transform:scaleX(0.917)">03:39:46.042</div>
<div class="lbl" style="left:15px;top:621px;transform:scaleX(0.925)">Location:</div>
<div class="lbl" style="left:71px;top:621px;color:#9ab4d0;transform:scaleX(0.917)">-01°18'47.3" 51°55'40.4" 0</div>

<div class="sw" style="left:649px;top:578px;background:#00ffff"></div>
<div class="lbl" style="left:661px;top:577px;transform:scaleX(0.9)">33728</div>
<div class="th" style="left:648px;top:593px"><svg width="34" height="34" shape-rendering="crispEdges"><rect x="0" y="0" width="2" height="2" fill="rgb(60,60,60)"/><rect x="2" y="0" width="2" height="2" fill="rgb(54,54,54)"/><rect x="4" y="0" width="2" height="2" fill="rgb(62,62,62)"/><rect x="6" y="0" width="2" height="2" fill="rgb(51,51,51)"/><rect x="8" y="0" width="2" height="2" fill="rgb(52,52,52)"/><rect x="10" y="0" width="2" height="2" fill="rgb(53,53,53)"/><rect x="12" y="0" width="2" height="2" fill="rgb(61,61,61)"/><rect x="14" y="0" width="2" height="2" fill="rgb(51,51,51)"/><rect x="16" y="0" width="2" height="2" fill="rgb(66,66,66)"/><rect x="18" y="0" width="2" height="2" fill="rgb(56,56,56)"/><rect x="20" y="0" width="2" height="2" fill="rgb(51,51,51)"/><rect x="22" y="0" width="2" height="2" fill="rgb(52,52,52)"/><rect x="24" y="0" width="2" height="2" fill="rgb(63,63,63)"/><rect x="26" y="0" width="2" height="2" fill="rgb(63,63,63)"/><rect x="28" y="0" width="2" height="2" fill="rgb(52,52,52)"/><rect x="30" y="0" width="2" height="2" fill="rgb(57,57,57)"/><rect x="32" y="0" width="2" height="2" fill="rgb(52,52,52)"/><rect x="0" y="2" width="2" height="2" fill="rgb(63,63,63)"/><rect x="2" y="2" width="2" height="2" fill="rgb(51,51,51)"/><rect x="4" y="2" width="2" height="2" fill="rgb(53,53,53)"/><rect x="6" y="2" width="2" height="2" fill="rgb(57,57,57)"/><rect x="8" y="2" width="2" height="2" fill="rgb(51,51,51)"/><rect x="10" y="2" width="2" height="2" fill="rgb(62,62,62)"/><rect x="12" y="2" width="2" height="2" fill="rgb(51,51,51)"/><rect x="14" y="2" width="2" height="2" fill="rgb(57,57,57)"/><rect x="16" y="2" width="2" height="2" fill="rgb(51,51,51)"/><rect x="18" y="2" width="2" height="2" fill="rgb(54,54,54)"/><rect x="20" y="2" width="2" height="2" fill="rgb(59,59,59)"/><rect x="22" y="2" width="2" height="2" fill="rgb(63,63,63)"/><rect x="24" y="2" width="2" height="2" fill="rgb(54,54,54)"/><rect x="26" y="2" width="2" height="2" fill="rgb(53,53,53)"/><rect x="28" y="2" width="2" height="2" fill="rgb(59,59,59)"/><rect x="30" y="2" width="2" height="2" fill="rgb(55,55,55)"/><rect x="32" y="2" width="2" height="2" fill="rgb(53,53,53)"/><rect x="0" y="4" width="2" height="2" fill="rgb(56,56,56)"/><rect x="2" y="4" width="2" height="2" fill="rgb(61,61,61)"/><rect x="4" y="4" width="2" height="2" fill="rgb(53,53,53)"/><rect x="6" y="4" width="2" height="2" fill="rgb(52,52,52)"/><rect x="8" y="4" width="2" height="2" fill="rgb(51,51,51)"/><rect x="10" y="4" width="2" height="2" fill="rgb(56,56,56)"/><rect x="12" y="4" width="2" height="2" fill="rgb(65,65,65)"/><rect x="14" y="4" width="2" height="2" fill="rgb(63,63,63)"/><rect x="16" y="4" width="2" height="2" fill="rgb(60,60,60)"/><rect x="18" y="4" width="2" height="2" fill="rgb(64,64,64)"/><rect x="20" y="4" width="2" height="2" fill="rgb(64,64,64)"/><rect x="22" y="4" width="2" height="2" fill="rgb(61,61,61)"/><rect x="24" y="4" width="2" height="2" fill="rgb(59,59,59)"/><rect x="26" y="4" width="2" height="2" fill="rgb(57,57,57)"/><rect x="28" y="4" width="2" height="2" fill="rgb(55,55,55)"/><rect x="30" y="4" width="2" height="2" fill="rgb(57,57,57)"/><rect x="32" y="4" width="2" height="2" fill="rgb(52,52,52)"/><rect x="0" y="6" width="2" height="2" fill="rgb(59,59,59)"/><rect x="2" y="6" width="2" height="2" fill="rgb(66,66,66)"/><rect x="4" y="6" width="2" height="2" fill="rgb(65,65,65)"/><rect x="6" y="6" width="2" height="2" fill="rgb(60,60,60)"/><rect x="8" y="6" width="2" height="2" fill="rgb(64,64,64)"/><rect x="10" y="6" width="2" height="2" fill="rgb(59,59,59)"/><rect x="12" y="6" width="2" height="2" fill="rgb(52,52,52)"/><rect x="14" y="6" width="2" height="2" fill="rgb(53,53,53)"/><rect x="16" y="6" width="2" height="2" fill="rgb(66,66,66)"/><rect x="18" y="6" width="2" height="2" fill="rgb(63,63,63)"/><rect x="20" y="6" width="2" height="2" fill="rgb(55,55,55)"/><rect x="22" y="6" width="2" height="2" fill="rgb(60,60,60)"/><rect x="24" y="6" width="2" height="2" fill="rgb(54,54,54)"/><rect x="26" y="6" width="2" height="2" fill="rgb(65,65,65)"/><rect x="28" y="6" width="2" height="2" fill="rgb(63,63,63)"/><rect x="30" y="6" width="2" height="2" fill="rgb(51,51,51)"/><rect x="32" y="6" width="2" height="2" fill="rgb(52,52,52)"/><rect x="0" y="8" width="2" height="2" fill="rgb(60,60,60)"/><rect x="2" y="8" width="2" height="2" fill="rgb(60,60,60)"/><rect x="4" y="8" width="2" height="2" fill="rgb(61,61,61)"/><rect x="6" y="8" width="2" height="2" fill="rgb(65,65,65)"/><rect x="8" y="8" width="2" height="2" fill="rgb(64,64,64)"/><rect x="10" y="8" width="2" height="2" fill="rgb(52,52,52)"/><rect x="12" y="8" width="2" height="2" fill="rgb(52,52,52)"/><rect x="14" y="8" width="2" height="2" fill="rgb(58,58,58)"/><rect x="16" y="8" width="2" height="2" fill="rgb(65,65,65)"/><rect x="18" y="8" width="2" height="2" fill="rgb(52,52,52)"/><rect x="20" y="8" width="2" height="2" fill="rgb(51,51,51)"/><rect x="22" y="8" width="2" height="2" fill="rgb(59,59,59)"/><rect x="24" y="8" width="2" height="2" fill="rgb(64,64,64)"/><rect x="26" y="8" width="2" height="2" fill="rgb(59,59,59)"/><rect x="28" y="8" width="2" height="2" fill="rgb(62,62,62)"/><rect x="30" y="8" width="2" height="2" fill="rgb(61,61,61)"/><rect x="32" y="8" width="2" height="2" fill="rgb(50,50,50)"/><rect x="0" y="10" width="2" height="2" fill="rgb(64,64,64)"/><rect x="2" y="10" width="2" height="2" fill="rgb(61,61,61)"/><rect x="4" y="10" width="2" height="2" fill="rgb(55,55,55)"/><rect x="6" y="10" width="2" height="2" fill="rgb(53,53,53)"/><rect x="8" y="10" width="2" height="2" fill="rgb(65,65,65)"/><rect x="10" y="10" width="2" height="2" fill="rgb(51,51,51)"/><rect x="12" y="10" width="2" height="2" fill="rgb(56,56,56)"/><rect x="14" y="10" width="2" height="2" fill="rgb(59,59,59)"/><rect x="16" y="10" width="2" height="2" fill="rgb(54,54,54)"/><rect x="18" y="10" width="2" height="2" fill="rgb(57,57,57)"/><rect x="20" y="10" width="2" height="2" fill="rgb(62,62,62)"/><rect x="22" y="10" width="2" height="2" fill="rgb(62,62,62)"/><rect x="24" y="10" width="2" height="2" fill="rgb(65,65,65)"/><rect x="26" y="10" width="2" height="2" fill="rgb(52,52,52)"/><rect x="28" y="10" width="2" height="2" fill="rgb(55,55,55)"/><rect x="30" y="10" width="2" height="2" fill="rgb(64,64,64)"/><rect x="32" y="10" width="2" height="2" fill="rgb(62,62,62)"/><rect x="0" y="12" width="2" height="2" fill="rgb(58,58,58)"/><rect x="2" y="12" width="2" height="2" fill="rgb(54,54,54)"/><rect x="4" y="12" width="2" height="2" fill="rgb(63,63,63)"/><rect x="6" y="12" width="2" height="2" fill="rgb(58,58,58)"/><rect x="8" y="12" width="2" height="2" fill="rgb(63,63,63)"/><rect x="10" y="12" width="2" height="2" fill="rgb(61,61,61)"/><rect x="12" y="12" width="2" height="2" fill="rgb(62,62,62)"/><rect x="14" y="12" width="2" height="2" fill="rgb(57,57,57)"/><rect x="16" y="12" width="2" height="2" fill="rgb(54,54,54)"/><rect x="18" y="12" width="2" height="2" fill="rgb(52,52,52)"/><rect x="20" y="12" width="2" height="2" fill="rgb(55,55,55)"/><rect x="22" y="12" width="2" height="2" fill="rgb(54,54,54)"/><rect x="24" y="12" width="2" height="2" fill="rgb(57,57,57)"/><rect x="26" y="12" width="2" height="2" fill="rgb(57,57,57)"/><rect x="28" y="12" width="2" height="2" fill="rgb(50,50,50)"/><rect x="30" y="12" width="2" height="2" fill="rgb(65,65,65)"/><rect x="32" y="12" width="2" height="2" fill="rgb(55,55,55)"/><rect x="0" y="14" width="2" height="2" fill="rgb(58,58,58)"/><rect x="2" y="14" width="2" height="2" fill="rgb(59,59,59)"/><rect x="4" y="14" width="2" height="2" fill="rgb(50,50,50)"/><rect x="6" y="14" width="2" height="2" fill="rgb(54,54,54)"/><rect x="8" y="14" width="2" height="2" fill="rgb(63,63,63)"/><rect x="10" y="14" width="2" height="2" fill="rgb(61,61,61)"/><rect x="12" y="14" width="2" height="2" fill="rgb(60,60,60)"/><rect x="14" y="14" width="2" height="2" fill="rgb(54,54,54)"/><rect x="16" y="14" width="2" height="2" fill="rgb(66,66,66)"/><rect x="18" y="14" width="2" height="2" fill="rgb(51,51,51)"/><rect x="20" y="14" width="2" height="2" fill="rgb(64,64,64)"/><rect x="22" y="14" width="2" height="2" fill="rgb(62,62,62)"/><rect x="24" y="14" width="2" height="2" fill="rgb(62,62,62)"/><rect x="26" y="14" width="2" height="2" fill="rgb(62,62,62)"/><rect x="28" y="14" width="2" height="2" fill="rgb(62,62,62)"/><rect x="30" y="14" width="2" height="2" fill="rgb(53,53,53)"/><rect x="32" y="14" width="2" height="2" fill="rgb(65,65,65)"/><rect x="0" y="16" width="2" height="2" fill="rgb(62,62,62)"/><rect x="2" y="16" width="2" height="2" fill="rgb(51,51,51)"/><rect x="4" y="16" width="2" height="2" fill="rgb(56,56,56)"/><rect x="6" y="16" width="2" height="2" fill="rgb(52,52,52)"/><rect x="8" y="16" width="2" height="2" fill="rgb(56,56,56)"/><rect x="10" y="16" width="2" height="2" fill="rgb(64,64,64)"/><rect x="12" y="16" width="2" height="2" fill="rgb(55,55,55)"/><rect x="14" y="16" width="2" height="2" fill="rgb(53,53,53)"/><rect x="16" y="16" width="2" height="2" fill="rgb(60,60,60)"/><rect x="18" y="16" width="2" height="2" fill="rgb(51,51,51)"/><rect x="20" y="16" width="2" height="2" fill="rgb(53,53,53)"/><rect x="22" y="16" width="2" height="2" fill="rgb(50,50,50)"/><rect x="24" y="16" width="2" height="2" fill="rgb(54,54,54)"/><rect x="26" y="16" width="2" height="2" fill="rgb(53,53,53)"/><rect x="28" y="16" width="2" height="2" fill="rgb(61,61,61)"/><rect x="30" y="16" width="2" height="2" fill="rgb(50,50,50)"/><rect x="32" y="16" width="2" height="2" fill="rgb(52,52,52)"/><rect x="0" y="18" width="2" height="2" fill="rgb(56,56,56)"/><rect x="2" y="18" width="2" height="2" fill="rgb(62,62,62)"/><rect x="4" y="18" width="2" height="2" fill="rgb(54,54,54)"/><rect x="6" y="18" width="2" height="2" fill="rgb(58,58,58)"/><rect x="8" y="18" width="2" height="2" fill="rgb(61,61,61)"/><rect x="10" y="18" width="2" height="2" fill="rgb(61,61,61)"/><rect x="12" y="18" width="2" height="2" fill="rgb(65,65,65)"/><rect x="14" y="18" width="2" height="2" fill="rgb(53,53,53)"/><rect x="16" y="18" width="2" height="2" fill="rgb(53,53,53)"/><rect x="18" y="18" width="2" height="2" fill="rgb(65,65,65)"/><rect x="20" y="18" width="2" height="2" fill="rgb(64,64,64)"/><rect x="22" y="18" width="2" height="2" fill="rgb(65,65,65)"/><rect x="24" y="18" width="2" height="2" fill="rgb(65,65,65)"/><rect x="26" y="18" width="2" height="2" fill="rgb(59,59,59)"/><rect x="28" y="18" width="2" height="2" fill="rgb(52,52,52)"/><rect x="30" y="18" width="2" height="2" fill="rgb(54,54,54)"/><rect x="32" y="18" width="2" height="2" fill="rgb(53,53,53)"/><rect x="0" y="20" width="2" height="2" fill="rgb(60,60,60)"/><rect x="2" y="20" width="2" height="2" fill="rgb(58,58,58)"/><rect x="4" y="20" width="2" height="2" fill="rgb(65,65,65)"/><rect x="6" y="20" width="2" height="2" fill="rgb(55,55,55)"/><rect x="8" y="20" width="2" height="2" fill="rgb(66,66,66)"/><rect x="10" y="20" width="2" height="2" fill="rgb(50,50,50)"/><rect x="12" y="20" width="2" height="2" fill="rgb(56,56,56)"/><rect x="14" y="20" width="2" height="2" fill="rgb(66,66,66)"/><rect x="16" y="20" width="2" height="2" fill="rgb(61,61,61)"/><rect x="18" y="20" width="2" height="2" fill="rgb(54,54,54)"/><rect x="20" y="20" width="2" height="2" fill="rgb(50,50,50)"/><rect x="22" y="20" width="2" height="2" fill="rgb(66,66,66)"/><rect x="24" y="20" width="2" height="2" fill="rgb(59,59,59)"/><rect x="26" y="20" width="2" height="2" fill="rgb(52,52,52)"/><rect x="28" y="20" width="2" height="2" fill="rgb(58,58,58)"/><rect x="30" y="20" width="2" height="2" fill="rgb(66,66,66)"/><rect x="32" y="20" width="2" height="2" fill="rgb(61,61,61)"/><rect x="0" y="22" width="2" height="2" fill="rgb(55,55,55)"/><rect x="2" y="22" width="2" height="2" fill="rgb(61,61,61)"/><rect x="4" y="22" width="2" height="2" fill="rgb(57,57,57)"/><rect x="6" y="22" width="2" height="2" fill="rgb(66,66,66)"/><rect x="8" y="22" width="2" height="2" fill="rgb(60,60,60)"/><rect x="10" y="22" width="2" height="2" fill="rgb(57,57,57)"/><rect x="12" y="22" width="2" height="2" fill="rgb(56,56,56)"/><rect x="14" y="22" width="2" height="2" fill="rgb(57,57,57)"/><rect x="16" y="22" width="2" height="2" fill="rgb(62,62,62)"/><rect x="18" y="22" width="2" height="2" fill="rgb(57,57,57)"/><rect x="20" y="22" width="2" height="2" fill="rgb(56,56,56)"/><rect x="22" y="22" width="2" height="2" fill="rgb(66,66,66)"/><rect x="24" y="22" width="2" height="2" fill="rgb(65,65,65)"/><rect x="26" y="22" width="2" height="2" fill="rgb(61,61,61)"/><rect x="28" y="22" width="2" height="2" fill="rgb(50,50,50)"/><rect x="30" y="22" width="2" height="2" fill="rgb(50,50,50)"/><rect x="32" y="22" width="2" height="2" fill="rgb(58,58,58)"/><rect x="0" y="24" width="2" height="2" fill="rgb(65,65,65)"/><rect x="2" y="24" width="2" height="2" fill="rgb(58,58,58)"/><rect x="4" y="24" width="2" height="2" fill="rgb(56,56,56)"/><rect x="6" y="24" width="2" height="2" fill="rgb(61,61,61)"/><rect x="8" y="24" width="2" height="2" fill="rgb(64,64,64)"/><rect x="10" y="24" width="2" height="2" fill="rgb(61,61,61)"/><rect x="12" y="24" width="2" height="2" fill="rgb(61,61,61)"/><rect x="14" y="24" width="2" height="2" fill="rgb(52,52,52)"/><rect x="16" y="24" width="2" height="2" fill="rgb(57,57,57)"/><rect x="18" y="24" width="2" height="2" fill="rgb(53,53,53)"/><rect x="20" y="24" width="2" height="2" fill="rgb(57,57,57)"/><rect x="22" y="24" width="2" height="2" fill="rgb(65,65,65)"/><rect x="24" y="24" width="2" height="2" fill="rgb(56,56,56)"/><rect x="26" y="24" width="2" height="2" fill="rgb(60,60,60)"/><rect x="28" y="24" width="2" height="2" fill="rgb(56,56,56)"/><rect x="30" y="24" width="2" height="2" fill="rgb(65,65,65)"/><rect x="32" y="24" width="2" height="2" fill="rgb(50,50,50)"/><rect x="0" y="26" width="2" height="2" fill="rgb(65,65,65)"/><rect x="2" y="26" width="2" height="2" fill="rgb(61,61,61)"/><rect x="4" y="26" width="2" height="2" fill="rgb(52,52,52)"/><rect x="6" y="26" width="2" height="2" fill="rgb(53,53,53)"/><rect x="8" y="26" width="2" height="2" fill="rgb(62,62,62)"/><rect x="10" y="26" width="2" height="2" fill="rgb(56,56,56)"/><rect x="12" y="26" width="2" height="2" fill="rgb(65,65,65)"/><rect x="14" y="26" width="2" height="2" fill="rgb(55,55,55)"/><rect x="16" y="26" width="2" height="2" fill="rgb(63,63,63)"/><rect x="18" y="26" width="2" height="2" fill="rgb(60,60,60)"/><rect x="20" y="26" width="2" height="2" fill="rgb(52,52,52)"/><rect x="22" y="26" width="2" height="2" fill="rgb(62,62,62)"/><rect x="24" y="26" width="2" height="2" fill="rgb(64,64,64)"/><rect x="26" y="26" width="2" height="2" fill="rgb(62,62,62)"/><rect x="28" y="26" width="2" height="2" fill="rgb(52,52,52)"/><rect x="30" y="26" width="2" height="2" fill="rgb(55,55,55)"/><rect x="32" y="26" width="2" height="2" fill="rgb(55,55,55)"/><rect x="0" y="28" width="2" height="2" fill="rgb(54,54,54)"/><rect x="2" y="28" width="2" height="2" fill="rgb(50,50,50)"/><rect x="4" y="28" width="2" height="2" fill="rgb(54,54,54)"/><rect x="6" y="28" width="2" height="2" fill="rgb(64,64,64)"/><rect x="8" y="28" width="2" height="2" fill="rgb(54,54,54)"/><rect x="10" y="28" width="2" height="2" fill="rgb(65,65,65)"/><rect x="12" y="28" width="2" height="2" fill="rgb(61,61,61)"/><rect x="14" y="28" width="2" height="2" fill="rgb(54,54,54)"/><rect x="16" y="28" width="2" height="2" fill="rgb(54,54,54)"/><rect x="18" y="28" width="2" height="2" fill="rgb(50,50,50)"/><rect x="20" y="28" width="2" height="2" fill="rgb(50,50,50)"/><rect x="22" y="28" width="2" height="2" fill="rgb(53,53,53)"/><rect x="24" y="28" width="2" height="2" fill="rgb(66,66,66)"/><rect x="26" y="28" width="2" height="2" fill="rgb(54,54,54)"/><rect x="28" y="28" width="2" height="2" fill="rgb(63,63,63)"/><rect x="30" y="28" width="2" height="2" fill="rgb(56,56,56)"/><rect x="32" y="28" width="2" height="2" fill="rgb(56,56,56)"/><rect x="0" y="30" width="2" height="2" fill="rgb(50,50,50)"/><rect x="2" y="30" width="2" height="2" fill="rgb(58,58,58)"/><rect x="4" y="30" width="2" height="2" fill="rgb(56,56,56)"/><rect x="6" y="30" width="2" height="2" fill="rgb(59,59,59)"/><rect x="8" y="30" width="2" height="2" fill="rgb(66,66,66)"/><rect x="10" y="30" width="2" height="2" fill="rgb(57,57,57)"/><rect x="12" y="30" width="2" height="2" fill="rgb(60,60,60)"/><rect x="14" y="30" width="2" height="2" fill="rgb(58,58,58)"/><rect x="16" y="30" width="2" height="2" fill="rgb(63,63,63)"/><rect x="18" y="30" width="2" height="2" fill="rgb(54,54,54)"/><rect x="20" y="30" width="2" height="2" fill="rgb(51,51,51)"/><rect x="22" y="30" width="2" height="2" fill="rgb(61,61,61)"/><rect x="24" y="30" width="2" height="2" fill="rgb(64,64,64)"/><rect x="26" y="30" width="2" height="2" fill="rgb(66,66,66)"/><rect x="28" y="30" width="2" height="2" fill="rgb(63,63,63)"/><rect x="30" y="30" width="2" height="2" fill="rgb(66,66,66)"/><rect x="32" y="30" width="2" height="2" fill="rgb(54,54,54)"/><rect x="0" y="32" width="2" height="2" fill="rgb(54,54,54)"/><rect x="2" y="32" width="2" height="2" fill="rgb(66,66,66)"/><rect x="4" y="32" width="2" height="2" fill="rgb(66,66,66)"/><rect x="6" y="32" width="2" height="2" fill="rgb(50,50,50)"/><rect x="8" y="32" width="2" height="2" fill="rgb(64,64,64)"/><rect x="10" y="32" width="2" height="2" fill="rgb(55,55,55)"/><rect x="12" y="32" width="2" height="2" fill="rgb(50,50,50)"/><rect x="14" y="32" width="2" height="2" fill="rgb(54,54,54)"/><rect x="16" y="32" width="2" height="2" fill="rgb(55,55,55)"/><rect x="18" y="32" width="2" height="2" fill="rgb(54,54,54)"/><rect x="20" y="32" width="2" height="2" fill="rgb(65,65,65)"/><rect x="22" y="32" width="2" height="2" fill="rgb(53,53,53)"/><rect x="24" y="32" width="2" height="2" fill="rgb(51,51,51)"/><rect x="26" y="32" width="2" height="2" fill="rgb(60,60,60)"/><rect x="28" y="32" width="2" height="2" fill="rgb(66,66,66)"/><rect x="30" y="32" width="2" height="2" fill="rgb(66,66,66)"/><rect x="32" y="32" width="2" height="2" fill="rgb(65,65,65)"/><circle cx="19" cy="18.4" r="8.6" fill="none" stroke="#00ffff" stroke-width="1.1" shape-rendering="auto"/></svg></div>
<div class="th2" style="left:684px;top:593px"><svg width="34" height="34" shape-rendering="crispEdges"><rect width="34" height="34" fill="#6c6c6c"/><rect x="7" y="8" width="3" height="3" fill="#888888"/><rect x="2" y="15" width="7" height="3" fill="#888888"/><rect x="1" y="18" width="3" height="15" fill="#888888"/><rect x="4" y="18" width="6" height="2" fill="#888888"/><rect x="7" y="20" width="3" height="13" fill="#888888"/><rect x="4" y="28" width="3" height="5" fill="#888888"/><rect x="27" y="12" width="6" height="21" fill="#888888"/><rect x="28" y="15" width="3" height="6" fill="#6c6c6c"/><rect x="19" y="2" width="4" height="4" fill="#00ffff"/><rect x="18" y="3" width="1" height="2" fill="#00ffff"/><rect x="13" y="7" width="4" height="3" fill="#00ffff"/><rect x="21" y="10" width="3" height="3" fill="#00ffff"/><rect x="12" y="13" width="7" height="3" fill="#00ffff"/><rect x="13" y="12" width="4" height="1" fill="#00ffff"/><rect x="11" y="17" width="3" height="3" fill="#00ffff"/><rect x="20" y="21" width="3" height="3" fill="#00ffff"/><rect x="10" y="23" width="5" height="10" fill="#00ffff"/><rect x="12" y="28" width="7" height="5" fill="#00ffff"/><rect x="15" y="24" width="1" height="4" fill="#00ffff"/><rect x="24" y="21" width="3" height="5" fill="#00ffff"/><rect x="21" y="25" width="6" height="8" fill="#00ffff"/><path d="M14.5 26.5L15.3 17.3L16.8 11.2L17.6 4.6L18.4 3.8L19.4 4.6L20.4 10.7L21.7 18.4L22.7 24.5M18.9 5.1L17.2 15" fill="none" stroke="#c8f000" stroke-width="1"/><rect x="31" y="32" width="1" height="1" fill="#c8f000"/></svg></div>
<div class="lbl" style="left:648px;top:628px;transform:scaleX(0.92)">S/N =</div><div class="lbl" style="left:683px;top:628px;transform:scaleX(0.92)">3.66</div>

<div class="sw" style="left:734px;top:578px;background:#ffff00"></div>
<div class="lbl" style="left:746px;top:577px;transform:scaleX(0.9)">287133</div>
<div class="th" style="left:734px;top:593px"><svg width="34" height="34" shape-rendering="crispEdges"><rect x="0" y="0" width="2" height="2" fill="rgb(55,55,55)"/><rect x="2" y="0" width="2" height="2" fill="rgb(53,53,53)"/><rect x="4" y="0" width="2" height="2" fill="rgb(59,59,59)"/><rect x="6" y="0" width="2" height="2" fill="rgb(58,58,58)"/><rect x="8" y="0" width="2" height="2" fill="rgb(60,60,60)"/><rect x="10" y="0" width="2" height="2" fill="rgb(53,53,53)"/><rect x="12" y="0" width="2" height="2" fill="rgb(55,55,55)"/><rect x="14" y="0" width="2" height="2" fill="rgb(68,68,68)"/><rect x="16" y="0" width="2" height="2" fill="rgb(66,66,66)"/><rect x="18" y="0" width="2" height="2" fill="rgb(52,52,52)"/><rect x="20" y="0" width="2" height="2" fill="rgb(54,54,54)"/><rect x="22" y="0" width="2" height="2" fill="rgb(66,66,66)"/><rect x="24" y="0" width="2" height="2" fill="rgb(62,62,62)"/><rect x="26" y="0" width="2" height="2" fill="rgb(68,68,68)"/><rect x="28" y="0" width="2" height="2" fill="rgb(68,68,68)"/><rect x="30" y="0" width="2" height="2" fill="rgb(58,58,58)"/><rect x="32" y="0" width="2" height="2" fill="rgb(60,60,60)"/><rect x="0" y="2" width="2" height="2" fill="rgb(66,66,66)"/><rect x="2" y="2" width="2" height="2" fill="rgb(68,68,68)"/><rect x="4" y="2" width="2" height="2" fill="rgb(67,67,67)"/><rect x="6" y="2" width="2" height="2" fill="rgb(68,68,68)"/><rect x="8" y="2" width="2" height="2" fill="rgb(59,59,59)"/><rect x="10" y="2" width="2" height="2" fill="rgb(68,68,68)"/><rect x="12" y="2" width="2" height="2" fill="rgb(60,60,60)"/><rect x="14" y="2" width="2" height="2" fill="rgb(58,58,58)"/><rect x="16" y="2" width="2" height="2" fill="rgb(66,66,66)"/><rect x="18" y="2" width="2" height="2" fill="rgb(56,56,56)"/><rect x="20" y="2" width="2" height="2" fill="rgb(65,65,65)"/><rect x="22" y="2" width="2" height="2" fill="rgb(55,55,55)"/><rect x="24" y="2" width="2" height="2" fill="rgb(64,64,64)"/><rect x="26" y="2" width="2" height="2" fill="rgb(66,66,66)"/><rect x="28" y="2" width="2" height="2" fill="rgb(62,62,62)"/><rect x="30" y="2" width="2" height="2" fill="rgb(54,54,54)"/><rect x="32" y="2" width="2" height="2" fill="rgb(59,59,59)"/><rect x="0" y="4" width="2" height="2" fill="rgb(65,65,65)"/><rect x="2" y="4" width="2" height="2" fill="rgb(54,54,54)"/><rect x="4" y="4" width="2" height="2" fill="rgb(58,58,58)"/><rect x="6" y="4" width="2" height="2" fill="rgb(61,61,61)"/><rect x="8" y="4" width="2" height="2" fill="rgb(55,55,55)"/><rect x="10" y="4" width="2" height="2" fill="rgb(56,56,56)"/><rect x="12" y="4" width="2" height="2" fill="rgb(63,63,63)"/><rect x="14" y="4" width="2" height="2" fill="rgb(56,56,56)"/><rect x="16" y="4" width="2" height="2" fill="rgb(60,60,60)"/><rect x="18" y="4" width="2" height="2" fill="rgb(56,56,56)"/><rect x="20" y="4" width="2" height="2" fill="rgb(66,66,66)"/><rect x="22" y="4" width="2" height="2" fill="rgb(59,59,59)"/><rect x="24" y="4" width="2" height="2" fill="rgb(55,55,55)"/><rect x="26" y="4" width="2" height="2" fill="rgb(64,64,64)"/><rect x="28" y="4" width="2" height="2" fill="rgb(67,67,67)"/><rect x="30" y="4" width="2" height="2" fill="rgb(57,57,57)"/><rect x="32" y="4" width="2" height="2" fill="rgb(59,59,59)"/><rect x="0" y="6" width="2" height="2" fill="rgb(57,57,57)"/><rect x="2" y="6" width="2" height="2" fill="rgb(65,65,65)"/><rect x="4" y="6" width="2" height="2" fill="rgb(68,68,68)"/><rect x="6" y="6" width="2" height="2" fill="rgb(64,64,64)"/><rect x="8" y="6" width="2" height="2" fill="rgb(62,62,62)"/><rect x="10" y="6" width="2" height="2" fill="rgb(65,65,65)"/><rect x="12" y="6" width="2" height="2" fill="rgb(58,58,58)"/><rect x="14" y="6" width="2" height="2" fill="rgb(63,63,63)"/><rect x="16" y="6" width="2" height="2" fill="rgb(62,62,62)"/><rect x="18" y="6" width="2" height="2" fill="rgb(54,54,54)"/><rect x="20" y="6" width="2" height="2" fill="rgb(63,63,63)"/><rect x="22" y="6" width="2" height="2" fill="rgb(52,52,52)"/><rect x="24" y="6" width="2" height="2" fill="rgb(62,62,62)"/><rect x="26" y="6" width="2" height="2" fill="rgb(66,66,66)"/><rect x="28" y="6" width="2" height="2" fill="rgb(66,66,66)"/><rect x="30" y="6" width="2" height="2" fill="rgb(52,52,52)"/><rect x="32" y="6" width="2" height="2" fill="rgb(64,64,64)"/><rect x="0" y="8" width="2" height="2" fill="rgb(62,62,62)"/><rect x="2" y="8" width="2" height="2" fill="rgb(68,68,68)"/><rect x="4" y="8" width="2" height="2" fill="rgb(61,61,61)"/><rect x="6" y="8" width="2" height="2" fill="rgb(68,68,68)"/><rect x="8" y="8" width="2" height="2" fill="rgb(54,54,54)"/><rect x="10" y="8" width="2" height="2" fill="rgb(55,55,55)"/><rect x="12" y="8" width="2" height="2" fill="rgb(59,59,59)"/><rect x="14" y="8" width="2" height="2" fill="rgb(55,55,55)"/><rect x="16" y="8" width="2" height="2" fill="rgb(54,54,54)"/><rect x="18" y="8" width="2" height="2" fill="rgb(60,60,60)"/><rect x="20" y="8" width="2" height="2" fill="rgb(60,60,60)"/><rect x="22" y="8" width="2" height="2" fill="rgb(53,53,53)"/><rect x="24" y="8" width="2" height="2" fill="rgb(57,57,57)"/><rect x="26" y="8" width="2" height="2" fill="rgb(60,60,60)"/><rect x="28" y="8" width="2" height="2" fill="rgb(56,56,56)"/><rect x="30" y="8" width="2" height="2" fill="rgb(65,65,65)"/><rect x="32" y="8" width="2" height="2" fill="rgb(60,60,60)"/><rect x="0" y="10" width="2" height="2" fill="rgb(64,64,64)"/><rect x="2" y="10" width="2" height="2" fill="rgb(56,56,56)"/><rect x="4" y="10" width="2" height="2" fill="rgb(68,68,68)"/><rect x="6" y="10" width="2" height="2" fill="rgb(67,67,67)"/><rect x="8" y="10" width="2" height="2" fill="rgb(62,62,62)"/><rect x="10" y="10" width="2" height="2" fill="rgb(54,54,54)"/><rect x="12" y="10" width="2" height="2" fill="rgb(60,60,60)"/><rect x="14" y="10" width="2" height="2" fill="rgb(53,53,53)"/><rect x="16" y="10" width="2" height="2" fill="rgb(57,57,57)"/><rect x="18" y="10" width="2" height="2" fill="rgb(65,65,65)"/><rect x="20" y="10" width="2" height="2" fill="rgb(54,54,54)"/><rect x="22" y="10" width="2" height="2" fill="rgb(60,60,60)"/><rect x="24" y="10" width="2" height="2" fill="rgb(52,52,52)"/><rect x="26" y="10" width="2" height="2" fill="rgb(54,54,54)"/><rect x="28" y="10" width="2" height="2" fill="rgb(60,60,60)"/><rect x="30" y="10" width="2" height="2" fill="rgb(54,54,54)"/><rect x="32" y="10" width="2" height="2" fill="rgb(59,59,59)"/><rect x="0" y="12" width="2" height="2" fill="rgb(54,54,54)"/><rect x="2" y="12" width="2" height="2" fill="rgb(60,60,60)"/><rect x="4" y="12" width="2" height="2" fill="rgb(55,55,55)"/><rect x="6" y="12" width="2" height="2" fill="rgb(66,66,66)"/><rect x="8" y="12" width="2" height="2" fill="rgb(52,52,52)"/><rect x="10" y="12" width="2" height="2" fill="rgb(62,62,62)"/><rect x="12" y="12" width="2" height="2" fill="rgb(65,65,65)"/><rect x="14" y="12" width="2" height="2" fill="rgb(60,60,60)"/><rect x="16" y="12" width="2" height="2" fill="rgb(56,56,56)"/><rect x="18" y="12" width="2" height="2" fill="rgb(53,53,53)"/><rect x="20" y="12" width="2" height="2" fill="rgb(68,68,68)"/><rect x="22" y="12" width="2" height="2" fill="rgb(59,59,59)"/><rect x="24" y="12" width="2" height="2" fill="rgb(55,55,55)"/><rect x="26" y="12" width="2" height="2" fill="rgb(57,57,57)"/><rect x="28" y="12" width="2" height="2" fill="rgb(60,60,60)"/><rect x="30" y="12" width="2" height="2" fill="rgb(53,53,53)"/><rect x="32" y="12" width="2" height="2" fill="rgb(57,57,57)"/><rect x="0" y="14" width="2" height="2" fill="rgb(58,58,58)"/><rect x="2" y="14" width="2" height="2" fill="rgb(61,61,61)"/><rect x="4" y="14" width="2" height="2" fill="rgb(61,61,61)"/><rect x="6" y="14" width="2" height="2" fill="rgb(68,68,68)"/><rect x="8" y="14" width="2" height="2" fill="rgb(58,58,58)"/><rect x="10" y="14" width="2" height="2" fill="rgb(61,61,61)"/><rect x="12" y="14" width="2" height="2" fill="rgb(66,66,66)"/><rect x="14" y="14" width="2" height="2" fill="rgb(68,68,68)"/><rect x="16" y="14" width="2" height="2" fill="rgb(57,57,57)"/><rect x="18" y="14" width="2" height="2" fill="rgb(60,60,60)"/><rect x="20" y="14" width="2" height="2" fill="rgb(63,63,63)"/><rect x="22" y="14" width="2" height="2" fill="rgb(52,52,52)"/><rect x="24" y="14" width="2" height="2" fill="rgb(60,60,60)"/><rect x="26" y="14" width="2" height="2" fill="rgb(53,53,53)"/><rect x="28" y="14" width="2" height="2" fill="rgb(52,52,52)"/><rect x="30" y="14" width="2" height="2" fill="rgb(52,52,52)"/><rect x="32" y="14" width="2" height="2" fill="rgb(68,68,68)"/><rect x="0" y="16" width="2" height="2" fill="rgb(58,58,58)"/><rect x="2" y="16" width="2" height="2" fill="rgb(68,68,68)"/><rect x="4" y="16" width="2" height="2" fill="rgb(67,67,67)"/><rect x="6" y="16" width="2" height="2" fill="rgb(59,59,59)"/><rect x="8" y="16" width="2" height="2" fill="rgb(66,66,66)"/><rect x="10" y="16" width="2" height="2" fill="rgb(55,55,55)"/><rect x="12" y="16" width="2" height="2" fill="rgb(65,65,65)"/><rect x="14" y="16" width="2" height="2" fill="rgb(67,67,67)"/><rect x="16" y="16" width="2" height="2" fill="rgb(64,64,64)"/><rect x="18" y="16" width="2" height="2" fill="rgb(68,68,68)"/><rect x="20" y="16" width="2" height="2" fill="rgb(61,61,61)"/><rect x="22" y="16" width="2" height="2" fill="rgb(58,58,58)"/><rect x="24" y="16" width="2" height="2" fill="rgb(59,59,59)"/><rect x="26" y="16" width="2" height="2" fill="rgb(62,62,62)"/><rect x="28" y="16" width="2" height="2" fill="rgb(58,58,58)"/><rect x="30" y="16" width="2" height="2" fill="rgb(56,56,56)"/><rect x="32" y="16" width="2" height="2" fill="rgb(64,64,64)"/><rect x="0" y="18" width="2" height="2" fill="rgb(63,63,63)"/><rect x="2" y="18" width="2" height="2" fill="rgb(53,53,53)"/><rect x="4" y="18" width="2" height="2" fill="rgb(56,56,56)"/><rect x="6" y="18" width="2" height="2" fill="rgb(52,52,52)"/><rect x="8" y="18" width="2" height="2" fill="rgb(54,54,54)"/><rect x="10" y="18" width="2" height="2" fill="rgb(60,60,60)"/><rect x="12" y="18" width="2" height="2" fill="rgb(65,65,65)"/><rect x="14" y="18" width="2" height="2" fill="rgb(57,57,57)"/><rect x="16" y="18" width="2" height="2" fill="rgb(53,53,53)"/><rect x="18" y="18" width="2" height="2" fill="rgb(54,54,54)"/><rect x="20" y="18" width="2" height="2" fill="rgb(64,64,64)"/><rect x="22" y="18" width="2" height="2" fill="rgb(68,68,68)"/><rect x="24" y="18" width="2" height="2" fill="rgb(61,61,61)"/><rect x="26" y="18" width="2" height="2" fill="rgb(59,59,59)"/><rect x="28" y="18" width="2" height="2" fill="rgb(61,61,61)"/><rect x="30" y="18" width="2" height="2" fill="rgb(53,53,53)"/><rect x="32" y="18" width="2" height="2" fill="rgb(66,66,66)"/><rect x="0" y="20" width="2" height="2" fill="rgb(57,57,57)"/><rect x="2" y="20" width="2" height="2" fill="rgb(57,57,57)"/><rect x="4" y="20" width="2" height="2" fill="rgb(60,60,60)"/><rect x="6" y="20" width="2" height="2" fill="rgb(66,66,66)"/><rect x="8" y="20" width="2" height="2" fill="rgb(52,52,52)"/><rect x="10" y="20" width="2" height="2" fill="rgb(60,60,60)"/><rect x="12" y="20" width="2" height="2" fill="rgb(63,63,63)"/><rect x="14" y="20" width="2" height="2" fill="rgb(62,62,62)"/><rect x="16" y="20" width="2" height="2" fill="rgb(62,62,62)"/><rect x="18" y="20" width="2" height="2" fill="rgb(59,59,59)"/><rect x="20" y="20" width="2" height="2" fill="rgb(53,53,53)"/><rect x="22" y="20" width="2" height="2" fill="rgb(61,61,61)"/><rect x="24" y="20" width="2" height="2" fill="rgb(58,58,58)"/><rect x="26" y="20" width="2" height="2" fill="rgb(63,63,63)"/><rect x="28" y="20" width="2" height="2" fill="rgb(57,57,57)"/><rect x="30" y="20" width="2" height="2" fill="rgb(52,52,52)"/><rect x="32" y="20" width="2" height="2" fill="rgb(62,62,62)"/><rect x="0" y="22" width="2" height="2" fill="rgb(64,64,64)"/><rect x="2" y="22" width="2" height="2" fill="rgb(54,54,54)"/><rect x="4" y="22" width="2" height="2" fill="rgb(67,67,67)"/><rect x="6" y="22" width="2" height="2" fill="rgb(60,60,60)"/><rect x="8" y="22" width="2" height="2" fill="rgb(68,68,68)"/><rect x="10" y="22" width="2" height="2" fill="rgb(58,58,58)"/><rect x="12" y="22" width="2" height="2" fill="rgb(59,59,59)"/><rect x="14" y="22" width="2" height="2" fill="rgb(68,68,68)"/><rect x="16" y="22" width="2" height="2" fill="rgb(52,52,52)"/><rect x="18" y="22" width="2" height="2" fill="rgb(54,54,54)"/><rect x="20" y="22" width="2" height="2" fill="rgb(60,60,60)"/><rect x="22" y="22" width="2" height="2" fill="rgb(54,54,54)"/><rect x="24" y="22" width="2" height="2" fill="rgb(56,56,56)"/><rect x="26" y="22" width="2" height="2" fill="rgb(64,64,64)"/><rect x="28" y="22" width="2" height="2" fill="rgb(53,53,53)"/><rect x="30" y="22" width="2" height="2" fill="rgb(64,64,64)"/><rect x="32" y="22" width="2" height="2" fill="rgb(52,52,52)"/><rect x="0" y="24" width="2" height="2" fill="rgb(61,61,61)"/><rect x="2" y="24" width="2" height="2" fill="rgb(61,61,61)"/><rect x="4" y="24" width="2" height="2" fill="rgb(59,59,59)"/><rect x="6" y="24" width="2" height="2" fill="rgb(54,54,54)"/><rect x="8" y="24" width="2" height="2" fill="rgb(68,68,68)"/><rect x="10" y="24" width="2" height="2" fill="rgb(56,56,56)"/><rect x="12" y="24" width="2" height="2" fill="rgb(64,64,64)"/><rect x="14" y="24" width="2" height="2" fill="rgb(62,62,62)"/><rect x="16" y="24" width="2" height="2" fill="rgb(67,67,67)"/><rect x="18" y="24" width="2" height="2" fill="rgb(56,56,56)"/><rect x="20" y="24" width="2" height="2" fill="rgb(61,61,61)"/><rect x="22" y="24" width="2" height="2" fill="rgb(56,56,56)"/><rect x="24" y="24" width="2" height="2" fill="rgb(53,53,53)"/><rect x="26" y="24" width="2" height="2" fill="rgb(68,68,68)"/><rect x="28" y="24" width="2" height="2" fill="rgb(65,65,65)"/><rect x="30" y="24" width="2" height="2" fill="rgb(68,68,68)"/><rect x="32" y="24" width="2" height="2" fill="rgb(56,56,56)"/><rect x="0" y="26" width="2" height="2" fill="rgb(68,68,68)"/><rect x="2" y="26" width="2" height="2" fill="rgb(68,68,68)"/><rect x="4" y="26" width="2" height="2" fill="rgb(52,52,52)"/><rect x="6" y="26" width="2" height="2" fill="rgb(59,59,59)"/><rect x="8" y="26" width="2" height="2" fill="rgb(54,54,54)"/><rect x="10" y="26" width="2" height="2" fill="rgb(52,52,52)"/><rect x="12" y="26" width="2" height="2" fill="rgb(53,53,53)"/><rect x="14" y="26" width="2" height="2" fill="rgb(56,56,56)"/><rect x="16" y="26" width="2" height="2" fill="rgb(63,63,63)"/><rect x="18" y="26" width="2" height="2" fill="rgb(55,55,55)"/><rect x="20" y="26" width="2" height="2" fill="rgb(64,64,64)"/><rect x="22" y="26" width="2" height="2" fill="rgb(66,66,66)"/><rect x="24" y="26" width="2" height="2" fill="rgb(53,53,53)"/><rect x="26" y="26" width="2" height="2" fill="rgb(52,52,52)"/><rect x="28" y="26" width="2" height="2" fill="rgb(59,59,59)"/><rect x="30" y="26" width="2" height="2" fill="rgb(67,67,67)"/><rect x="32" y="26" width="2" height="2" fill="rgb(60,60,60)"/><rect x="0" y="28" width="2" height="2" fill="rgb(52,52,52)"/><rect x="2" y="28" width="2" height="2" fill="rgb(66,66,66)"/><rect x="4" y="28" width="2" height="2" fill="rgb(54,54,54)"/><rect x="6" y="28" width="2" height="2" fill="rgb(68,68,68)"/><rect x="8" y="28" width="2" height="2" fill="rgb(54,54,54)"/><rect x="10" y="28" width="2" height="2" fill="rgb(68,68,68)"/><rect x="12" y="28" width="2" height="2" fill="rgb(54,54,54)"/><rect x="14" y="28" width="2" height="2" fill="rgb(67,67,67)"/><rect x="16" y="28" width="2" height="2" fill="rgb(60,60,60)"/><rect x="18" y="28" width="2" height="2" fill="rgb(54,54,54)"/><rect x="20" y="28" width="2" height="2" fill="rgb(60,60,60)"/><rect x="22" y="28" width="2" height="2" fill="rgb(59,59,59)"/><rect x="24" y="28" width="2" height="2" fill="rgb(58,58,58)"/><rect x="26" y="28" width="2" height="2" fill="rgb(59,59,59)"/><rect x="28" y="28" width="2" height="2" fill="rgb(66,66,66)"/><rect x="30" y="28" width="2" height="2" fill="rgb(67,67,67)"/><rect x="32" y="28" width="2" height="2" fill="rgb(64,64,64)"/><rect x="0" y="30" width="2" height="2" fill="rgb(54,54,54)"/><rect x="2" y="30" width="2" height="2" fill="rgb(67,67,67)"/><rect x="4" y="30" width="2" height="2" fill="rgb(61,61,61)"/><rect x="6" y="30" width="2" height="2" fill="rgb(53,53,53)"/><rect x="8" y="30" width="2" height="2" fill="rgb(58,58,58)"/><rect x="10" y="30" width="2" height="2" fill="rgb(54,54,54)"/><rect x="12" y="30" width="2" height="2" fill="rgb(56,56,56)"/><rect x="14" y="30" width="2" height="2" fill="rgb(62,62,62)"/><rect x="16" y="30" width="2" height="2" fill="rgb(60,60,60)"/><rect x="18" y="30" width="2" height="2" fill="rgb(61,61,61)"/><rect x="20" y="30" width="2" height="2" fill="rgb(56,56,56)"/><rect x="22" y="30" width="2" height="2" fill="rgb(52,52,52)"/><rect x="24" y="30" width="2" height="2" fill="rgb(67,67,67)"/><rect x="26" y="30" width="2" height="2" fill="rgb(53,53,53)"/><rect x="28" y="30" width="2" height="2" fill="rgb(67,67,67)"/><rect x="30" y="30" width="2" height="2" fill="rgb(60,60,60)"/><rect x="32" y="30" width="2" height="2" fill="rgb(55,55,55)"/><rect x="0" y="32" width="2" height="2" fill="rgb(58,58,58)"/><rect x="2" y="32" width="2" height="2" fill="rgb(67,67,67)"/><rect x="4" y="32" width="2" height="2" fill="rgb(61,61,61)"/><rect x="6" y="32" width="2" height="2" fill="rgb(68,68,68)"/><rect x="8" y="32" width="2" height="2" fill="rgb(61,61,61)"/><rect x="10" y="32" width="2" height="2" fill="rgb(66,66,66)"/><rect x="12" y="32" width="2" height="2" fill="rgb(66,66,66)"/><rect x="14" y="32" width="2" height="2" fill="rgb(66,66,66)"/><rect x="16" y="32" width="2" height="2" fill="rgb(55,55,55)"/><rect x="18" y="32" width="2" height="2" fill="rgb(58,58,58)"/><rect x="20" y="32" width="2" height="2" fill="rgb(61,61,61)"/><rect x="22" y="32" width="2" height="2" fill="rgb(54,54,54)"/><rect x="24" y="32" width="2" height="2" fill="rgb(67,67,67)"/><rect x="26" y="32" width="2" height="2" fill="rgb(52,52,52)"/><rect x="28" y="32" width="2" height="2" fill="rgb(61,61,61)"/><rect x="30" y="32" width="2" height="2" fill="rgb(66,66,66)"/><rect x="32" y="32" width="2" height="2" fill="rgb(54,54,54)"/><circle cx="17.5" cy="17.5" r="3.8" fill="#7a7a7a" shape-rendering="auto"/><circle cx="17.5" cy="17" r="2" fill="#b0b0b0" shape-rendering="auto"/><circle cx="17.5" cy="17.5" r="8.6" fill="none" stroke="#ffff00" stroke-width="1.1" shape-rendering="auto"/></svg></div>
<div class="th2" style="left:770px;top:593px"><svg width="34" height="34" shape-rendering="crispEdges"><rect width="34" height="34" fill="#6c6c6c"/><rect x="1" y="29" width="6.5" height="3" fill="#888888"/><rect x="30" y="29" width="2.5" height="3" fill="#888888"/><path d="M14.3 25L14.5 19.4L15.3 14.3L17.3 5.1L18.4 3.8L19.6 5.1L20.4 10.2L21.4 14.8" fill="none" stroke="#80ff40" stroke-width="1"/><rect x="15" y="7" width="8" height="3" fill="#ffff00"/><rect x="15" y="10" width="3" height="4" fill="#ffff00"/><rect x="14" y="20" width="3" height="3" fill="#ffff00"/><rect x="10" y="25" width="6" height="8" fill="#ffff00"/><rect x="9" y="27" width="1" height="6" fill="#ffff00"/><rect x="8" y="29" width="1" height="4" fill="#ffff00"/><rect x="21" y="16" width="3" height="7" fill="#ffff00"/><rect x="21" y="23" width="4" height="3.5" fill="#ffff00"/><rect x="22" y="26" width="6" height="7" fill="#ffff00"/><rect x="28" y="28" width="1" height="5" fill="#ffff00"/><rect x="29" y="30" width="1" height="3" fill="#ffff00"/></svg></div>
<div class="lbl" style="left:734px;top:628px;transform:scaleX(0.92)">S/N =</div><div class="lbl" style="left:770px;top:628px;transform:scaleX(0.92)">10.73</div>

<div class="sw" style="left:821px;top:578px;background:#00ff00"></div>
<div class="lbl" style="left:833px;top:577px;transform:scaleX(0.9)">44818</div>
<div class="th" style="left:821px;top:593px"><svg width="34" height="34" shape-rendering="crispEdges"><rect x="0" y="0" width="2" height="2" fill="rgb(66,66,66)"/><rect x="2" y="0" width="2" height="2" fill="rgb(64,64,64)"/><rect x="4" y="0" width="2" height="2" fill="rgb(58,58,58)"/><rect x="6" y="0" width="2" height="2" fill="rgb(62,62,62)"/><rect x="8" y="0" width="2" height="2" fill="rgb(56,56,56)"/><rect x="10" y="0" width="2" height="2" fill="rgb(56,56,56)"/><rect x="12" y="0" width="2" height="2" fill="rgb(52,52,52)"/><rect x="14" y="0" width="2" height="2" fill="rgb(52,52,52)"/><rect x="16" y="0" width="2" height="2" fill="rgb(54,54,54)"/><rect x="18" y="0" width="2" height="2" fill="rgb(66,66,66)"/><rect x="20" y="0" width="2" height="2" fill="rgb(58,58,58)"/><rect x="22" y="0" width="2" height="2" fill="rgb(61,61,61)"/><rect x="24" y="0" width="2" height="2" fill="rgb(54,54,54)"/><rect x="26" y="0" width="2" height="2" fill="rgb(66,66,66)"/><rect x="28" y="0" width="2" height="2" fill="rgb(58,58,58)"/><rect x="30" y="0" width="2" height="2" fill="rgb(53,53,53)"/><rect x="32" y="0" width="2" height="2" fill="rgb(61,61,61)"/><rect x="0" y="2" width="2" height="2" fill="rgb(57,57,57)"/><rect x="2" y="2" width="2" height="2" fill="rgb(65,65,65)"/><rect x="4" y="2" width="2" height="2" fill="rgb(65,65,65)"/><rect x="6" y="2" width="2" height="2" fill="rgb(62,62,62)"/><rect x="8" y="2" width="2" height="2" fill="rgb(50,50,50)"/><rect x="10" y="2" width="2" height="2" fill="rgb(55,55,55)"/><rect x="12" y="2" width="2" height="2" fill="rgb(50,50,50)"/><rect x="14" y="2" width="2" height="2" fill="rgb(65,65,65)"/><rect x="16" y="2" width="2" height="2" fill="rgb(64,64,64)"/><rect x="18" y="2" width="2" height="2" fill="rgb(62,62,62)"/><rect x="20" y="2" width="2" height="2" fill="rgb(59,59,59)"/><rect x="22" y="2" width="2" height="2" fill="rgb(54,54,54)"/><rect x="24" y="2" width="2" height="2" fill="rgb(63,63,63)"/><rect x="26" y="2" width="2" height="2" fill="rgb(61,61,61)"/><rect x="28" y="2" width="2" height="2" fill="rgb(62,62,62)"/><rect x="30" y="2" width="2" height="2" fill="rgb(60,60,60)"/><rect x="32" y="2" width="2" height="2" fill="rgb(53,53,53)"/><rect x="0" y="4" width="2" height="2" fill="rgb(60,60,60)"/><rect x="2" y="4" width="2" height="2" fill="rgb(50,50,50)"/><rect x="4" y="4" width="2" height="2" fill="rgb(60,60,60)"/><rect x="6" y="4" width="2" height="2" fill="rgb(60,60,60)"/><rect x="8" y="4" width="2" height="2" fill="rgb(62,62,62)"/><rect x="10" y="4" width="2" height="2" fill="rgb(53,53,53)"/><rect x="12" y="4" width="2" height="2" fill="rgb(56,56,56)"/><rect x="14" y="4" width="2" height="2" fill="rgb(50,50,50)"/><rect x="16" y="4" width="2" height="2" fill="rgb(59,59,59)"/><rect x="18" y="4" width="2" height="2" fill="rgb(58,58,58)"/><rect x="20" y="4" width="2" height="2" fill="rgb(61,61,61)"/><rect x="22" y="4" width="2" height="2" fill="rgb(52,52,52)"/><rect x="24" y="4" width="2" height="2" fill="rgb(62,62,62)"/><rect x="26" y="4" width="2" height="2" fill="rgb(62,62,62)"/><rect x="28" y="4" width="2" height="2" fill="rgb(52,52,52)"/><rect x="30" y="4" width="2" height="2" fill="rgb(61,61,61)"/><rect x="32" y="4" width="2" height="2" fill="rgb(63,63,63)"/><rect x="0" y="6" width="2" height="2" fill="rgb(58,58,58)"/><rect x="2" y="6" width="2" height="2" fill="rgb(51,51,51)"/><rect x="4" y="6" width="2" height="2" fill="rgb(58,58,58)"/><rect x="6" y="6" width="2" height="2" fill="rgb(53,53,53)"/><rect x="8" y="6" width="2" height="2" fill="rgb(51,51,51)"/><rect x="10" y="6" width="2" height="2" fill="rgb(59,59,59)"/><rect x="12" y="6" width="2" height="2" fill="rgb(54,54,54)"/><rect x="14" y="6" width="2" height="2" fill="rgb(57,57,57)"/><rect x="16" y="6" width="2" height="2" fill="rgb(58,58,58)"/><rect x="18" y="6" width="2" height="2" fill="rgb(63,63,63)"/><rect x="20" y="6" width="2" height="2" fill="rgb(66,66,66)"/><rect x="22" y="6" width="2" height="2" fill="rgb(60,60,60)"/><rect x="24" y="6" width="2" height="2" fill="rgb(56,56,56)"/><rect x="26" y="6" width="2" height="2" fill="rgb(61,61,61)"/><rect x="28" y="6" width="2" height="2" fill="rgb(63,63,63)"/><rect x="30" y="6" width="2" height="2" fill="rgb(50,50,50)"/><rect x="32" y="6" width="2" height="2" fill="rgb(62,62,62)"/><rect x="0" y="8" width="2" height="2" fill="rgb(56,56,56)"/><rect x="2" y="8" width="2" height="2" fill="rgb(52,52,52)"/><rect x="4" y="8" width="2" height="2" fill="rgb(51,51,51)"/><rect x="6" y="8" width="2" height="2" fill="rgb(63,63,63)"/><rect x="8" y="8" width="2" height="2" fill="rgb(64,64,64)"/><rect x="10" y="8" width="2" height="2" fill="rgb(54,54,54)"/><rect x="12" y="8" width="2" height="2" fill="rgb(59,59,59)"/><rect x="14" y="8" width="2" height="2" fill="rgb(65,65,65)"/><rect x="16" y="8" width="2" height="2" fill="rgb(51,51,51)"/><rect x="18" y="8" width="2" height="2" fill="rgb(54,54,54)"/><rect x="20" y="8" width="2" height="2" fill="rgb(55,55,55)"/><rect x="22" y="8" width="2" height="2" fill="rgb(65,65,65)"/><rect x="24" y="8" width="2" height="2" fill="rgb(63,63,63)"/><rect x="26" y="8" width="2" height="2" fill="rgb(60,60,60)"/><rect x="28" y="8" width="2" height="2" fill="rgb(59,59,59)"/><rect x="30" y="8" width="2" height="2" fill="rgb(59,59,59)"/><rect x="32" y="8" width="2" height="2" fill="rgb(58,58,58)"/><rect x="0" y="10" width="2" height="2" fill="rgb(58,58,58)"/><rect x="2" y="10" width="2" height="2" fill="rgb(62,62,62)"/><rect x="4" y="10" width="2" height="2" fill="rgb(57,57,57)"/><rect x="6" y="10" width="2" height="2" fill="rgb(59,59,59)"/><rect x="8" y="10" width="2" height="2" fill="rgb(65,65,65)"/><rect x="10" y="10" width="2" height="2" fill="rgb(62,62,62)"/><rect x="12" y="10" width="2" height="2" fill="rgb(53,53,53)"/><rect x="14" y="10" width="2" height="2" fill="rgb(55,55,55)"/><rect x="16" y="10" width="2" height="2" fill="rgb(55,55,55)"/><rect x="18" y="10" width="2" height="2" fill="rgb(52,52,52)"/><rect x="20" y="10" width="2" height="2" fill="rgb(56,56,56)"/><rect x="22" y="10" width="2" height="2" fill="rgb(66,66,66)"/><rect x="24" y="10" width="2" height="2" fill="rgb(65,65,65)"/><rect x="26" y="10" width="2" height="2" fill="rgb(57,57,57)"/><rect x="28" y="10" width="2" height="2" fill="rgb(64,64,64)"/><rect x="30" y="10" width="2" height="2" fill="rgb(60,60,60)"/><rect x="32" y="10" width="2" height="2" fill="rgb(64,64,64)"/><rect x="0" y="12" width="2" height="2" fill="rgb(63,63,63)"/><rect x="2" y="12" width="2" height="2" fill="rgb(54,54,54)"/><rect x="4" y="12" width="2" height="2" fill="rgb(56,56,56)"/><rect x="6" y="12" width="2" height="2" fill="rgb(57,57,57)"/><rect x="8" y="12" width="2" height="2" fill="rgb(52,52,52)"/><rect x="10" y="12" width="2" height="2" fill="rgb(55,55,55)"/><rect x="12" y="12" width="2" height="2" fill="rgb(60,60,60)"/><rect x="14" y="12" width="2" height="2" fill="rgb(52,52,52)"/><rect x="16" y="12" width="2" height="2" fill="rgb(60,60,60)"/><rect x="18" y="12" width="2" height="2" fill="rgb(57,57,57)"/><rect x="20" y="12" width="2" height="2" fill="rgb(61,61,61)"/><rect x="22" y="12" width="2" height="2" fill="rgb(58,58,58)"/><rect x="24" y="12" width="2" height="2" fill="rgb(56,56,56)"/><rect x="26" y="12" width="2" height="2" fill="rgb(50,50,50)"/><rect x="28" y="12" width="2" height="2" fill="rgb(63,63,63)"/><rect x="30" y="12" width="2" height="2" fill="rgb(62,62,62)"/><rect x="32" y="12" width="2" height="2" fill="rgb(63,63,63)"/><rect x="0" y="14" width="2" height="2" fill="rgb(66,66,66)"/><rect x="2" y="14" width="2" height="2" fill="rgb(56,56,56)"/><rect x="4" y="14" width="2" height="2" fill="rgb(62,62,62)"/><rect x="6" y="14" width="2" height="2" fill="rgb(58,58,58)"/><rect x="8" y="14" width="2" height="2" fill="rgb(60,60,60)"/><rect x="10" y="14" width="2" height="2" fill="rgb(51,51,51)"/><rect x="12" y="14" width="2" height="2" fill="rgb(65,65,65)"/><rect x="14" y="14" width="2" height="2" fill="rgb(58,58,58)"/><rect x="16" y="14" width="2" height="2" fill="rgb(61,61,61)"/><rect x="18" y="14" width="2" height="2" fill="rgb(54,54,54)"/><rect x="20" y="14" width="2" height="2" fill="rgb(66,66,66)"/><rect x="22" y="14" width="2" height="2" fill="rgb(66,66,66)"/><rect x="24" y="14" width="2" height="2" fill="rgb(56,56,56)"/><rect x="26" y="14" width="2" height="2" fill="rgb(52,52,52)"/><rect x="28" y="14" width="2" height="2" fill="rgb(58,58,58)"/><rect x="30" y="14" width="2" height="2" fill="rgb(57,57,57)"/><rect x="32" y="14" width="2" height="2" fill="rgb(62,62,62)"/><rect x="0" y="16" width="2" height="2" fill="rgb(62,62,62)"/><rect x="2" y="16" width="2" height="2" fill="rgb(64,64,64)"/><rect x="4" y="16" width="2" height="2" fill="rgb(63,63,63)"/><rect x="6" y="16" width="2" height="2" fill="rgb(59,59,59)"/><rect x="8" y="16" width="2" height="2" fill="rgb(50,50,50)"/><rect x="10" y="16" width="2" height="2" fill="rgb(54,54,54)"/><rect x="12" y="16" width="2" height="2" fill="rgb(51,51,51)"/><rect x="14" y="16" width="2" height="2" fill="rgb(63,63,63)"/><rect x="16" y="16" width="2" height="2" fill="rgb(65,65,65)"/><rect x="18" y="16" width="2" height="2" fill="rgb(65,65,65)"/><rect x="20" y="16" width="2" height="2" fill="rgb(50,50,50)"/><rect x="22" y="16" width="2" height="2" fill="rgb(52,52,52)"/><rect x="24" y="16" width="2" height="2" fill="rgb(62,62,62)"/><rect x="26" y="16" width="2" height="2" fill="rgb(66,66,66)"/><rect x="28" y="16" width="2" height="2" fill="rgb(64,64,64)"/><rect x="30" y="16" width="2" height="2" fill="rgb(64,64,64)"/><rect x="32" y="16" width="2" height="2" fill="rgb(57,57,57)"/><rect x="0" y="18" width="2" height="2" fill="rgb(53,53,53)"/><rect x="2" y="18" width="2" height="2" fill="rgb(57,57,57)"/><rect x="4" y="18" width="2" height="2" fill="rgb(54,54,54)"/><rect x="6" y="18" width="2" height="2" fill="rgb(54,54,54)"/><rect x="8" y="18" width="2" height="2" fill="rgb(66,66,66)"/><rect x="10" y="18" width="2" height="2" fill="rgb(53,53,53)"/><rect x="12" y="18" width="2" height="2" fill="rgb(64,64,64)"/><rect x="14" y="18" width="2" height="2" fill="rgb(52,52,52)"/><rect x="16" y="18" width="2" height="2" fill="rgb(51,51,51)"/><rect x="18" y="18" width="2" height="2" fill="rgb(50,50,50)"/><rect x="20" y="18" width="2" height="2" fill="rgb(54,54,54)"/><rect x="22" y="18" width="2" height="2" fill="rgb(57,57,57)"/><rect x="24" y="18" width="2" height="2" fill="rgb(51,51,51)"/><rect x="26" y="18" width="2" height="2" fill="rgb(59,59,59)"/><rect x="28" y="18" width="2" height="2" fill="rgb(54,54,54)"/><rect x="30" y="18" width="2" height="2" fill="rgb(58,58,58)"/><rect x="32" y="18" width="2" height="2" fill="rgb(66,66,66)"/><rect x="0" y="20" width="2" height="2" fill="rgb(63,63,63)"/><rect x="2" y="20" width="2" height="2" fill="rgb(53,53,53)"/><rect x="4" y="20" width="2" height="2" fill="rgb(53,53,53)"/><rect x="6" y="20" width="2" height="2" fill="rgb(52,52,52)"/><rect x="8" y="20" width="2" height="2" fill="rgb(59,59,59)"/><rect x="10" y="20" width="2" height="2" fill="rgb(66,66,66)"/><rect x="12" y="20" width="2" height="2" fill="rgb(56,56,56)"/><rect x="14" y="20" width="2" height="2" fill="rgb(62,62,62)"/><rect x="16" y="20" width="2" height="2" fill="rgb(58,58,58)"/><rect x="18" y="20" width="2" height="2" fill="rgb(57,57,57)"/><rect x="20" y="20" width="2" height="2" fill="rgb(50,50,50)"/><rect x="22" y="20" width="2" height="2" fill="rgb(50,50,50)"/><rect x="24" y="20" width="2" height="2" fill="rgb(59,59,59)"/><rect x="26" y="20" width="2" height="2" fill="rgb(64,64,64)"/><rect x="28" y="20" width="2" height="2" fill="rgb(58,58,58)"/><rect x="30" y="20" width="2" height="2" fill="rgb(60,60,60)"/><rect x="32" y="20" width="2" height="2" fill="rgb(57,57,57)"/><rect x="0" y="22" width="2" height="2" fill="rgb(65,65,65)"/><rect x="2" y="22" width="2" height="2" fill="rgb(66,66,66)"/><rect x="4" y="22" width="2" height="2" fill="rgb(57,57,57)"/><rect x="6" y="22" width="2" height="2" fill="rgb(57,57,57)"/><rect x="8" y="22" width="2" height="2" fill="rgb(50,50,50)"/><rect x="10" y="22" width="2" height="2" fill="rgb(63,63,63)"/><rect x="12" y="22" width="2" height="2" fill="rgb(59,59,59)"/><rect x="14" y="22" width="2" height="2" fill="rgb(51,51,51)"/><rect x="16" y="22" width="2" height="2" fill="rgb(50,50,50)"/><rect x="18" y="22" width="2" height="2" fill="rgb(56,56,56)"/><rect x="20" y="22" width="2" height="2" fill="rgb(65,65,65)"/><rect x="22" y="22" width="2" height="2" fill="rgb(63,63,63)"/><rect x="24" y="22" width="2" height="2" fill="rgb(52,52,52)"/><rect x="26" y="22" width="2" height="2" fill="rgb(58,58,58)"/><rect x="28" y="22" width="2" height="2" fill="rgb(57,57,57)"/><rect x="30" y="22" width="2" height="2" fill="rgb(63,63,63)"/><rect x="32" y="22" width="2" height="2" fill="rgb(61,61,61)"/><rect x="0" y="24" width="2" height="2" fill="rgb(57,57,57)"/><rect x="2" y="24" width="2" height="2" fill="rgb(65,65,65)"/><rect x="4" y="24" width="2" height="2" fill="rgb(51,51,51)"/><rect x="6" y="24" width="2" height="2" fill="rgb(60,60,60)"/><rect x="8" y="24" width="2" height="2" fill="rgb(63,63,63)"/><rect x="10" y="24" width="2" height="2" fill="rgb(61,61,61)"/><rect x="12" y="24" width="2" height="2" fill="rgb(62,62,62)"/><rect x="14" y="24" width="2" height="2" fill="rgb(56,56,56)"/><rect x="16" y="24" width="2" height="2" fill="rgb(50,50,50)"/><rect x="18" y="24" width="2" height="2" fill="rgb(59,59,59)"/><rect x="20" y="24" width="2" height="2" fill="rgb(66,66,66)"/><rect x="22" y="24" width="2" height="2" fill="rgb(52,52,52)"/><rect x="24" y="24" width="2" height="2" fill="rgb(56,56,56)"/><rect x="26" y="24" width="2" height="2" fill="rgb(65,65,65)"/><rect x="28" y="24" width="2" height="2" fill="rgb(56,56,56)"/><rect x="30" y="24" width="2" height="2" fill="rgb(59,59,59)"/><rect x="32" y="24" width="2" height="2" fill="rgb(56,56,56)"/><rect x="0" y="26" width="2" height="2" fill="rgb(57,57,57)"/><rect x="2" y="26" width="2" height="2" fill="rgb(64,64,64)"/><rect x="4" y="26" width="2" height="2" fill="rgb(57,57,57)"/><rect x="6" y="26" width="2" height="2" fill="rgb(58,58,58)"/><rect x="8" y="26" width="2" height="2" fill="rgb(59,59,59)"/><rect x="10" y="26" width="2" height="2" fill="rgb(53,53,53)"/><rect x="12" y="26" width="2" height="2" fill="rgb(65,65,65)"/><rect x="14" y="26" width="2" height="2" fill="rgb(55,55,55)"/><rect x="16" y="26" width="2" height="2" fill="rgb(57,57,57)"/><rect x="18" y="26" width="2" height="2" fill="rgb(65,65,65)"/><rect x="20" y="26" width="2" height="2" fill="rgb(63,63,63)"/><rect x="22" y="26" width="2" height="2" fill="rgb(51,51,51)"/><rect x="24" y="26" width="2" height="2" fill="rgb(54,54,54)"/><rect x="26" y="26" width="2" height="2" fill="rgb(62,62,62)"/><rect x="28" y="26" width="2" height="2" fill="rgb(51,51,51)"/><rect x="30" y="26" width="2" height="2" fill="rgb(56,56,56)"/><rect x="32" y="26" width="2" height="2" fill="rgb(50,50,50)"/><rect x="0" y="28" width="2" height="2" fill="rgb(54,54,54)"/><rect x="2" y="28" width="2" height="2" fill="rgb(63,63,63)"/><rect x="4" y="28" width="2" height="2" fill="rgb(51,51,51)"/><rect x="6" y="28" width="2" height="2" fill="rgb(51,51,51)"/><rect x="8" y="28" width="2" height="2" fill="rgb(55,55,55)"/><rect x="10" y="28" width="2" height="2" fill="rgb(62,62,62)"/><rect x="12" y="28" width="2" height="2" fill="rgb(64,64,64)"/><rect x="14" y="28" width="2" height="2" fill="rgb(60,60,60)"/><rect x="16" y="28" width="2" height="2" fill="rgb(53,53,53)"/><rect x="18" y="28" width="2" height="2" fill="rgb(52,52,52)"/><rect x="20" y="28" width="2" height="2" fill="rgb(55,55,55)"/><rect x="22" y="28" width="2" height="2" fill="rgb(60,60,60)"/><rect x="24" y="28" width="2" height="2" fill="rgb(56,56,56)"/><rect x="26" y="28" width="2" height="2" fill="rgb(55,55,55)"/><rect x="28" y="28" width="2" height="2" fill="rgb(66,66,66)"/><rect x="30" y="28" width="2" height="2" fill="rgb(64,64,64)"/><rect x="32" y="28" width="2" height="2" fill="rgb(51,51,51)"/><rect x="0" y="30" width="2" height="2" fill="rgb(59,59,59)"/><rect x="2" y="30" width="2" height="2" fill="rgb(62,62,62)"/><rect x="4" y="30" width="2" height="2" fill="rgb(61,61,61)"/><rect x="6" y="30" width="2" height="2" fill="rgb(60,60,60)"/><rect x="8" y="30" width="2" height="2" fill="rgb(64,64,64)"/><rect x="10" y="30" width="2" height="2" fill="rgb(55,55,55)"/><rect x="12" y="30" width="2" height="2" fill="rgb(53,53,53)"/><rect x="14" y="30" width="2" height="2" fill="rgb(50,50,50)"/><rect x="16" y="30" width="2" height="2" fill="rgb(52,52,52)"/><rect x="18" y="30" width="2" height="2" fill="rgb(58,58,58)"/><rect x="20" y="30" width="2" height="2" fill="rgb(52,52,52)"/><rect x="22" y="30" width="2" height="2" fill="rgb(61,61,61)"/><rect x="24" y="30" width="2" height="2" fill="rgb(63,63,63)"/><rect x="26" y="30" width="2" height="2" fill="rgb(53,53,53)"/><rect x="28" y="30" width="2" height="2" fill="rgb(56,56,56)"/><rect x="30" y="30" width="2" height="2" fill="rgb(62,62,62)"/><rect x="32" y="30" width="2" height="2" fill="rgb(61,61,61)"/><rect x="0" y="32" width="2" height="2" fill="rgb(59,59,59)"/><rect x="2" y="32" width="2" height="2" fill="rgb(63,63,63)"/><rect x="4" y="32" width="2" height="2" fill="rgb(52,52,52)"/><rect x="6" y="32" width="2" height="2" fill="rgb(51,51,51)"/><rect x="8" y="32" width="2" height="2" fill="rgb(65,65,65)"/><rect x="10" y="32" width="2" height="2" fill="rgb(56,56,56)"/><rect x="12" y="32" width="2" height="2" fill="rgb(61,61,61)"/><rect x="14" y="32" width="2" height="2" fill="rgb(64,64,64)"/><rect x="16" y="32" width="2" height="2" fill="rgb(56,56,56)"/><rect x="18" y="32" width="2" height="2" fill="rgb(60,60,60)"/><rect x="20" y="32" width="2" height="2" fill="rgb(61,61,61)"/><rect x="22" y="32" width="2" height="2" fill="rgb(65,65,65)"/><rect x="24" y="32" width="2" height="2" fill="rgb(50,50,50)"/><rect x="26" y="32" width="2" height="2" fill="rgb(63,63,63)"/><rect x="28" y="32" width="2" height="2" fill="rgb(57,57,57)"/><rect x="30" y="32" width="2" height="2" fill="rgb(62,62,62)"/><rect x="32" y="32" width="2" height="2" fill="rgb(51,51,51)"/><circle cx="17.5" cy="17.5" r="8.2" fill="none" stroke="#00ff00" stroke-width="1.1" shape-rendering="auto"/></svg></div>
<div class="th2" style="left:857px;top:593px"><svg width="34" height="34" shape-rendering="crispEdges"><rect width="34" height="34" fill="#6c6c6c"/><rect x="28" y="10" width="3" height="3" fill="#888888"/><rect x="29" y="15" width="3.5" height="10.5" fill="#888888"/><rect x="1" y="22" width="3" height="4.5" fill="#888888"/><rect x="3" y="29.5" width="3.5" height="2.5" fill="#888888"/><rect x="6" y="20" width="2.5" height="2.5" fill="#888888"/><rect x="5.5" y="25.5" width="2" height="3" fill="#888888"/><rect x="30.5" y="26.5" width="2" height="5" fill="#888888"/><path d="M11.5 27.6L14.5 19.4L14.3 15.3L15.3 11.7L16 9.7L17.1 5.6L18.4 3.8L20.2 6.1L20.7 10.2L21.9 13.3L22.4 17.3L23.7 21.4L24.5 25.5L26.3 30.6" fill="none" stroke="#d0ff40" stroke-width="1"/><rect x="16" y="10" width="3" height="3.3" fill="#00ff00"/><rect x="13" y="12" width="3" height="3" fill="#00ff00"/><rect x="19" y="11" width="8" height="3" fill="#00ff00"/><rect x="19" y="14" width="6" height="2.8" fill="#00ff00"/><rect x="12" y="16" width="3" height="3" fill="#00ff00"/><rect x="16" y="18" width="3" height="3" fill="#00ff00"/><rect x="27" y="17" width="3" height="3" fill="#00ff00"/><rect x="9" y="20" width="4" height="7" fill="#00ff00"/><rect x="7" y="23" width="10" height="4" fill="#00ff00"/><rect x="11" y="21" width="2" height="2" fill="#00ff00"/><rect x="8" y="27" width="9" height="5.6" fill="#00ff00"/><rect x="21" y="23" width="3" height="3" fill="#00ff00"/><rect x="22" y="27" width="6" height="5.6" fill="#00ff00"/><rect x="28" y="30.5" width="2" height="2" fill="#00ff00"/></svg></div>
<div class="lbl" style="left:821px;top:628px;transform:scaleX(0.92)">S/N =</div><div class="lbl" style="left:856.5px;top:628px;transform:scaleX(0.92)">3.90</div>

<div id="tb"><div id="tbin">
<div class="tbt" style="left:5px;transform:scaleX(0.97)">Signal-minus-Background</div><div class="arr" style="left:151px"></div>
<div class="tbt" style="left:164px;transform:scaleX(0.97)">No Normalisation</div><div class="arr" style="left:265px"></div>
<div class="tbt" style="left:279px;transform:scaleX(0.97)">No Binning</div><div class="arr" style="left:344.5px"></div>
<div class="tbt" style="left:374px;transform:scaleX(0.95)">Include Objects</div><div class="arr" style="left:462px"></div>
</div>
<svg style="position:absolute;left:0;top:0" width="980" height="24" shape-rendering="crispEdges">
<g transform="translate(356,4)">
<rect x="0" y="0" width="16" height="16" fill="#000"/>
<rect x="1" y="1" width="14" height="14" fill="#00ff00"/>
<rect x="1" y="1" width="7" height="14" fill="#ffff00"/>
<path d="M1 1H15V4.5L8 8L1 4.5Z" fill="#00ffff"/>
<path d="M1 4.5L8 8L15 4.5M8 8V15" stroke="#202020" stroke-width="1" fill="none" shape-rendering="auto"/>
</g>
<g fill="#8a8a8a"><rect x="975" y="8" width="2" height="2"/><rect x="971" y="12" width="2" height="2"/><rect x="975" y="12" width="2" height="2"/><rect x="967" y="16" width="2" height="2"/><rect x="971" y="16" width="2" height="2"/><rect x="975" y="16" width="2" height="2"/></g>
</svg>
</div>
<div id="tbl"></div>
<div style="position:absolute;left:0;top:666px;width:980px;height:1px;background:#c5d0d5"></div>
</body></html>
